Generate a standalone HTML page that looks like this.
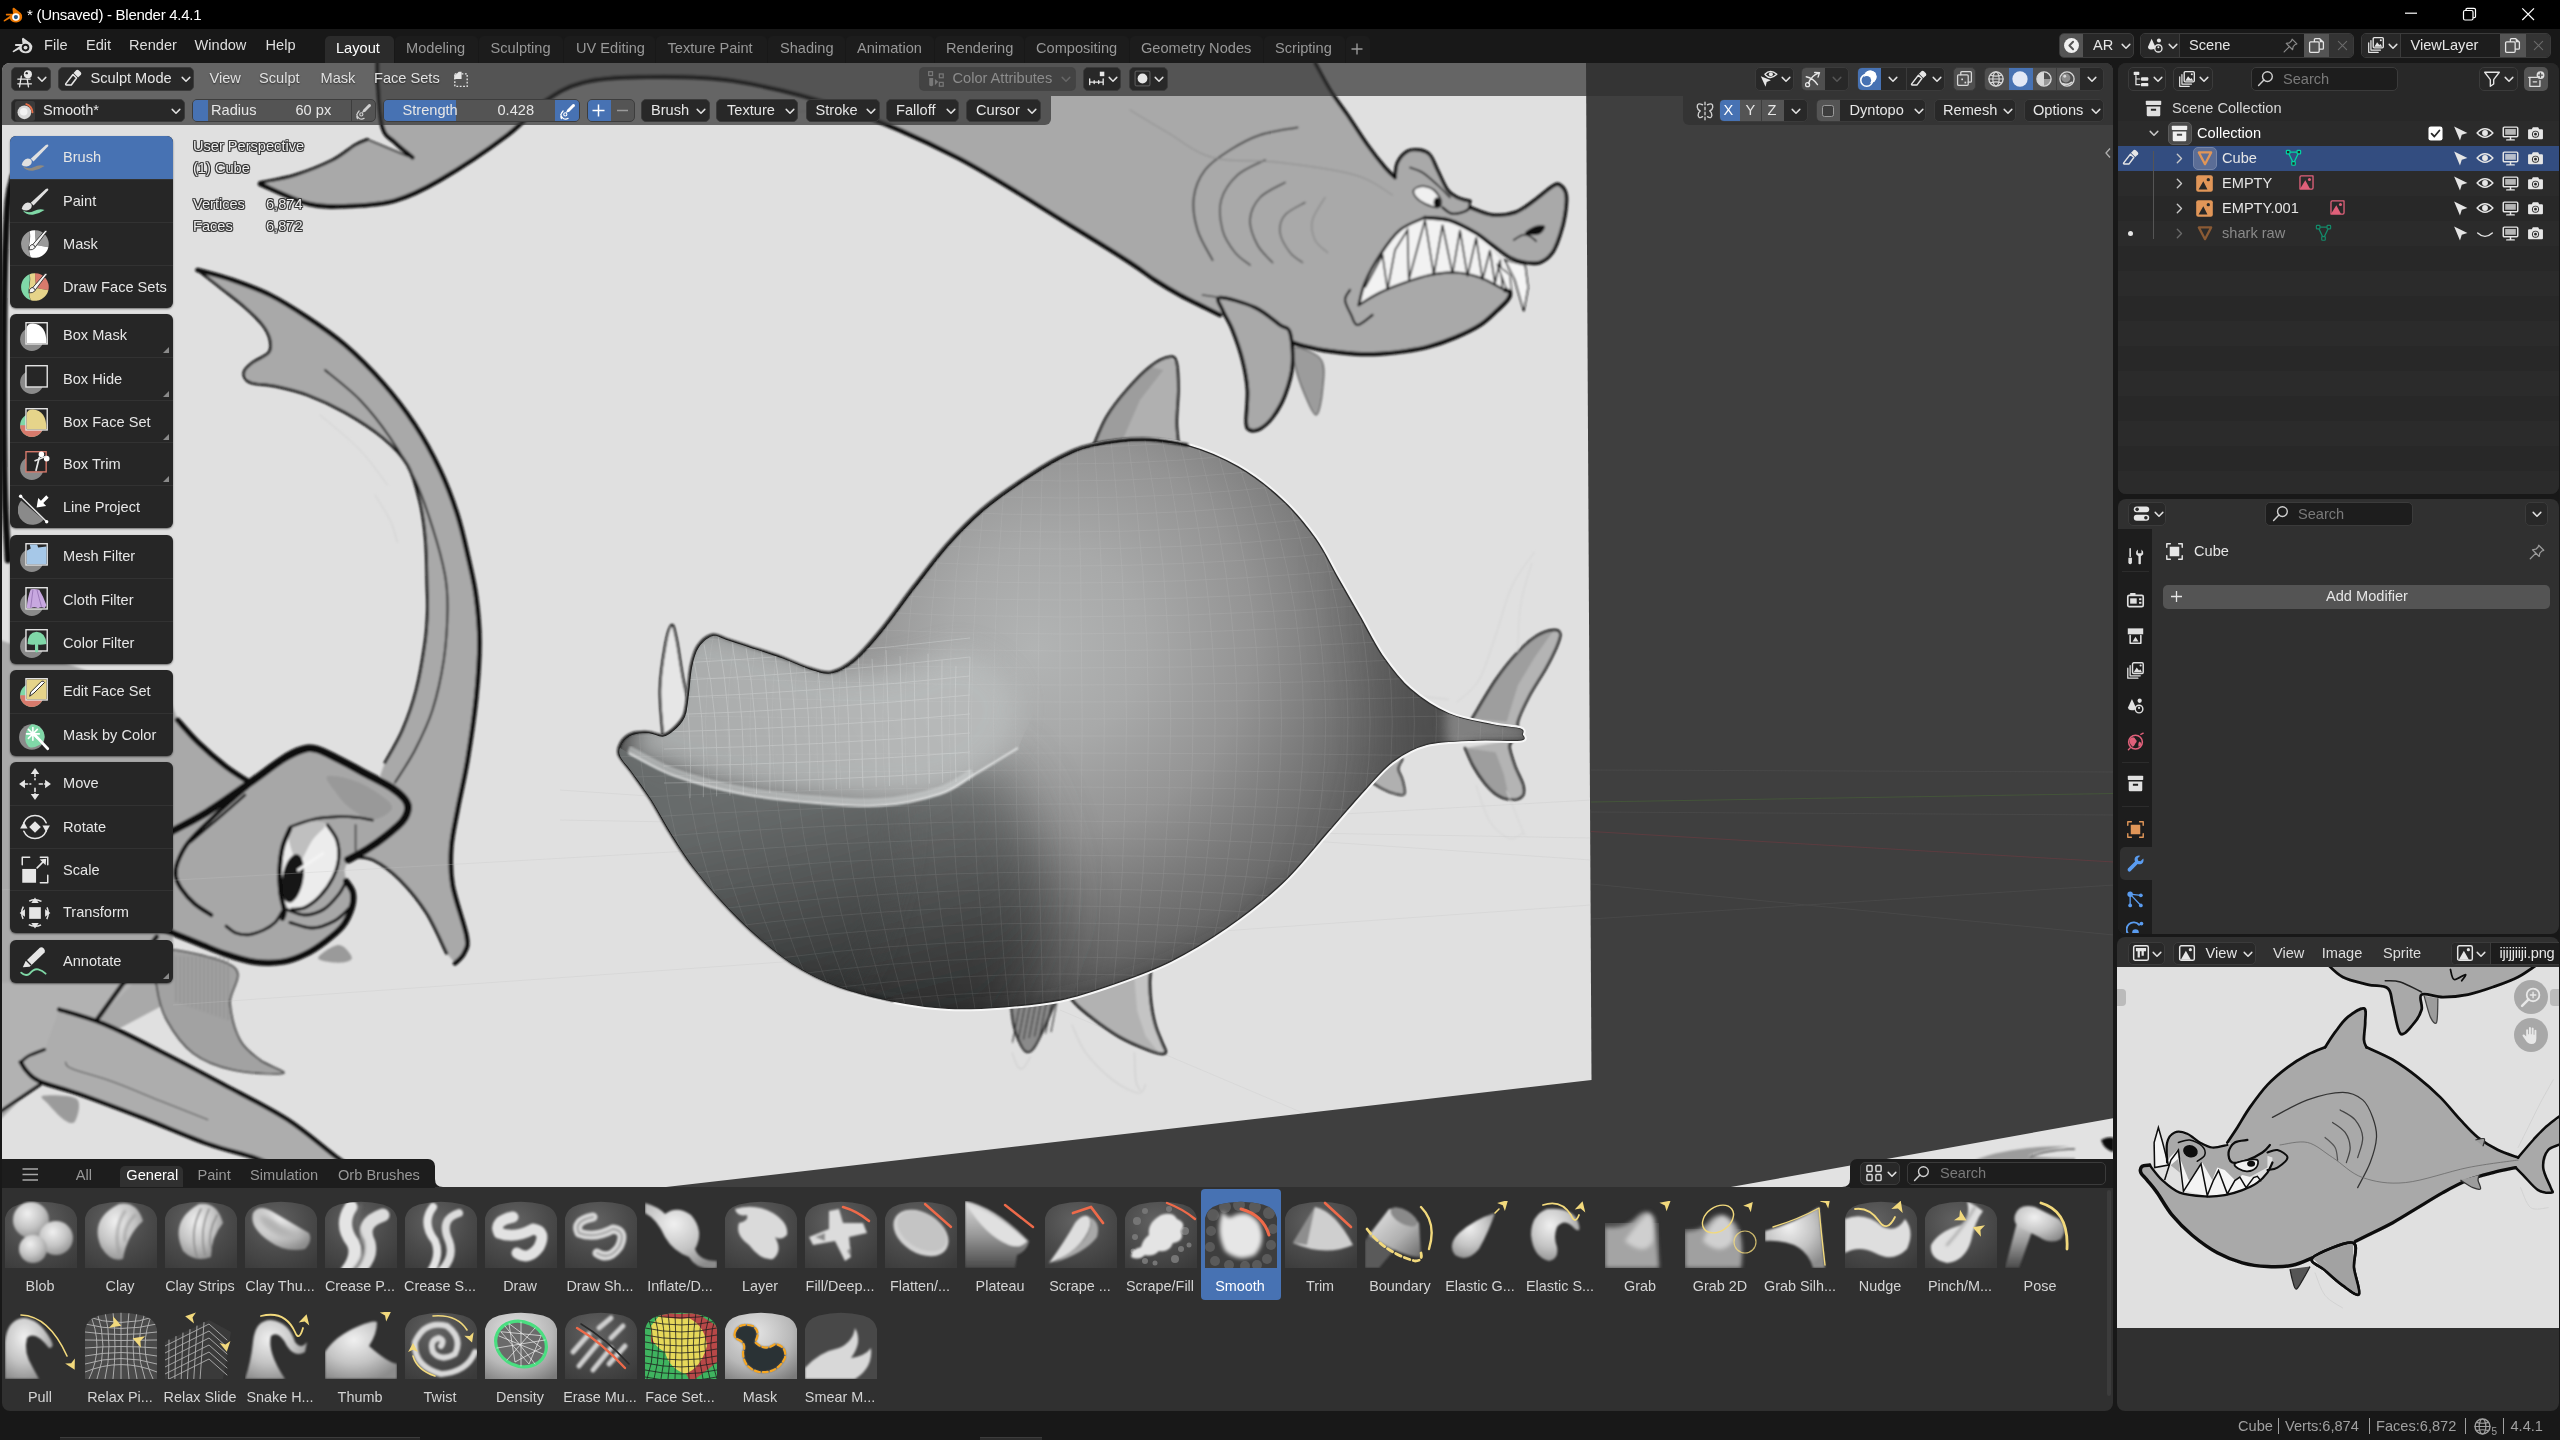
<!DOCTYPE html><html><head><meta charset="utf-8"><title>Blender</title><style>
*{box-sizing:border-box;margin:0;padding:0}
html{width:2560px;height:1440px;overflow:hidden;background:#181818}
body{width:2560px;height:1440px;overflow:hidden;background:transparent;will-change:transform}
body{position:relative;font-family:"Liberation Sans",sans-serif;font-size:14.6px;color:#e6e6e6;-webkit-font-smoothing:antialiased}
div,svg.abs{position:absolute}
.t{white-space:nowrap;line-height:20px;height:20px;color:#e6e6e6}
.tc{white-space:nowrap;line-height:20px;height:20px;color:#e6e6e6;text-align:center}
.dim{color:#989898}
.sh{text-shadow:0 1px 1.5px rgba(0,0,0,.55)}
.btn{background:#282828;border:1px solid #3b3b3b;border-radius:5px}
.fld{background:#545454;border:1px solid #3d3d3d;border-radius:5px;overflow:hidden}
.g{background:#545454}
.bl{background:#4772b3}
.tool{background:#262626;border-radius:6px;box-shadow:0 1px 2px rgba(0,0,0,.5)}
.ti{left:0;width:163px;height:43px;border-top:1px solid #323232}
.ti:first-child{border-top:none}
.ti .t{left:53px;top:11px;font-size:14.6px}
.ov{white-space:nowrap;line-height:20px;height:20px;color:#efefef;text-shadow:1px 1px 0 rgba(50,50,50,.8),-1px -1px 0 rgba(50,50,50,.8),1px -1px 0 rgba(50,50,50,.8),-1px 1px 0 rgba(50,50,50,.8),0 1px 0 rgba(50,50,50,.8),1px 0 0 rgba(50,50,50,.8),0 -1px 0 rgba(50,50,50,.8),-1px 0 0 rgba(50,50,50,.8)}
.bt{white-space:nowrap;line-height:18px;height:18px;width:80px;text-align:center;color:#d4d4d4;font-size:14.4px}
</style></head><body>
<svg width="0" height="0" style="position:absolute"><defs><radialGradient id="bd" cx="0.42" cy="0.3" r="0.85"><stop offset="0" stop-color="#626262"/><stop offset="0.55" stop-color="#4a4a4a"/><stop offset="1" stop-color="#3a3a3a"/></radialGradient><radialGradient id="bdl" cx="0.42" cy="0.3" r="0.85"><stop offset="0" stop-color="#e4e4e4"/><stop offset="0.6" stop-color="#b8b8b8"/><stop offset="1" stop-color="#7a7a7a"/></radialGradient><radialGradient id="bw" cx="0.4" cy="0.32" r="0.75"><stop offset="0" stop-color="#f0f0f0"/><stop offset="0.55" stop-color="#c4c4c4"/><stop offset="1" stop-color="#8c8c8c"/></radialGradient><linearGradient id="bl" x1="0" y1="0" x2="1" y2="1"><stop offset="0" stop-color="#e8e8e8"/><stop offset="0.6" stop-color="#b0b0b0"/><stop offset="1" stop-color="#6a6a6a"/></linearGradient><linearGradient id="bv" x1="0" y1="0" x2="0" y2="1"><stop offset="0" stop-color="#dcdcdc"/><stop offset="0.5" stop-color="#9a9a9a"/><stop offset="1" stop-color="#4a4a4a"/></linearGradient><filter id="bb1" x="-20%" y="-20%" width="140%" height="140%"><feGaussianBlur stdDeviation="0.9"/></filter><filter id="bb2" x="-20%" y="-20%" width="140%" height="140%"><feGaussianBlur stdDeviation="2.2"/></filter><clipPath id="bdc"><path d="M0 67V17Q2 7 14 3.5Q36 -2 58 3.5Q70 7 72 17V67Z"/></clipPath></defs></svg>
<div class="" style="left:0px;top:0px;width:2560px;height:29px;background:#000"></div>
<svg class="abs" style="left:3px;top:4.5px;" width="20" height="20" viewBox="0 0 16 16"><path d="M8.8 2.2L14.2 6.3Q15.8 7.8 15.3 10.2Q14.6 13.6 10.6 13.9Q6.6 13.9 5.4 10.8L1.2 13.2Q0.2 13.2 0.6 12.2L6 8.3H2.6Q1.8 7.6 2.6 6.9H8L7.6 3.2Q7.8 2 8.8 2.2Z" fill="#ea7600" /><circle cx="10.3" cy="9.6" r="3" fill="#fff"/><circle cx="10.3" cy="9.6" r="1.7" fill="#265787"/></svg>
<div class="t" style="left:27px;top:4.5px;font-size:15px;letter-spacing:-0.28px;color:#fff">* (Unsaved) - Blender 4.4.1</div>
<svg class="abs" style="left:2400px;top:0" width="160" height="29" viewBox="0 0 160 29"><g fill="none" stroke="#fff" stroke-width="1.2"><path d="M5 13.2H17"/><rect x="63.5" y="10.5" width="9.5" height="9.5" rx="1.5"/><path d="M66 10.5V9.5Q66 8.3 67.2 8.3H74Q75.5 8.3 75.5 9.8V16.5Q75.5 17.7 74.3 17.7H73.2"/><path d="M122.3 8.3L134 20M134 8.3L122.3 20"/></g></svg>
<div class="" style="left:0px;top:29px;width:2560px;height:34px;background:#181818"></div>
<svg class="abs" style="left:12px;top:35px;" width="21" height="21" viewBox="0 0 16 16"><path d="M8.8 2.2L14.2 6.3Q15.8 7.8 15.3 10.2Q14.6 13.6 10.6 13.9Q6.6 13.9 5.4 10.8L1.2 13.2Q0.2 13.2 0.6 12.2L6 8.3H2.6Q1.8 7.6 2.6 6.9H8L7.6 3.2Q7.8 2 8.8 2.2Z" fill="#dcdcdc" /><circle cx="10.3" cy="9.6" r="2.9" fill="#181818"/><circle cx="10.3" cy="9.6" r="1.5" fill="#dcdcdc"/></svg>
<div class="t" style="left:44px;top:35px;color:#dedede">File</div>
<div class="t" style="left:86px;top:35px;color:#dedede">Edit</div>
<div class="t" style="left:129px;top:35px;color:#dedede">Render</div>
<div class="t" style="left:194.5px;top:35px;color:#dedede">Window</div>
<div class="t" style="left:265.5px;top:35px;color:#dedede">Help</div>
<div class="" style="left:324.5px;top:36px;width:69px;height:27px;background:#2b2b2b;border-radius:5px 5px 0 0"></div>
<div class="t" style="left:336px;top:38px;color:#fff">Layout</div>
<div class="" style="left:395px;top:36px;width:83px;height:27px;background:#1c1c1c;border-radius:5px 5px 0 0"></div>
<div class="t" style="left:406px;top:38px;color:#989898">Modeling</div>
<div class="" style="left:479px;top:36px;width:84px;height:27px;background:#1c1c1c;border-radius:5px 5px 0 0"></div>
<div class="t" style="left:490.5px;top:38px;color:#989898">Sculpting</div>
<div class="" style="left:564px;top:36px;width:91px;height:27px;background:#1c1c1c;border-radius:5px 5px 0 0"></div>
<div class="t" style="left:576px;top:38px;color:#989898">UV Editing</div>
<div class="" style="left:656px;top:36px;width:111px;height:27px;background:#1c1c1c;border-radius:5px 5px 0 0"></div>
<div class="t" style="left:667.5px;top:38px;color:#989898">Texture Paint</div>
<div class="" style="left:768px;top:36px;width:77px;height:27px;background:#1c1c1c;border-radius:5px 5px 0 0"></div>
<div class="t" style="left:780px;top:38px;color:#989898">Shading</div>
<div class="" style="left:846px;top:36px;width:87.5px;height:27px;background:#1c1c1c;border-radius:5px 5px 0 0"></div>
<div class="t" style="left:857px;top:38px;color:#989898">Animation</div>
<div class="" style="left:934.5px;top:36px;width:89px;height:27px;background:#1c1c1c;border-radius:5px 5px 0 0"></div>
<div class="t" style="left:946px;top:38px;color:#989898">Rendering</div>
<div class="" style="left:1024.5px;top:36px;width:104px;height:27px;background:#1c1c1c;border-radius:5px 5px 0 0"></div>
<div class="t" style="left:1036px;top:38px;color:#989898">Compositing</div>
<div class="" style="left:1129.5px;top:36px;width:133px;height:27px;background:#1c1c1c;border-radius:5px 5px 0 0"></div>
<div class="t" style="left:1141px;top:38px;color:#989898">Geometry Nodes</div>
<div class="" style="left:1263.5px;top:36px;width:81.5px;height:27px;background:#1c1c1c;border-radius:5px 5px 0 0"></div>
<div class="t" style="left:1275px;top:38px;color:#989898">Scripting</div>
<div class="" style="left:1346px;top:36px;width:24px;height:27px;background:#1c1c1c;border-radius:5px 5px 0 0"></div>
<svg class="abs" style="left:1350px;top:42px" width="14" height="14" viewBox="0 0 14 14"><path d="M7 1.5V12.5M1.5 7H12.5" stroke="#989898" stroke-width="1.4"/></svg>
<div class="" style="left:2059px;top:33px;width:75px;height:24.5px;background:#282828;border:1px solid #3b3b3b;border-radius:5px;overflow:hidden"><div style="left:-1px;top:-1px;width:24px;height:24.5px;background:#545454"></div></div>
<svg class="abs" style="left:2062.5px;top:36.8px;" width="17" height="17" viewBox="0 0 16 16"><circle cx="8" cy="8" r="7" fill="#f0f0f0"/><path d="M9.5 4.5L6 8L9.5 11.5" fill="none" stroke="#545454" stroke-width="1.8" stroke-linecap="round" stroke-linejoin="round" /></svg>
<div class="t" style="left:2093px;top:35.3px;">AR</div>
<svg class="abs" style="left:2120.5px;top:42.5px" width="10" height="7" viewBox="0 0 10 7"><path d="M1.2 1.4L5 5.2L8.8 1.4" fill="none" stroke="#e0e0e0" stroke-width="1.5" stroke-linecap="round" stroke-linejoin="round"/></svg>
<div class="" style="left:2140px;top:33px;width:214px;height:24.5px;background:#1d1d1d;border:1px solid #3b3b3b;border-radius:5px;overflow:hidden"><div style="left:-1px;top:-1px;width:40px;height:24.5px;background:#282828;border-right:1px solid #3b3b3b"></div><div style="left:163px;top:-1px;width:25px;height:24.5px;background:#545454"></div><div style="left:188px;top:-1px;width:26px;height:24.5px;background:#333"></div></div>
<svg class="abs" style="left:2146px;top:36.3px;" width="18" height="18" viewBox="0 0 16 16"><path d="M5 2.5L8.5 10Q8 12 5 12Q1.5 12 1.8 9.5Z" fill="#e6e6e6" /><circle cx="11.5" cy="4" r="1.8" fill="#e6e6e6"/><circle cx="11" cy="11" r="3.2" fill="none" stroke="#e6e6e6" stroke-width="1.2"/><circle cx="11" cy="10" r="0.9" fill="#e6e6e6"/></svg>
<svg class="abs" style="left:2167.5px;top:42.5px" width="10" height="7" viewBox="0 0 10 7"><path d="M1.2 1.4L5 5.2L8.8 1.4" fill="none" stroke="#e0e0e0" stroke-width="1.5" stroke-linecap="round" stroke-linejoin="round"/></svg>
<div class="t" style="left:2189px;top:35.3px;">Scene</div>
<svg class="abs" style="left:2282px;top:37px;" width="17" height="17" viewBox="0 0 16 16"><path d="M9.5 2L14 6.5L12.5 7L10.5 9L10 12L4 6L7 5.5L9 3.5ZM7 9L2 14" fill="none" stroke="#8a8a8a" stroke-width="1.1" stroke-linecap="round" stroke-linejoin="round" /></svg>
<svg class="abs" style="left:2308px;top:36.8px;" width="17" height="17" viewBox="0 0 16 16"><path d="M6 4.5V2.5Q6 1.5 7 1.5H11L14.5 5V10.5Q14.5 11.5 13.5 11.5H10.5M10.5 5.5V13.5Q10.5 14.5 9.5 14.5H2.5Q1.5 14.5 1.5 13.5V5.5Q1.5 4.5 2.5 4.5H9.5Q10.5 4.5 10.5 5.5Z" fill="none" stroke="#e6e6e6" stroke-width="1.2" stroke-linecap="round" stroke-linejoin="round" /><path d="M11 1.5L14.5 5H11Z" fill="#e6e6e6" /></svg>
<svg class="abs" style="left:2336.5px;top:39.8px;" width="11" height="11" viewBox="0 0 16 16"><path d="M2 2L14 14M14 2L2 14" fill="none" stroke="#6a6a6a" stroke-width="1.6" stroke-linecap="round" stroke-linejoin="round" /></svg>
<div class="" style="left:2361px;top:33px;width:189.5px;height:24.5px;background:#1d1d1d;border:1px solid #3b3b3b;border-radius:5px;overflow:hidden"><div style="left:-1px;top:-1px;width:40px;height:24.5px;background:#282828;border-right:1px solid #3b3b3b"></div><div style="left:138px;top:-1px;width:25.5px;height:24.5px;background:#545454"></div><div style="left:163.5px;top:-1px;width:26px;height:24.5px;background:#333"></div></div>
<svg class="abs" style="left:2366.5px;top:36.3px;" width="18" height="18" viewBox="0 0 16 16"><path d="M3.5 4V12.5H12M1.5 6V14.5H10" fill="none" stroke="#e6e6e6" stroke-width="1.1" stroke-linecap="round" stroke-linejoin="round" /><rect x="5.5" y="1.5" width="9" height="9" rx="1" fill="none" stroke="#e6e6e6" stroke-width="1.2"/><path d="M6.5 9.5L9 5.5L11 8L12 7L13.5 9.5Z" fill="#e6e6e6" /><circle cx="12.3" cy="3.8" r="0.9" fill="#e6e6e6"/></svg>
<svg class="abs" style="left:2387.5px;top:42.5px" width="10" height="7" viewBox="0 0 10 7"><path d="M1.2 1.4L5 5.2L8.8 1.4" fill="none" stroke="#e0e0e0" stroke-width="1.5" stroke-linecap="round" stroke-linejoin="round"/></svg>
<div class="t" style="left:2410.5px;top:35.3px;">ViewLayer</div>
<svg class="abs" style="left:2504px;top:36.8px;" width="17" height="17" viewBox="0 0 16 16"><path d="M6 4.5V2.5Q6 1.5 7 1.5H11L14.5 5V10.5Q14.5 11.5 13.5 11.5H10.5M10.5 5.5V13.5Q10.5 14.5 9.5 14.5H2.5Q1.5 14.5 1.5 13.5V5.5Q1.5 4.5 2.5 4.5H9.5Q10.5 4.5 10.5 5.5Z" fill="none" stroke="#e6e6e6" stroke-width="1.2" stroke-linecap="round" stroke-linejoin="round" /><path d="M11 1.5L14.5 5H11Z" fill="#e6e6e6" /></svg>
<svg class="abs" style="left:2532.5px;top:39.8px;" width="11" height="11" viewBox="0 0 16 16"><path d="M2 2L14 14M14 2L2 14" fill="none" stroke="#6a6a6a" stroke-width="1.6" stroke-linecap="round" stroke-linejoin="round" /></svg>
<div style="left:2px;top:63px;width:2111px;height:1127px;border-radius:8px 8px 0 0;overflow:hidden;background:#3f3f3f">
<svg class="abs" style="left:0;top:0" width="2112" height="1127" viewBox="2 63 2112 1127">
<defs>
<clipPath id="cpl"><path d="M0 63L1586 63L1591.5 1080L0 1264Z"/></clipPath>
<filter id="b1" x="-5%" y="-5%" width="110%" height="110%"><feGaussianBlur stdDeviation="1.0"/></filter>
<filter id="b6" filterUnits="userSpaceOnUse" x="0" y="0" width="2200" height="1300"><feGaussianBlur stdDeviation="6"/></filter>
<filter id="b14" filterUnits="userSpaceOnUse" x="0" y="0" width="2200" height="1300"><feGaussianBlur stdDeviation="14"/></filter>
<filter id="b30" filterUnits="userSpaceOnUse" x="0" y="0" width="2200" height="1300"><feGaussianBlur stdDeviation="30"/></filter>
</defs>
<rect x="0" y="60" width="2120" height="1140" fill="#3f3f3f"/>
<g stroke="#484848" stroke-width="1" fill="none"><path d="M1591 884L2114 935"/><path d="M1591 919L2114 885"/><path d="M1591 770L2114 772"/><path d="M1591 812L2114 815"/></g>
<path d="M1591 831.5L2114 862" stroke="#5c3c40" stroke-width="1"/>
<path d="M1591 802L2114 793.5" stroke="#44553a" stroke-width="1"/>
<path d="M0 63L1586 63L1591.5 1080L0 1264Z" fill="#e0e0e0"/>
<g clip-path="url(#cpl)" filter="url(#b1)">
<path d="M378 60L1312 60L1315 63L1330 90L1347.5 115L1367.5 145L1385 167.5L1395 177.5L1397.5 162.5L1407.5 151.2L1420 150L1430 155L1437.5 170L1447.5 190L1457.5 197.5L1470 201.2L1470 207.5L1492.5 215L1515 212.5L1535 200L1552.5 186.2L1560 185L1566.2 195L1565 215L1560 235L1552.5 252.5L1540 262.5L1525 262.5L1510 257.5L1492.5 245L1475 232.5L1450 220.5L1425 217.5L1425 217.5L1400 230L1380 255L1365 282.5L1358.8 305L1358.8 305L1380 292.5L1405 282.5L1430 275L1455 272.5L1480 277.5L1500 287.5L1505 290L1505 290L1510 292.5L1507.5 300L1497.5 310L1480 325L1455 337.5L1430 346.2L1405 351.2L1380 353.8L1355 353.8L1330 351.2L1305 346.2L1292.5 342.5L1292.5 365L1285 395L1272.5 417.5L1260 428.8L1250 430L1246.2 422.5L1247.5 390L1242.5 360L1232.5 330L1222.5 310L1220 315L1205 307.5L1180 295L1155 280L1130 262.5L1069.9 225L957.4 157.5L844.9 108.7L732.4 80.6L638.7 76.9L582.4 82.5L545 101L507.5 135L440 180L395 200.6L350 206L309 204L260 184L260 182.5L295 175L332.5 160L355 145L367.5 139.5L412.5 157.5L395 142.5L382.5 127.5L378 85L377.5 60Z" fill="#a9a9a9"/>
<path d="M1295 347.5C1299.4 346.7 1316.7 352.9 1321.2 360C1325.8 367.1 1323.3 380.8 1322.5 390C1321.7 399.2 1319.2 414.2 1316.2 415C1313.3 415.8 1308.5 403.3 1305 395C1301.5 386.7 1296.7 372.9 1295 365C1293.3 357.1 1290.6 348.3 1295 347.5Z" fill="#9c9c9c" stroke="#555" stroke-width="1.2"/>
<path d="M1358.8 305L1365 282.5L1380 255L1400 230L1425 217.5L1450 222.5L1475 235L1492.5 250L1505 265L1505 290L1500 287.5L1480 277.5L1455 272.5L1430 275L1405 282.5L1380 292.5L1358.8 305Z" fill="#f2f2f2"/>
<path d="M1365 287.5L1382.5 255L1387.5 290L1395 250L1407.5 230L1408.8 280L1425 220L1433.8 275L1442.5 225L1452.5 273.8L1460 230L1467.5 276.2L1476.2 237.5L1482.5 280L1490 250L1495 283.8L1500 260L1502.5 287.5" fill="none" stroke="#0c0c0c" stroke-width="1.6" stroke-linejoin="miter"/>
<path d="M1505 260L1515 280L1523.8 311.2L1528 287.5L1525 265Z" fill="#f4f4f4" stroke="#0c0c0c" stroke-width="1.5"/>
<path d="M1497.5 265L1505 285L1511.2 297.5L1510 275Z" fill="#f4f4f4" stroke="#0c0c0c" stroke-width="1.2"/>
<path d="M260 184C268.2 187.3 294 200.3 309 204C324 207.7 335.7 206.6 350 206C364.3 205.4 380 204.9 395 200.6C410 196.3 421.2 190.9 440 180C458.8 169.1 490 148.2 507.5 135C525 121.8 532.5 109.8 545 101C557.5 92.2 566.8 86.5 582.4 82.5C598 78.5 613.7 77.2 638.7 76.9C663.7 76.6 698 75.3 732.4 80.6C766.8 85.9 807.4 95.9 844.9 108.7C882.4 121.5 919.9 138.1 957.4 157.5C994.9 176.9 1041.1 207.5 1069.9 225C1098.7 242.5 1115.8 253.3 1130 262.5C1144.2 271.7 1146.7 274.6 1155 280C1163.3 285.4 1171.7 290.4 1180 295C1188.3 299.6 1198.3 304.2 1205 307.5C1211.7 310.8 1217.5 313.8 1220 315" fill="none" stroke="#0c0c0c" stroke-width="4.6" stroke-linecap="round" stroke-linejoin="round" />
<path d="M260 182.5C265.8 181.2 282.9 178.8 295 175C307.1 171.2 322.5 165 332.5 160C342.5 155 349.2 148.4 355 145C360.8 141.6 365.4 140.4 367.5 139.5" fill="none" stroke="#0c0c0c" stroke-width="3.0" stroke-linecap="round" stroke-linejoin="round" />
<path d="M367.5 139.5C375 142.5 407.9 157 412.5 157.5C417.1 158 397.9 145 395 142.5" fill="none" stroke="#0c0c0c" stroke-width="1.6" stroke-linecap="round" stroke-linejoin="round" />
<path d="M412.5 157.5C409.6 155 400 147.5 395 142.5C390 137.5 385.3 137.1 382.5 127.5C379.7 117.9 378.8 96.2 378 85C377.2 73.8 377.6 64.2 377.5 60" fill="none" stroke="#0c0c0c" stroke-width="4.2" stroke-linecap="round" stroke-linejoin="round" />
<path d="M1220 297.5C1225.4 297.1 1245 302.9 1255 307.5C1265 312.1 1274.2 320.8 1280 325C1285.8 329.2 1287.9 325.8 1290 332.5C1292.1 339.2 1293.3 354.6 1292.5 365C1291.7 375.4 1288.3 386.2 1285 395C1281.7 403.8 1276.7 411.9 1272.5 417.5C1268.3 423.1 1263.8 426.7 1260 428.8C1256.2 430.8 1252.3 431 1250 430C1247.7 429 1246.7 429.2 1246.2 422.5C1245.8 415.8 1248.1 400.4 1247.5 390C1246.9 379.6 1245 370 1242.5 360C1240 350 1235.8 338.3 1232.5 330C1229.2 321.7 1224.6 315.4 1222.5 310C1220.4 304.6 1214.6 297.9 1220 297.5Z" fill="none" stroke="#0c0c0c" stroke-width="3.6" stroke-linecap="round" stroke-linejoin="round" />
<path d="M1292.5 342.5C1294.6 343.1 1298.8 344.8 1305 346.2C1311.2 347.7 1321.7 350 1330 351.2C1338.3 352.5 1346.7 353.3 1355 353.8C1363.3 354.2 1371.7 354.2 1380 353.8C1388.3 353.3 1396.7 352.5 1405 351.2C1413.3 350 1421.7 348.5 1430 346.2C1438.3 344 1446.7 341 1455 337.5C1463.3 334 1472.9 329.6 1480 325C1487.1 320.4 1492.9 314.2 1497.5 310C1502.1 305.8 1505.4 302.9 1507.5 300C1509.6 297.1 1510.4 294.2 1510 292.5C1509.6 290.8 1505.8 290.4 1505 290" fill="none" stroke="#0c0c0c" stroke-width="4.2" stroke-linecap="round" stroke-linejoin="round" />
<path d="M1505 290C1504.2 289.6 1504.2 289.6 1500 287.5C1495.8 285.4 1487.5 280 1480 277.5C1472.5 275 1463.3 272.9 1455 272.5C1446.7 272.1 1438.3 273.3 1430 275C1421.7 276.7 1413.3 279.6 1405 282.5C1396.7 285.4 1387.7 288.8 1380 292.5C1372.3 296.2 1362.3 302.9 1358.8 305" fill="none" stroke="#0c0c0c" stroke-width="2.2" stroke-linecap="round" stroke-linejoin="round" />
<path d="M1358.8 305C1359.8 301.2 1361.5 290.8 1365 282.5C1368.5 274.2 1374.2 263.8 1380 255C1385.8 246.2 1392.5 236.2 1400 230C1407.5 223.8 1420.8 219.6 1425 217.5" fill="none" stroke="#0c0c0c" stroke-width="2.6" stroke-linecap="round" stroke-linejoin="round" />
<path d="M1425 217.5C1429.2 218 1441.7 218 1450 220.5C1458.3 223 1467.9 228.4 1475 232.5C1482.1 236.6 1486.7 240.8 1492.5 245C1498.3 249.2 1504.6 254.6 1510 257.5C1515.4 260.4 1520 261.7 1525 262.5C1530 263.3 1535.4 264.2 1540 262.5C1544.6 260.8 1549.2 257.1 1552.5 252.5C1555.8 247.9 1557.9 241.2 1560 235C1562.1 228.8 1564 221.7 1565 215C1566 208.3 1567.1 200 1566.2 195C1565.4 190 1562.3 186.5 1560 185C1557.7 183.5 1556.7 183.8 1552.5 186.2C1548.3 188.8 1541.2 195.6 1535 200C1528.8 204.4 1522.1 210 1515 212.5C1507.9 215 1500 215.8 1492.5 215C1485 214.2 1473.8 208.8 1470 207.5" fill="none" stroke="#0c0c0c" stroke-width="3.6" stroke-linecap="round" stroke-linejoin="round" />
<path d="M1470 201.2C1467.9 200.6 1461.2 199.4 1457.5 197.5C1453.8 195.6 1450.8 194.6 1447.5 190C1444.2 185.4 1440.4 175.8 1437.5 170C1434.6 164.2 1432.9 158.3 1430 155C1427.1 151.7 1423.8 150.6 1420 150C1416.2 149.4 1411.2 149.2 1407.5 151.2C1403.8 153.3 1399.6 158.1 1397.5 162.5C1395.4 166.9 1395.4 175 1395 177.5" fill="none" stroke="#0c0c0c" stroke-width="3.4" stroke-linecap="round" stroke-linejoin="round" />
<path d="M1395 177.5C1393.3 175.8 1389.6 172.9 1385 167.5C1380.4 162.1 1373.8 153.8 1367.5 145C1361.2 136.2 1353.8 124.2 1347.5 115C1341.2 105.8 1335.4 98.7 1330 90C1324.6 81.3 1317.5 67.5 1315 63" fill="none" stroke="#0c0c0c" stroke-width="3.8" stroke-linecap="round" stroke-linejoin="round" />
<path d="M1470 201.2C1469.6 202.7 1470.4 207.9 1467.5 210C1464.6 212.1 1456.7 214.2 1452.5 213.8C1448.3 213.3 1444.2 208.5 1442.5 207.5" fill="none" stroke="#0c0c0c" stroke-width="2.4" stroke-linecap="round" stroke-linejoin="round" />
<path d="M1413.8 190C1414.8 188.1 1419.2 186.2 1422.5 186.2C1425.8 186.2 1430.6 187.5 1433.8 190C1436.9 192.5 1440.6 198.3 1441.2 201.2C1441.9 204.2 1440.2 207.1 1437.5 207.5C1434.8 207.9 1428.5 205.4 1425 203.8C1421.5 202.1 1418.1 199.8 1416.2 197.5C1414.4 195.2 1412.7 191.9 1413.8 190Z" fill="#f0f0f0" stroke="#0c0c0c" stroke-width="1.6"/>
<ellipse cx="1437" cy="202.5" rx="3.4" ry="5" fill="#0c0c0c"/>
<path d="M1410 167.5C1412.1 168.3 1417.9 169.6 1422.5 172.5C1427.1 175.4 1432.9 180.8 1437.5 185C1442.1 189.2 1447.9 195.4 1450 197.5" fill="none" stroke="#0c0c0c" stroke-width="1.6" stroke-linecap="round" stroke-linejoin="round" />
<path d="M1525 232.5C1525.8 231 1531.7 227.3 1535 226.2C1538.3 225.2 1544.2 225 1545 226.2C1545.8 227.5 1542.5 232.3 1540 233.8C1537.5 235.2 1532.5 235.2 1530 235C1527.5 234.8 1524.2 234 1525 232.5Z" fill="#0c0c0c"/>
<path d="M1513.8 240C1515.2 239.2 1519.8 235.6 1522.5 235C1525.2 234.4 1527.7 235.2 1530 236.2C1532.3 237.3 1535.2 240.4 1536.2 241.2" fill="none" stroke="#0c0c0c" stroke-width="1.6" stroke-linecap="round" stroke-linejoin="round" />
<path d="M1350 290C1349.2 291.7 1344.8 295.8 1345 300C1345.2 304.2 1349.2 310.8 1351.2 315C1353.3 319.2 1354 325 1357.5 325C1361 325 1370 316.7 1372.5 315" fill="none" stroke="#0c0c0c" stroke-width="2.2" stroke-linecap="round" stroke-linejoin="round" />
<path d="M1297.5 127.5C1291.2 128.8 1271.2 131.2 1260 135C1248.8 138.8 1239.2 144.2 1230 150C1220.8 155.8 1211 162.1 1205 170C1199 177.9 1195 187.5 1193.8 197.5C1192.5 207.5 1194.4 219.6 1197.5 230C1200.6 240.4 1210 255 1212.5 260" fill="none" stroke="#4a4a4a" stroke-width="2.0" stroke-linecap="round" stroke-linejoin="round" />
<path d="M1265 160C1260.4 162.5 1244.8 168.3 1237.5 175C1230.2 181.7 1223.8 190.8 1221.2 200C1218.8 209.2 1220.2 221.2 1222.5 230C1224.8 238.8 1230.4 246.7 1235 252.5C1239.6 258.3 1247.5 262.9 1250 265" fill="none" stroke="#555" stroke-width="1.8" stroke-linecap="round" stroke-linejoin="round" />
<path d="M1285 182.5C1280.8 185 1265.8 191.2 1260 197.5C1254.2 203.8 1250.4 212.1 1250 220C1249.6 227.9 1253.8 237.9 1257.5 245C1261.2 252.1 1270 259.6 1272.5 262.5" fill="none" stroke="#555" stroke-width="1.8" stroke-linecap="round" stroke-linejoin="round" />
<path d="M1305 202.5C1301.7 204.6 1289.2 210 1285 215C1280.8 220 1279.2 226.2 1280 232.5C1280.8 238.8 1286.2 247.5 1290 252.5C1293.8 257.5 1300.4 260.8 1302.5 262.5" fill="none" stroke="#666" stroke-width="1.6" stroke-linecap="round" stroke-linejoin="round" />
<path d="M1325 197.5C1322.9 201.2 1314.2 212.9 1312.5 220C1310.8 227.1 1312.5 234.6 1315 240C1317.5 245.4 1325.4 250.4 1327.5 252.5" fill="none" stroke="#888" stroke-width="1.2" stroke-linecap="round" stroke-linejoin="round" />
<path d="M1130 110C1136.2 113.8 1153.8 124.6 1167.5 132.5C1181.2 140.4 1193.8 152.5 1212.5 157.5C1231.2 162.5 1256.2 159.6 1280 162.5C1303.8 165.4 1336.2 169.6 1355 175C1373.8 180.4 1386.2 191.7 1392.5 195" fill="none" stroke="#8d8d8d" stroke-width="1.0" stroke-linecap="round" stroke-linejoin="round" />
<path d="M1202.5 295C1205.4 295.4 1217.1 297.1 1220 297.5" fill="none" stroke="#444" stroke-width="1.6" stroke-linecap="round" stroke-linejoin="round" />
<path d="M1427.5 0.5C1429.6 5.1 1435.8 21.8 1440 28C1444.2 34.2 1448.8 36.1 1452.5 38C1456.2 39.9 1459.6 40.1 1462.5 39.2C1465.4 38.4 1467.9 39.5 1470 33C1472.1 26.5 1474.2 5.9 1475 0.5" fill="#a9a9a9" stroke="#0c0c0c" stroke-width="2.4"/>
<path d="M750 105C756.7 106.2 776.7 111.5 790 112C803.3 112.5 823.3 108.7 830 108" fill="none" stroke="#c4c4c4" stroke-width="1.2" stroke-linecap="round" stroke-linejoin="round" />
<path d="M197.5 270L232.5 280L270 295L307.5 317.5L345 345L382.5 382.5L415 425L440 470L457.5 515L468.8 560L476.2 597.5L479.5 642.5L476.2 697.5L467.5 760L457.5 810L451.2 847.5L452.5 885L466.7 936.7L464 953.3L455 963.3L446.7 953.3L426.7 913.3L400 880L373.3 860L353.3 856.7L386.7 840L405 823L410 806.7L400 791.7L380 776L385 762.5L402.5 730L416.2 690L425 642.5L427.5 610L427 585L425.5 540L420 502.5L407.5 465L382.5 437.5L345 412.5L307.5 395L275 386.2L250 382.5L243.8 372.5L252.5 362.5L268.8 352.5L270 340L262.5 325L245 307.5L220 287.5L197.5 270Z" fill="#a9a9a9"/>
<path d="M197.5 270C203.3 271.7 220.4 275.8 232.5 280C244.6 284.2 257.5 288.8 270 295C282.5 301.2 295 309.2 307.5 317.5C320 325.8 332.5 334.2 345 345C357.5 355.8 370.8 369.2 382.5 382.5C394.2 395.8 405.4 410.4 415 425C424.6 439.6 432.9 455 440 470C447.1 485 452.7 500 457.5 515C462.3 530 465.6 546.2 468.8 560C471.9 573.8 474.5 583.8 476.2 597.5C478 611.2 479.5 625.8 479.5 642.5C479.5 659.2 478.2 677.9 476.2 697.5C474.2 717.1 470.6 741.2 467.5 760C464.4 778.8 460.2 795.4 457.5 810C454.8 824.6 452.1 835 451.2 847.5C450.4 860 449.9 870.1 452.5 885C455.1 899.9 464.8 925.3 466.7 936.7C468.6 948.1 465.9 948.9 464 953.3C462.1 957.8 456.5 961.7 455 963.3" fill="none" stroke="#0c0c0c" stroke-width="4.6" stroke-linecap="round" stroke-linejoin="round" />
<path d="M446.7 953.3C443.3 946.7 434.4 925.6 426.7 913.3C418.9 901.1 408.9 888.9 400 880C391.1 871.1 381.1 863.9 373.3 860C365.6 856.1 356.7 857.2 353.3 856.7" fill="none" stroke="#0c0c0c" stroke-width="3.0" stroke-linecap="round" stroke-linejoin="round" />
<path d="M197.5 270C201.2 272.9 212.1 281.2 220 287.5C227.9 293.8 237.9 301.2 245 307.5C252.1 313.8 258.3 319.6 262.5 325C266.7 330.4 269 335.4 270 340C271 344.6 271.7 348.8 268.8 352.5C265.8 356.2 256.7 359.2 252.5 362.5C248.3 365.8 244.2 369.2 243.8 372.5C243.3 375.8 244.8 380.2 250 382.5C255.2 384.8 265.4 384.2 275 386.2C284.6 388.3 295.8 390.6 307.5 395C319.2 399.4 332.5 405.4 345 412.5C357.5 419.6 372.1 428.8 382.5 437.5C392.9 446.2 401.2 454.2 407.5 465C413.8 475.8 417 490 420 502.5C423 515 424.3 526.2 425.5 540C426.7 553.8 426.7 573.3 427 585C427.3 596.7 427.8 600.4 427.5 610C427.2 619.6 426.9 629.2 425 642.5C423.1 655.8 420 675.4 416.2 690C412.5 704.6 407.7 717.9 402.5 730C397.3 742.1 387.9 757.1 385 762.5" fill="none" stroke="#0c0c0c" stroke-width="2.8" stroke-linecap="round" stroke-linejoin="round" />
<path d="M325 370C330.8 375 349.2 388.8 360 400C370.8 411.2 380.8 424.2 390 437.5C399.2 450.8 407.9 465 415 480C422.1 495 427.5 511.7 432.5 527.5C437.5 543.3 442.5 561.2 445 575C447.5 588.8 447.7 595.8 447.5 610C447.3 624.2 446.2 643.3 443.8 660C441.2 676.7 437.3 695 432.5 710C427.7 725 421.2 737.9 415 750C408.8 762.1 398.3 777.1 395 782.5" fill="none" stroke="#222" stroke-width="2.0" stroke-linecap="round" stroke-linejoin="round" />
<path d="M320 415C326.7 420.8 348.8 438.3 360 450C371.2 461.7 382.9 479.2 387.5 485" fill="none" stroke="#cfcfcf" stroke-width="1.0" stroke-linecap="round" stroke-linejoin="round" />
<path d="M375 495C377.5 499.2 386.2 512.1 390 520C393.8 527.9 396.2 538.8 397.5 542.5" fill="none" stroke="#d0d0d0" stroke-width="1.0" stroke-linecap="round" stroke-linejoin="round" />
<path d="M13 176C12.2 180 9.3 186 8 200C6.7 214 5.7 236.7 5 260C4.3 283.3 4.2 311.7 4 340C3.8 368.3 3.8 403.3 4 430C4.2 456.7 4.3 478.3 5 500C5.7 521.7 7.5 550 8 560" fill="none" stroke="#0c0c0c" stroke-width="6.5" stroke-linecap="round" stroke-linejoin="round" />
<path d="M0 640L170 700L178 720L198 742L226 767L250 783L300 750L340 760L300 880L250 930L173 935L173 1000L60 1060L0 1120Z" fill="#a9a9a9"/>
<path d="M158.8 840L170 832.5L207.5 811.9L248.7 783.7L282.5 759.4L301.2 750L316.2 749.1L338.7 759.4L366.9 774.4L391.2 787.5L404.3 798.7L408.1 808.1L402.5 821.2L385.6 836.2L366.9 849.4L348.1 859.7L344.4 870L346.2 881.2L352.8 892.5L351.9 907.5L342.5 926.2L325.6 941.2L305 954.3L282.5 961.8L254.4 961.8L226.2 954.3L198.1 943.1L170 931.8L158.8 927.2Z" fill="#a7a7a7"/>
<path d="M156.7 950C169.4 946.7 221.1 957.8 233.3 966.7C245.6 975.6 228.9 991.1 230 1003.3C231.1 1015.6 235 1030.6 240 1040C245 1049.4 252.8 1054.4 260 1060C267.2 1065.6 287.8 1071.7 283.3 1073.3C278.9 1075 248.3 1073.3 233.3 1070C218.3 1066.7 204.4 1061.7 193.3 1053.3C182.2 1045 172.8 1031.1 166.7 1020C160.6 1008.9 158.3 998.3 156.7 986.7C155 975 143.9 953.3 156.7 950Z" fill="#a2a2a2" stroke="#3a3a3a" stroke-width="1.6"/>
<g stroke="#8c8c8c" stroke-width="1"><path d="M176 956L176 1002.1"/><path d="M180 956L180 1003.5"/><path d="M184 956L184 1004.9"/><path d="M188 956L188 1006.3"/><path d="M192 956L192 1007.7"/><path d="M196 956L196 1009.1"/><path d="M200 956L200 1010.5"/><path d="M204 956L204 1011.9"/><path d="M208 956L208 1013.3"/><path d="M212 956L212 1014.7"/><path d="M216 956L216 1016.1"/><path d="M220 956L220 1017.5"/><path d="M224 956L224 1018.9"/><path d="M228 956L228 1020.3"/></g>
<path d="M327.5 776.2C331.2 774.7 347.8 778.1 357.5 781.9C367.2 785.6 380 794.1 385.6 798.7C391.2 803.4 393.4 806.6 391.2 810C389 813.4 379.3 819.7 372.5 819.4C365.6 819.1 356.2 812.8 350 808.1C343.7 803.4 338.7 796.6 335 791.2C331.2 785.9 323.7 777.8 327.5 776.2Z" fill="#969696" opacity="0.8"/>
<path d="M290 830.6C294.7 827 306.2 823.1 312.5 822.2C318.7 821.2 323.4 822 327.5 825C331.5 828 335 834.4 336.9 840C338.7 845.6 339.4 852.5 338.7 858.7C338.1 865 336.2 871.2 333.1 877.5C330 883.7 324.7 891.2 320 896.2C315.3 901.2 310 905.3 305 907.5C300 909.7 293.7 911.9 290 909.4C286.2 906.9 284 899.7 282.5 892.5C280.9 885.3 280.3 874.4 280.6 866.2C280.9 858.1 282.8 849.7 284.4 843.7C285.9 837.8 285.3 834.2 290 830.6Z" fill="#ececec"/>
<path d="M290 830.6C293.4 825.8 306.5 823.1 312.5 822.2C318.4 821.2 325.6 822 325.6 825C325.6 828 316.9 833.7 312.5 840C308.1 846.2 302.8 860.6 299.4 862.5C295.9 864.4 293.4 856.5 291.9 851.2C290.3 845.9 286.5 835.5 290 830.6Z" fill="#b4b4b4" opacity="0.8"/>
<ellipse cx="292.8" cy="878.4" rx="10.5" ry="24.5" fill="#141414" transform="rotate(10 292.8 878.4)"/>
<path d="M298.4 870L322.8 853.5" stroke="#f4f4f4" stroke-width="3" stroke-linecap="round"/>
<path d="M158.8 840C160.6 838.7 161.9 837.2 170 832.5C178.1 827.8 194.4 820 207.5 811.9C220.6 803.7 236.2 792.5 248.7 783.7C261.2 775 273.7 765 282.5 759.4C291.2 753.7 295.6 751.7 301.2 750C306.9 748.3 310 747.5 316.2 749.1C322.5 750.6 330.3 755.2 338.7 759.4C347.2 763.6 358.1 769.7 366.9 774.4C375.6 779.1 385 783.4 391.2 787.5C397.5 791.6 401.5 795.3 404.3 798.7C407.2 802.2 408.4 804.4 408.1 808.1C407.8 811.9 406.2 816.6 402.5 821.2C398.7 825.9 391.5 831.5 385.6 836.2C379.7 840.9 373.1 845.5 366.9 849.4C360.6 853.3 351.2 858 348.1 859.7" fill="none" stroke="#0c0c0c" stroke-width="7.6" stroke-linecap="round" stroke-linejoin="round" />
<path d="M158.8 927.2C160.6 927.9 163.4 929.2 170 931.8C176.6 934.5 188.7 939.3 198.1 943.1C207.5 946.8 216.9 951.2 226.2 954.3C235.6 957.5 245 960.6 254.4 961.8C263.7 963.1 274 963.1 282.5 961.8C290.9 960.6 297.8 957.8 305 954.3C312.2 950.9 319.4 945.9 325.6 941.2C331.9 936.5 338.1 931.8 342.5 926.2C346.9 920.6 350.1 913.1 351.9 907.5C353.6 901.9 353.7 896.9 352.8 892.5C351.9 888.1 347.3 883.1 346.2 881.2" fill="none" stroke="#0c0c0c" stroke-width="6.2" stroke-linecap="round" stroke-linejoin="round" />
<path d="M248.7 785.6C243.4 790.3 226.9 804.4 216.9 813.7C206.9 823.1 195.3 833.7 188.7 841.9C182.2 850 179.7 856.9 177.5 862.5C175.3 868.1 175 871.2 175.6 875.6C176.2 880 178.1 884 181.2 888.7C184.4 893.4 189.4 899.4 194.4 903.7C199.4 908.1 208.4 913.1 211.2 915" fill="none" stroke="#0c0c0c" stroke-width="4.2" stroke-linecap="round" stroke-linejoin="round" />
<path d="M245 795C240 799.4 224.1 813.4 215 821.2C205.9 829 194.7 838.4 190.6 841.9" fill="none" stroke="#0c0c0c" stroke-width="2.6" stroke-linecap="round" stroke-linejoin="round" />
<path d="M226.2 926.2C227.8 927.3 231.9 931.4 235.6 932.8C239.4 934.2 244.1 935.1 248.7 934.7C253.4 934.2 259.4 932 263.7 930C268.1 927.9 271.9 925.6 275 922.5C278.1 919.4 281.2 913.1 282.5 911.2" fill="none" stroke="#0c0c0c" stroke-width="3.0" stroke-linecap="round" stroke-linejoin="round" />
<path d="M290 828.7C288.7 831.9 284.2 840.6 282.5 847.5C280.8 854.4 280 862.5 279.7 870C279.4 877.5 279.8 885.6 280.6 892.5C281.4 899.4 284 906.9 284.4 911.2C284.7 915.6 282.8 917.5 282.5 918.7" fill="none" stroke="#0c0c0c" stroke-width="4.6" stroke-linecap="round" stroke-linejoin="round" />
<path d="M290 826.9C293.7 825.6 304.4 821.1 312.5 819.4C320.6 817.6 331.2 816.9 338.7 816.6C346.2 816.2 351.9 816.9 357.5 817.5C363.1 818.1 370 819.8 372.5 820.3" fill="none" stroke="#0c0c0c" stroke-width="2.6" stroke-linecap="round" stroke-linejoin="round" />
<path d="M327.5 825C329 827.5 335 834.4 336.9 840C338.7 845.6 339.4 852.5 338.7 858.7C338.1 865 336.2 871.2 333.1 877.5C330 883.7 324.7 891.2 320 896.2C315.3 901.2 309.7 905.3 305 907.5C300.3 909.7 294 909 291.9 909.4" fill="none" stroke="#0c0c0c" stroke-width="3.2" stroke-linecap="round" stroke-linejoin="round" />
<path d="M286.2 909.4C289.4 910.3 298.7 915 305 915C311.2 915 318.1 912.8 323.7 909.4C329.4 905.9 335 899 338.7 894.4C342.5 889.7 345 883.4 346.2 881.2" fill="none" stroke="#0c0c0c" stroke-width="3.0" stroke-linecap="round" stroke-linejoin="round" />
<path d="M290 922.5C293.7 923.4 305 928.4 312.5 928.1C320 927.8 328.7 924 335 920.6C341.2 917.2 347.5 909.7 350 907.5" fill="none" stroke="#0c0c0c" stroke-width="3.0" stroke-linecap="round" stroke-linejoin="round" />
<path d="M355.6 825C355.6 829.4 355.6 846.9 355.6 851.2" fill="none" stroke="#555" stroke-width="2.0" stroke-linecap="round" stroke-linejoin="round" />
<path d="M318.1 958.1C318.1 955.1 333.1 945 338.7 945C344.4 945 351.9 955.1 351.9 958.1C351.9 961.1 344.4 962.8 338.7 962.8C333.1 962.8 318.1 961.1 318.1 958.1Z" fill="#9a9a9a"/>
<path d="M177.5 720C180.9 723.7 190 734.7 198.1 742.5C206.2 750.3 217.8 760.3 226.2 766.9C234.7 773.4 245 779.4 248.7 781.9" fill="none" stroke="#0c0c0c" stroke-width="5.4" stroke-linecap="round" stroke-linejoin="round" />
<path d="M59.1 1009.5L103.8 1023.9L159.7 1051.1L223.6 1084.6L287.5 1119.7L335.5 1156.5L359.4 1172.5L287.5 1172.5L255.6 1158.1L207.7 1143.7L143.8 1118.1L79.9 1094.2L39.9 1081.4L27.2 1071.8L20.8 1062.2L24 1055.8L44.7 1049.5Z" fill="#adadad"/>
<path d="M0 982.4L132.6 984L95.8 1022.3L59.1 1009.5L44.7 1049.5L20.8 1062.2L39.9 1084.6L0 1111.8Z" fill="#b2b2b2"/>
<path d="M43.1 1095.8C47.9 1095 71.4 1094.7 76.7 1099C82 1103.2 77.2 1117.9 75.1 1121.3C72.9 1124.8 68.4 1122.7 63.9 1119.7C59.4 1116.8 51.4 1107.8 47.9 1103.8C44.5 1099.8 38.3 1096.6 43.1 1095.8Z" fill="#9b9b9b"/>
<path d="M156.7 936.7L96.7 1020" stroke="#1a1a1a" stroke-width="4.6" stroke-linecap="round"/>
<path d="M59.1 1009.5C66.6 1011.9 87.1 1017 103.8 1023.9C120.6 1030.8 139.8 1040.9 159.7 1051.1C179.7 1061.2 202.3 1073.2 223.6 1084.6C244.9 1096 268.9 1107.8 287.5 1119.7C306.2 1131.7 323.5 1147.7 335.5 1156.5C347.4 1165.3 355.4 1169.8 359.4 1172.5" fill="none" stroke="#0c0c0c" stroke-width="4.4" stroke-linecap="round" stroke-linejoin="round" />
<path d="M20.8 1062.2C21.8 1063.8 24 1068.6 27.2 1071.8C30.4 1075 31.2 1077.7 39.9 1081.4C48.7 1085.1 62.6 1088.1 79.9 1094.2C97.2 1100.3 122.5 1109.9 143.8 1118.1C165.1 1126.4 189 1137.1 207.7 1143.7C226.3 1150.4 242.3 1153.3 255.6 1158.1C268.9 1162.9 282.2 1170.1 287.5 1172.5" fill="none" stroke="#0c0c0c" stroke-width="4.4" stroke-linecap="round" stroke-linejoin="round" />
<path d="M44.7 1049.5C42.1 1050.5 32.7 1053.7 28.8 1055.8C24.8 1058 22.1 1061.2 20.8 1062.2" fill="none" stroke="#0c0c0c" stroke-width="3.0" stroke-linecap="round" stroke-linejoin="round" />
<path d="M0 1111.8C6.7 1107.2 33.3 1089.1 39.9 1084.6" fill="none" stroke="#0c0c0c" stroke-width="3.4" stroke-linecap="round" stroke-linejoin="round" />
<path d="M65.5 1062.2C66.6 1063.3 64.2 1065.4 71.9 1068.6C79.6 1071.8 97.2 1076.1 111.8 1081.4C126.5 1086.7 143.8 1094.2 159.7 1100.6C175.7 1107 199.7 1116.5 207.7 1119.7" fill="none" stroke="#666" stroke-width="1.4" stroke-linecap="round" stroke-linejoin="round" />
</g>
<g clip-path="url(#cpl)">
<g stroke="#c4c4c4" stroke-width="1" fill="none" opacity="0.28"><path d="M173 1005L1591 905"/><path d="M0 890L1591 800"/><path d="M560 820L1591 838"/><path d="M1060 1010L1591 1235"/><path d="M560 790L1591 860"/></g>
<g filter="url(#b1)">
<path d="M1093.3 446L1106.7 416.7L1126.7 390L1150 366.7L1170 356.7L1176.7 363.3L1178.3 390L1176.7 423.3L1179.3 450Z" fill="#b0b0b0"/>
<path d="M1120 446L1140 400L1163.3 370L1150 366.7L1126.7 390L1106.7 416.7L1093.3 446Z" fill="#9d9d9d"/>
<path d="M1093.3 446C1095.6 441.1 1101.1 426 1106.7 416.7C1112.2 407.3 1119.4 398.3 1126.7 390C1133.9 381.7 1142.8 372.2 1150 366.7C1157.2 361.1 1165.6 357.2 1170 356.7C1174.4 356.1 1175.3 357.8 1176.7 363.3C1178.1 368.9 1178.3 380 1178.3 390C1178.3 400 1176.5 413.3 1176.7 423.3C1176.8 433.3 1178.9 445.6 1179.3 450" fill="none" stroke="#0c0c0c" stroke-width="2.6" stroke-linecap="round" stroke-linejoin="round" />
<path d="M663.3 740L660 690L665 646.7L671.7 625L676.7 640L683.3 680L693.3 723.3Z" fill="#e6e6e6"/>
<path d="M663.3 740C662.8 731.7 659.7 705.6 660 690C660.3 674.4 663.1 657.5 665 646.7C666.9 635.8 669.7 626.1 671.7 625C673.6 623.9 674.7 630.8 676.7 640C678.6 649.2 680.6 666.1 683.3 680C686.1 693.9 691.7 716.1 693.3 723.3" fill="none" stroke="#0c0c0c" stroke-width="2.4" stroke-linecap="round" stroke-linejoin="round" />
<path d="M1471.9 718.9L1495.6 680L1517.8 652.2L1537.2 635.6L1553.9 630L1560.3 634.2L1556.7 646.7L1545.6 668.9L1528.9 696.7L1517.8 721.7L1519.2 732.8Z" fill="#b4b4b4"/>
<path d="M1471.9 718.9L1495.6 680L1517.8 652.2L1537.2 635.6L1553.9 630L1534.4 657.8L1517.8 685.6L1506.7 721.7Z" fill="#9e9e9e"/>
<path d="M1471.9 718.9C1475.9 712.4 1487.9 691.1 1495.6 680C1503.2 668.9 1510.8 659.6 1517.8 652.2C1524.7 644.8 1531.2 639.3 1537.2 635.6C1543.2 631.9 1550 630.2 1553.9 630C1557.7 629.8 1559.8 631.4 1560.3 634.2C1560.7 636.9 1559.1 640.9 1556.7 646.7C1554.2 652.5 1550.2 660.6 1545.6 668.9C1540.9 677.2 1533.5 687.9 1528.9 696.7C1524.3 705.5 1519.4 715.6 1517.8 721.7C1516.2 727.7 1518.9 730.9 1519.2 732.8" fill="none" stroke="#0c0c0c" stroke-width="2.4" stroke-linecap="round" stroke-linejoin="round" />
<path d="M1465 748.1L1473.3 766.1L1484.4 782.8L1495.6 793.9L1509.4 799.4L1521.9 796.7L1523.3 785.6L1515 766.1L1509.4 746.7L1513.6 739.7Z" fill="#b4b4b4"/>
<path d="M1465 748.1L1473.3 766.1L1484.4 782.8L1495.6 793.9L1509.4 799.4L1503.9 774.4L1495.6 752.2Z" fill="#9e9e9e"/>
<path d="M1465 748.1C1466.4 751.1 1470.1 760.3 1473.3 766.1C1476.6 771.9 1480.7 778.1 1484.4 782.8C1488.1 787.4 1491.4 791.1 1495.6 793.9C1499.7 796.7 1505 799 1509.4 799.4C1513.8 799.9 1519.6 799 1521.9 796.7C1524.3 794.4 1524.5 790.6 1523.3 785.6C1522.2 780.5 1517.3 772.6 1515 766.1C1512.7 759.6 1509.7 751.1 1509.4 746.7C1509.2 742.3 1512.9 740.9 1513.6 739.7" fill="none" stroke="#0c0c0c" stroke-width="2.4" stroke-linecap="round" stroke-linejoin="round" />
<path d="M1366.4 778.6L1381.7 788.3L1395.6 793.9L1404.4 793.9L1402.5 780L1398.3 768.9L1402.5 759.2Z" fill="#b0b0b0"/>
<path d="M1366.4 778.6C1368.9 780.2 1376.8 785.8 1381.7 788.3C1386.5 790.9 1391.8 793 1395.6 793.9C1399.4 794.8 1403.3 796.2 1404.4 793.9C1405.6 791.6 1403.5 784.2 1402.5 780C1401.5 775.8 1398.3 772.4 1398.3 768.9C1398.3 765.4 1401.8 760.8 1402.5 759.2" fill="none" stroke="#0c0c0c" stroke-width="2.0" stroke-linecap="round" stroke-linejoin="round" />
<path d="M1534.4 552.2C1530.7 557.8 1518.7 571.7 1512.2 585.6C1505.7 599.4 1501.1 619.8 1495.6 635.6C1490 651.3 1485.4 668.9 1478.9 680C1472.4 691.1 1460.4 698.5 1456.7 702.2" fill="none" stroke="#d2d2d2" stroke-width="1.0" stroke-linecap="round" stroke-linejoin="round" />
<path d="M1531.7 563.3C1529.8 570.3 1522.9 590.2 1520.6 605C1518.2 619.8 1518.2 644.4 1517.8 652.2" fill="none" stroke="#d4d4d4" stroke-width="1.0" stroke-linecap="round" stroke-linejoin="round" />
<path d="M1476.1 785.6C1478.4 791.6 1484.4 812.9 1490 821.7C1495.6 830.5 1503.9 836.5 1509.4 838.3C1515 840.2 1521 833.7 1523.3 832.8" fill="none" stroke="#d2d2d2" stroke-width="1.0" stroke-linecap="round" stroke-linejoin="round" />
<path d="M1506.7 791.1C1508.5 795.7 1514.8 811.5 1517.8 818.9C1520.8 826.3 1523.6 832.8 1524.7 835.6" fill="none" stroke="#d4d4d4" stroke-width="1.0" stroke-linecap="round" stroke-linejoin="round" />
<path d="M1423.3 696.7C1427.5 697.1 1444.2 699 1448.3 699.4" fill="none" stroke="#d0d0d0" stroke-width="1.0" stroke-linecap="round" stroke-linejoin="round" />
<path d="M1010.8 1002.8L1013.6 1025L1020.6 1044.4L1027.5 1052.1L1034.4 1047.2L1044.2 1027.8L1052.5 1008.3L1058.1 995.8Z" fill="#8a8a8a"/>
<g stroke="#2a2a2a" stroke-width="1.1"><path d="M1020.2 1003L1012.5 1042.5"/><path d="M1025.4 1003L1018 1041"/><path d="M1030.6 1003L1023.5 1039.5"/><path d="M1035.8 1003L1029 1038"/><path d="M1041 1003L1034.5 1036.5"/><path d="M1046.2 1003L1040 1035"/><path d="M1051.4 1003L1045.5 1033.5"/><path d="M1056.6 1003L1051 1032"/></g>
<path d="M1010.8 1002.8C1011.3 1006.5 1012 1018.1 1013.6 1025C1015.2 1031.9 1018.2 1039.9 1020.6 1044.4C1022.9 1049 1025.2 1051.6 1027.5 1052.1C1029.8 1052.5 1031.7 1051.3 1034.4 1047.2C1037.2 1043.2 1041.2 1034.3 1044.2 1027.8C1047.2 1021.3 1050.2 1013.7 1052.5 1008.3C1054.8 1003 1057.1 997.9 1058.1 995.8" fill="none" stroke="#222" stroke-width="2.2" stroke-linecap="round" stroke-linejoin="round" />
<path d="M1067.8 994.4L1078.9 1006.9L1099.7 1023.6L1120.6 1037.5L1141.4 1047.2L1159.4 1053.5L1165.7 1052.1L1162.2 1043.1L1155.3 1025L1151.1 1004.2L1149.7 983.3L1151.1 965.3Z" fill="#b2b2b2"/>
<path d="M1134.4 977.8L1137.2 1011.1L1145.6 1036.1L1159.4 1053.5L1165.7 1052.1L1162.2 1043.1L1155.3 1025L1151.1 1004.2L1149.7 983.3L1151.1 965.3Z" fill="#c4c4c4"/>
<path d="M1067.8 994.4C1069.6 996.5 1073.6 1002.1 1078.9 1006.9C1084.2 1011.8 1092.8 1018.5 1099.7 1023.6C1106.7 1028.7 1113.6 1033.6 1120.6 1037.5C1127.5 1041.4 1134.9 1044.6 1141.4 1047.2C1147.9 1049.9 1155.4 1052.7 1159.4 1053.5C1163.5 1054.3 1165.2 1053.8 1165.7 1052.1C1166.2 1050.3 1164 1047.6 1162.2 1043.1C1160.5 1038.5 1157.1 1031.5 1155.3 1025C1153.4 1018.5 1152 1011.1 1151.1 1004.2C1150.2 997.2 1149.7 989.8 1149.7 983.3C1149.7 976.9 1150.9 968.3 1151.1 965.3" fill="none" stroke="#0c0c0c" stroke-width="2.8" stroke-linecap="round" stroke-linejoin="round" />
<path d="M1012.2 1052.8C1013.1 1055.1 1015.9 1064.1 1017.8 1066.7C1019.6 1069.2 1021.2 1069.7 1023.3 1068.1C1025.4 1066.4 1029.1 1058.8 1030.3 1056.9" fill="none" stroke="#d0d0d0" stroke-width="1.2" stroke-linecap="round" stroke-linejoin="round" />
<path d="M1071.9 1025C1074.3 1029.6 1078.9 1043.5 1085.8 1052.8C1092.8 1062 1104.8 1073.8 1113.6 1080.6C1122.4 1087.3 1133.3 1092.4 1138.6 1093.1C1143.9 1093.8 1144.4 1086.1 1145.6 1084.7" fill="none" stroke="#d2d2d2" stroke-width="1.4" stroke-linecap="round" stroke-linejoin="round" />
<path d="M1134.4 1052.8C1134.7 1057.4 1134.9 1074.3 1135.8 1080.6C1136.8 1086.8 1139.3 1088.7 1140 1090.3" fill="none" stroke="#d0d0d0" stroke-width="1.4" stroke-linecap="round" stroke-linejoin="round" />
</g></g>
<defs><clipPath id="cpm"><path d="M1093.3 445.6C1107.2 442.5 1127.6 440 1143.3 440C1159.1 440 1172 441.1 1187.8 445.6C1203.5 450 1222 457.6 1237.8 466.7C1253.5 475.7 1269.3 488 1282.2 500C1295.2 512 1306.3 525.9 1315.6 538.9C1324.8 551.9 1330.4 564.8 1337.8 577.8C1345.2 590.7 1352.6 603.7 1360 616.7C1367.4 629.6 1373.9 643.5 1382.2 655.6C1390.6 667.6 1398.9 679.2 1410 688.9C1421.1 698.6 1435 707.9 1448.9 713.9C1462.8 719.9 1481.5 722.5 1493.3 725C1505.2 727.5 1515.2 727.3 1520 728.9C1524.8 730.5 1522.2 732.6 1522.2 734.4C1522.2 736.3 1527.6 739.1 1520 740C1512.4 740.9 1492.2 739.3 1476.7 740C1461.1 740.7 1440.6 740.9 1426.7 744.4C1412.8 748 1403.5 753.7 1393.3 761.1C1383.1 768.5 1376.7 776.9 1365.6 788.9C1354.4 800.9 1340.6 817.6 1326.7 833.3C1312.8 849.1 1298.9 867.6 1282.2 883.3C1265.6 899.1 1245.2 914.8 1226.7 927.8C1208.1 940.7 1189.6 951.9 1171.1 961.1C1152.6 970.4 1134.1 976.9 1115.6 983.3C1097 989.8 1078.5 996.1 1060 1000C1041.5 1003.9 1023 1005.3 1004.4 1006.7C985.9 1008.1 967.4 1009.3 948.9 1008.3C930.4 1007.4 911.9 1004.8 893.3 1001.1C874.8 997.4 854.4 992.3 837.8 986.1C821.1 979.9 807.2 972.7 793.3 963.9C779.4 955.1 766.5 944 754.4 933.3C742.4 922.7 731.3 911.1 721.1 900C710.9 888.9 701.7 877.8 693.3 866.7C685 855.6 678.1 844.4 671.1 833.3C664.2 822.2 658.1 810.2 651.7 800C645.2 789.8 637.5 779.6 632.2 772.2C626.9 764.8 621.7 760.4 620 755.6C618.3 750.7 620.2 746.8 622.2 743.3C624.3 739.9 627.8 736.7 632.2 735C636.7 733.3 643.8 733.1 648.9 733.3C654 733.6 658.6 737.1 662.8 736.7C666.9 736.2 670.2 733.9 673.9 730.6C677.6 727.2 682.5 722.7 685 716.7C687.5 710.6 687.7 702.8 688.9 694.4C690.1 686.1 690.6 674.5 692.2 666.7C693.9 658.8 695.5 652.3 698.9 647.2C702.3 642.1 708.1 637.3 712.8 636.1C717.4 634.9 720.6 638.1 726.7 640C732.7 641.9 739.6 644.2 748.9 647.2C758.1 650.3 772 654.6 782.2 658.3C792.4 662 801.7 666.9 810 669.4C818.3 671.9 824.8 674.7 832.2 673.3C839.6 671.9 846.1 668.2 854.4 661.1C862.8 654 872 643.1 882.2 630.6C892.4 618.1 904.4 600.5 915.6 586.1C926.7 571.8 937.8 556.9 948.9 544.4C960 531.9 970.2 521.5 982.2 511.1C994.3 500.7 1008.1 491 1021.1 482.2C1034.1 473.4 1048 464.4 1060 458.3C1072 452.2 1079.4 448.6 1093.3 445.6Z"/></clipPath>
<radialGradient id="mg1" gradientUnits="userSpaceOnUse" cx="1085" cy="612" r="490" fx="1035" fy="652"><stop offset="0" stop-color="#b2b4b4"/><stop offset="0.2" stop-color="#a8a9a9"/><stop offset="0.4" stop-color="#949494"/><stop offset="0.55" stop-color="#7a7a7a"/><stop offset="0.7" stop-color="#626262"/><stop offset="0.85" stop-color="#4c4c4c"/><stop offset="1" stop-color="#3a3a3a"/></radialGradient>
<linearGradient id="mg2" gradientUnits="userSpaceOnUse" x1="800" y1="790" x2="860" y2="1010"><stop offset="0" stop-color="#6a6e6e"/><stop offset="0.35" stop-color="#565959"/><stop offset="1" stop-color="#2a2c2c"/></linearGradient>
<linearGradient id="mg3" gradientUnits="userSpaceOnUse" x1="880" y1="0" x2="1230" y2="0"><stop offset="0" stop-color="#fff"/><stop offset="0.35" stop-color="#fff" stop-opacity="0.75"/><stop offset="1" stop-color="#fff" stop-opacity="0"/></linearGradient>
<mask id="mk3" maskUnits="userSpaceOnUse" x="560" y="600" width="800" height="500"><rect x="560" y="600" width="800" height="500" fill="url(#mg3)"/></mask>
</defs>
<path d="M1093.3 445.6C1107.2 442.5 1127.6 440 1143.3 440C1159.1 440 1172 441.1 1187.8 445.6C1203.5 450 1222 457.6 1237.8 466.7C1253.5 475.7 1269.3 488 1282.2 500C1295.2 512 1306.3 525.9 1315.6 538.9C1324.8 551.9 1330.4 564.8 1337.8 577.8C1345.2 590.7 1352.6 603.7 1360 616.7C1367.4 629.6 1373.9 643.5 1382.2 655.6C1390.6 667.6 1398.9 679.2 1410 688.9C1421.1 698.6 1435 707.9 1448.9 713.9C1462.8 719.9 1481.5 722.5 1493.3 725C1505.2 727.5 1515.2 727.3 1520 728.9C1524.8 730.5 1522.2 732.6 1522.2 734.4C1522.2 736.3 1527.6 739.1 1520 740C1512.4 740.9 1492.2 739.3 1476.7 740C1461.1 740.7 1440.6 740.9 1426.7 744.4C1412.8 748 1403.5 753.7 1393.3 761.1C1383.1 768.5 1376.7 776.9 1365.6 788.9C1354.4 800.9 1340.6 817.6 1326.7 833.3C1312.8 849.1 1298.9 867.6 1282.2 883.3C1265.6 899.1 1245.2 914.8 1226.7 927.8C1208.1 940.7 1189.6 951.9 1171.1 961.1C1152.6 970.4 1134.1 976.9 1115.6 983.3C1097 989.8 1078.5 996.1 1060 1000C1041.5 1003.9 1023 1005.3 1004.4 1006.7C985.9 1008.1 967.4 1009.3 948.9 1008.3C930.4 1007.4 911.9 1004.8 893.3 1001.1C874.8 997.4 854.4 992.3 837.8 986.1C821.1 979.9 807.2 972.7 793.3 963.9C779.4 955.1 766.5 944 754.4 933.3C742.4 922.7 731.3 911.1 721.1 900C710.9 888.9 701.7 877.8 693.3 866.7C685 855.6 678.1 844.4 671.1 833.3C664.2 822.2 658.1 810.2 651.7 800C645.2 789.8 637.5 779.6 632.2 772.2C626.9 764.8 621.7 760.4 620 755.6C618.3 750.7 620.2 746.8 622.2 743.3C624.3 739.9 627.8 736.7 632.2 735C636.7 733.3 643.8 733.1 648.9 733.3C654 733.6 658.6 737.1 662.8 736.7C666.9 736.2 670.2 733.9 673.9 730.6C677.6 727.2 682.5 722.7 685 716.7C687.5 710.6 687.7 702.8 688.9 694.4C690.1 686.1 690.6 674.5 692.2 666.7C693.9 658.8 695.5 652.3 698.9 647.2C702.3 642.1 708.1 637.3 712.8 636.1C717.4 634.9 720.6 638.1 726.7 640C732.7 641.9 739.6 644.2 748.9 647.2C758.1 650.3 772 654.6 782.2 658.3C792.4 662 801.7 666.9 810 669.4C818.3 671.9 824.8 674.7 832.2 673.3C839.6 671.9 846.1 668.2 854.4 661.1C862.8 654 872 643.1 882.2 630.6C892.4 618.1 904.4 600.5 915.6 586.1C926.7 571.8 937.8 556.9 948.9 544.4C960 531.9 970.2 521.5 982.2 511.1C994.3 500.7 1008.1 491 1021.1 482.2C1034.1 473.4 1048 464.4 1060 458.3C1072 452.2 1079.4 448.6 1093.3 445.6Z" fill="none" stroke="#f6f6f6" stroke-width="5.5" clip-path="url(#cpl)"/>
<path d="M1093.3 445.6C1107.2 442.5 1127.6 440 1143.3 440C1159.1 440 1172 441.1 1187.8 445.6C1203.5 450 1222 457.6 1237.8 466.7C1253.5 475.7 1269.3 488 1282.2 500C1295.2 512 1306.3 525.9 1315.6 538.9C1324.8 551.9 1330.4 564.8 1337.8 577.8C1345.2 590.7 1352.6 603.7 1360 616.7C1367.4 629.6 1373.9 643.5 1382.2 655.6C1390.6 667.6 1398.9 679.2 1410 688.9C1421.1 698.6 1435 707.9 1448.9 713.9C1462.8 719.9 1481.5 722.5 1493.3 725C1505.2 727.5 1515.2 727.3 1520 728.9C1524.8 730.5 1522.2 732.6 1522.2 734.4C1522.2 736.3 1527.6 739.1 1520 740C1512.4 740.9 1492.2 739.3 1476.7 740C1461.1 740.7 1440.6 740.9 1426.7 744.4C1412.8 748 1403.5 753.7 1393.3 761.1C1383.1 768.5 1376.7 776.9 1365.6 788.9C1354.4 800.9 1340.6 817.6 1326.7 833.3C1312.8 849.1 1298.9 867.6 1282.2 883.3C1265.6 899.1 1245.2 914.8 1226.7 927.8C1208.1 940.7 1189.6 951.9 1171.1 961.1C1152.6 970.4 1134.1 976.9 1115.6 983.3C1097 989.8 1078.5 996.1 1060 1000C1041.5 1003.9 1023 1005.3 1004.4 1006.7C985.9 1008.1 967.4 1009.3 948.9 1008.3C930.4 1007.4 911.9 1004.8 893.3 1001.1C874.8 997.4 854.4 992.3 837.8 986.1C821.1 979.9 807.2 972.7 793.3 963.9C779.4 955.1 766.5 944 754.4 933.3C742.4 922.7 731.3 911.1 721.1 900C710.9 888.9 701.7 877.8 693.3 866.7C685 855.6 678.1 844.4 671.1 833.3C664.2 822.2 658.1 810.2 651.7 800C645.2 789.8 637.5 779.6 632.2 772.2C626.9 764.8 621.7 760.4 620 755.6C618.3 750.7 620.2 746.8 622.2 743.3C624.3 739.9 627.8 736.7 632.2 735C636.7 733.3 643.8 733.1 648.9 733.3C654 733.6 658.6 737.1 662.8 736.7C666.9 736.2 670.2 733.9 673.9 730.6C677.6 727.2 682.5 722.7 685 716.7C687.5 710.6 687.7 702.8 688.9 694.4C690.1 686.1 690.6 674.5 692.2 666.7C693.9 658.8 695.5 652.3 698.9 647.2C702.3 642.1 708.1 637.3 712.8 636.1C717.4 634.9 720.6 638.1 726.7 640C732.7 641.9 739.6 644.2 748.9 647.2C758.1 650.3 772 654.6 782.2 658.3C792.4 662 801.7 666.9 810 669.4C818.3 671.9 824.8 674.7 832.2 673.3C839.6 671.9 846.1 668.2 854.4 661.1C862.8 654 872 643.1 882.2 630.6C892.4 618.1 904.4 600.5 915.6 586.1C926.7 571.8 937.8 556.9 948.9 544.4C960 531.9 970.2 521.5 982.2 511.1C994.3 500.7 1008.1 491 1021.1 482.2C1034.1 473.4 1048 464.4 1060 458.3C1072 452.2 1079.4 448.6 1093.3 445.6Z" fill="url(#mg1)" stroke="#2a2a2a" stroke-width="1.4"/>
<path d="M893.3 1001.1C884.1 998.6 854.4 992.3 837.8 986.1C821.1 979.9 807.2 972.7 793.3 963.9C779.4 955.1 766.5 944 754.4 933.3C742.4 922.7 731.3 911.1 721.1 900C710.9 888.9 701.7 877.8 693.3 866.7C685 855.6 678.1 844.4 671.1 833.3C664.2 822.2 658.1 810.2 651.7 800C645.2 789.8 637.5 779.6 632.2 772.2C626.9 764.8 621.7 760.4 620 755.6C618.3 750.7 620.2 746.8 622.2 743.3C624.3 739.9 627.8 736.7 632.2 735C636.7 733.3 643.8 733.1 648.9 733.3C654 733.6 658.6 737.1 662.8 736.7C666.9 736.2 670.2 733.9 673.9 730.6C677.6 727.2 682.5 722.7 685 716.7C687.5 710.6 687.7 702.8 688.9 694.4C690.1 686.1 690.6 674.5 692.2 666.7C693.9 658.8 695.5 652.3 698.9 647.2C702.3 642.1 708.1 637.3 712.8 636.1C717.4 634.9 720.6 638.1 726.7 640C732.7 641.9 739.6 644.2 748.9 647.2C758.1 650.3 772 654.6 782.2 658.3C792.4 662 801.7 666.9 810 669.4C818.3 671.9 824.8 674.7 832.2 673.3C839.6 671.9 846.1 668.2 854.4 661.1C862.8 654 872 643.1 882.2 630.6C892.4 618.1 904.4 600.5 915.6 586.1C926.7 571.8 937.8 556.9 948.9 544.4C960 531.9 970.2 521.5 982.2 511.1C994.3 500.7 1008.1 491 1021.1 482.2C1034.1 473.4 1048 464.4 1060 458.3C1072 452.2 1079.4 448.6 1093.3 445.6C1107.2 442.5 1127.6 440 1143.3 440C1159.1 440 1180.4 444.6 1187.8 445.6" fill="none" stroke="#0e0e0e" stroke-width="3.2" stroke-linecap="round" filter="url(#b1)" clip-path="url(#cpl)" transform="translate(-0.8 -0.8)"/>
<g clip-path="url(#cpm)">
<path d="M1360 540C1363.3 513.3 1381.7 576.7 1400 600C1418.3 623.3 1451.7 657.5 1470 680C1488.3 702.5 1515 716.7 1510 735C1505 753.3 1463.3 765.8 1440 790C1416.7 814.2 1390 856.7 1370 880C1350 903.3 1318.3 950 1320 930C1321.7 910 1373.3 825 1380 760C1386.7 695 1356.7 566.7 1360 540Z" fill="#444" opacity="0.55" filter="url(#b30)"/>
<path d="M625 750C622.5 738.3 647.2 718.3 655 700C662.8 681.7 664.5 653 672 640C679.5 627 685.3 622 700 622C714.7 622 738.3 632.3 760 640C781.7 647.7 806.7 663.3 830 668C853.3 672.7 877.5 670.7 900 668C922.5 665.3 945.8 648.3 965 652C984.2 655.7 1008.3 673.7 1015 690C1021.7 706.3 1016.7 733.3 1005 750C993.3 766.7 969.2 781.7 945 790C920.8 798.3 894.2 800 860 800C825.8 800 771.7 795 740 790C708.3 785 689.2 776.7 670 770C650.8 763.3 627.5 761.7 625 750Z" fill="#babdbd" opacity="0.85" filter="url(#b14)"/>
<defs><clipPath id="cpr"><path d="M610 742C613.1 743.8 617.9 747.4 628.7 753C639.5 758.6 655.6 769 674.6 775.8C693.6 782.6 719.3 789.5 743 794C766.7 798.5 793.6 801.1 816.6 803C839.6 804.9 860.2 807.1 880.8 805.6C901.4 804.1 924.7 799 940 794C955.3 789 959.5 783.5 972.5 775.8C985.5 768.1 1010.4 752.6 1018 748L1100 560L1700 560L1700 1200L500 1200L500 700Z"/></clipPath></defs>
<g clip-path="url(#cpr)"><path d="M560 700C586.7 671.7 643.3 723.3 700 730C756.7 736.7 853.3 735 900 740C946.7 745 960 750 980 760C1000 770 1008.3 776.7 1020 800C1031.7 823.3 1048.3 866.7 1050 900C1051.7 933.3 1045 966.7 1030 1000C1015 1033.3 1015 1083.3 960 1100C905 1116.7 770 1133.3 700 1100C630 1066.7 563.3 966.7 540 900C516.7 833.3 533.3 728.3 560 700Z" fill="url(#mg2)" filter="url(#b30)" opacity="0.8"/><path d="M560 700C586.7 671.7 650 720 700 730C750 740 826.7 748.3 860 760C893.3 771.7 895 776.7 900 800C905 823.3 900 866.7 890 900C880 933.3 871.7 966.7 840 1000C808.3 1033.3 750 1116.7 700 1100C650 1083.3 563.3 966.7 540 900C516.7 833.3 533.3 728.3 560 700Z" fill="url(#mg2)" filter="url(#b14)" opacity="0.75"/></g>
<path d="M700 950C716.7 938.3 758.3 979.2 800 990C841.7 1000.8 900 1014.2 950 1015C1000 1015.8 1053.3 1007.5 1100 995C1146.7 982.5 1196.7 956.7 1230 940C1263.3 923.3 1288.3 878.3 1300 895C1311.7 911.7 1350 1005.8 1300 1040C1250 1074.2 1100 1096.7 1000 1100C900 1103.3 750 1085 700 1060C650 1035 683.3 961.7 700 950Z" fill="#262828" opacity="0.6" filter="url(#b14)"/>
<path d="M1450 706C1458.3 701.7 1487.5 718.3 1500 722C1512.5 725.7 1520.8 725.3 1525 728C1529.2 730.7 1532.5 735.7 1525 738C1517.5 740.3 1492.5 740.3 1480 742C1467.5 743.7 1455 754 1450 748C1445 742 1441.7 710.3 1450 706Z" fill="#8a8a8a" opacity="0.85" filter="url(#b6)"/>
<path d="M628.7 753C636.4 756.8 655.6 769 674.6 775.8C693.6 782.6 719.3 789.5 743 794C766.7 798.5 793.6 801.1 816.6 803C839.6 804.9 860.2 807.1 880.8 805.6C901.4 804.1 924.7 799 940 794C955.3 789 967.1 778.8 972.5 775.8" fill="none" stroke="#d0d4d4" stroke-width="7" opacity="0.55" filter="url(#b1)" transform="translate(0 -4)"/>
<path d="M628.7 753C636.4 756.8 655.6 769 674.6 775.8C693.6 782.6 719.3 789.5 743 794C766.7 798.5 793.6 801.1 816.6 803C839.6 804.9 860.2 807.1 880.8 805.6C901.4 804.1 924.7 799 940 794C955.3 789 959.5 783.5 972.5 775.8C985.5 768.1 1010.4 752.6 1018 748" fill="none" stroke="#eef0f0" stroke-width="2" opacity="0.9" filter="url(#b1)"/>
<g stroke="#eef0f0" stroke-width="0.9" opacity="0.28" fill="none">
<path d="M676 632.0Q694 720 690.0 798.0"/>
<path d="M690 638.2Q707 720 703.3 797.2"/>
<path d="M704 644.4Q720 720 716.6 796.4"/>
<path d="M718 635.6Q733 720 729.9 795.6"/>
<path d="M732 641.8Q746 720 743.2 794.8"/>
<path d="M746 648.0Q759 720 756.5 794.0"/>
<path d="M760 639.2Q772 720 769.8 793.2"/>
<path d="M774 645.4Q785 720 783.1 792.4"/>
<path d="M788 651.6Q798 720 796.4 791.6"/>
<path d="M802 642.8Q811 720 809.7 790.8"/>
<path d="M816 649.0Q824 720 823.0 790.0"/>
<path d="M830 655.2Q837 720 836.3 789.2"/>
<path d="M844 646.4Q850 720 849.6 788.4"/>
<path d="M858 652.6Q863 720 862.9 787.6"/>
<path d="M872 658.8Q876 720 876.2 786.8"/>
<path d="M886 650.0Q889 720 889.5 786.0"/>
<path d="M900 656.2Q902 720 902.8 785.2"/>
<path d="M914 662.4Q915 720 916.1 784.4"/>
<path d="M928 653.6Q928 720 929.4 783.6"/>
<path d="M942 659.8Q941 720 942.7 782.8"/>
<path d="M956 666.0Q954 720 956.0 782.0"/>
<path d="M970 657.2Q967 720 969.3 781.2"/>
<path d="M664 664Q820 656 970 638"/>
<path d="M664 681Q820 674 970 657"/>
<path d="M664 698Q820 692 970 676"/>
<path d="M664 715Q820 710 970 695"/>
<path d="M664 732Q820 728 970 714"/>
<path d="M664 749Q820 746 970 733"/>
<path d="M664 766Q820 764 970 752"/>
<path d="M664 783Q820 782 970 771"/>
</g>
<g stroke="#e6e6e6" stroke-width="0.7" opacity="0.13" fill="none">
<path d="M685.1 420Q416 720 685.1 1030"/>
<path d="M701.4 420Q444 720 701.4 1030"/>
<path d="M717.7 420Q472 720 717.7 1030"/>
<path d="M734 420Q500 720 734 1030"/>
<path d="M750.3 420Q528 720 750.3 1030"/>
<path d="M766.6 420Q556 720 766.6 1030"/>
<path d="M782.9 420Q584 720 782.9 1030"/>
<path d="M799.2 420Q612 720 799.2 1030"/>
<path d="M815.5 420Q640 720 815.5 1030"/>
<path d="M831.8 420Q668 720 831.8 1030"/>
<path d="M848.1 420Q696 720 848.1 1030"/>
<path d="M864.4 420Q724 720 864.4 1030"/>
<path d="M880.7 420Q752 720 880.7 1030"/>
<path d="M897 420Q780 720 897 1030"/>
<path d="M913.3 420Q808 720 913.3 1030"/>
<path d="M929.6 420Q836 720 929.6 1030"/>
<path d="M945.9 420Q864 720 945.9 1030"/>
<path d="M962.2 420Q892 720 962.2 1030"/>
<path d="M978.5 420Q920 720 978.5 1030"/>
<path d="M994.8 420Q948 720 994.8 1030"/>
<path d="M1011.1 420Q976 720 1011.1 1030"/>
<path d="M1027.4 420Q1004 720 1027.4 1030"/>
<path d="M1043.7 420Q1032 720 1043.7 1030"/>
<path d="M1060 420Q1060 720 1060 1030"/>
<path d="M1076.3 420Q1088 720 1076.3 1030"/>
<path d="M1092.6 420Q1116 720 1092.6 1030"/>
<path d="M1108.9 420Q1144 720 1108.9 1030"/>
<path d="M1125.2 420Q1172 720 1125.2 1030"/>
<path d="M1141.5 420Q1200 720 1141.5 1030"/>
<path d="M1157.8 420Q1228 720 1157.8 1030"/>
<path d="M1174.1 420Q1256 720 1174.1 1030"/>
<path d="M1190.4 420Q1284 720 1190.4 1030"/>
<path d="M1206.7 420Q1312 720 1206.7 1030"/>
<path d="M1223 420Q1340 720 1223 1030"/>
<path d="M1239.3 420Q1368 720 1239.3 1030"/>
<path d="M1255.6 420Q1396 720 1255.6 1030"/>
<path d="M1271.9 420Q1424 720 1271.9 1030"/>
<path d="M1288.2 420Q1452 720 1288.2 1030"/>
<path d="M1304.5 420Q1480 720 1304.5 1030"/>
<path d="M1320.8 420Q1508 720 1320.8 1030"/>
<path d="M1337.1 420Q1536 720 1337.1 1030"/>
<path d="M1353.4 420Q1564 720 1353.4 1030"/>
<path d="M1369.7 420Q1592 720 1369.7 1030"/>
<path d="M1386 420Q1620 720 1386 1030"/>
<path d="M1402.3 420Q1648 720 1402.3 1030"/>
<path d="M1418.6 420Q1676 720 1418.6 1030"/>
<path d="M600 379Q1060 515 1540 379"/>
<path d="M600 400Q1060 528 1540 400"/>
<path d="M600 421Q1060 541 1540 421"/>
<path d="M600 442Q1060 554 1540 442"/>
<path d="M600 463Q1060 567 1540 463"/>
<path d="M600 484Q1060 580 1540 484"/>
<path d="M600 505Q1060 593 1540 505"/>
<path d="M600 526Q1060 606 1540 526"/>
<path d="M600 547Q1060 619 1540 547"/>
<path d="M600 568Q1060 632 1540 568"/>
<path d="M600 589Q1060 645 1540 589"/>
<path d="M600 610Q1060 658 1540 610"/>
<path d="M600 631Q1060 671 1540 631"/>
<path d="M600 652Q1060 684 1540 652"/>
<path d="M600 673Q1060 697 1540 673"/>
<path d="M600 694Q1060 710 1540 694"/>
<path d="M600 715Q1060 723 1540 715"/>
<path d="M600 736Q1060 736 1540 736"/>
<path d="M600 757Q1060 749 1540 757"/>
<path d="M600 778Q1060 762 1540 778"/>
<path d="M600 799Q1060 775 1540 799"/>
<path d="M600 820Q1060 788 1540 820"/>
<path d="M600 841Q1060 801 1540 841"/>
<path d="M600 862Q1060 814 1540 862"/>
<path d="M600 883Q1060 827 1540 883"/>
<path d="M600 904Q1060 840 1540 904"/>
<path d="M600 925Q1060 853 1540 925"/>
<path d="M600 946Q1060 866 1540 946"/>
<path d="M600 967Q1060 879 1540 967"/>
<path d="M600 988Q1060 892 1540 988"/>
<path d="M600 1009Q1060 905 1540 1009"/>
<path d="M600 1030Q1060 918 1540 1030"/>
<path d="M600 1051Q1060 931 1540 1051"/>
<path d="M600 1072Q1060 944 1540 1072"/>
</g>
</g>
<path d="M1728 1187.5L2114 1118L2114 1190L1728 1190Z" fill="#e2e2e2"/>
<g filter="url(#b1)"><path d="M1975 1160Q2010 1146 2070 1146Q2040 1150 2028 1156Q2050 1158 2075 1158L2075 1162Z" fill="#9c9c9c"/>
<path d="M2030 1157Q2045 1150 2075 1149" fill="none" stroke="#555" stroke-width="1.5"/>
<path d="M2101 1140Q2108 1136 2114 1138L2114 1152Q2104 1150 2101 1140Z" fill="#111"/></g>
</svg>
</div>
<div class="" style="left:2px;top:63px;width:2111px;height:32.5px;background:rgba(48,48,48,0.70);border-radius:8px 8px 0 0"></div>
<div class="" style="left:2px;top:95.5px;width:1049px;height:29.5px;background:rgba(48,48,48,0.70);border-radius:0 0 6px 0"></div>
<div class="" style="left:1682.5px;top:95.5px;width:430.5px;height:29.5px;background:rgba(48,48,48,0.70);border-radius:0 0 0 6px"></div>
<div class="btn" style="left:11px;top:67px;width:40px;height:23.5px;"></div>
<svg class="abs" style="left:15.5px;top:69px;" width="19" height="19" viewBox="0 0 16 16"><path d="M1.5 8.5H12M1.5 12.5H13M4.5 6L3 15M9.5 9L10.5 15" fill="none" stroke="#e6e6e6" stroke-width="1.1" stroke-linecap="round" stroke-linejoin="round" /><circle cx="10" cy="4.5" r="3.4" fill="#e6e6e6"/><circle cx="9" cy="3.5" r="1" fill="#282828"/></svg>
<svg class="abs" style="left:37px;top:76px" width="10" height="7" viewBox="0 0 10 7"><path d="M1.2 1.4L5 5.2L8.8 1.4" fill="none" stroke="#e0e0e0" stroke-width="1.5" stroke-linecap="round" stroke-linejoin="round"/></svg>
<div class="btn" style="left:57.5px;top:67px;width:136.5px;height:23.5px;"></div>
<svg class="abs" style="left:63px;top:69px;" width="19" height="19" viewBox="0 0 16 16"><path d="M8.4 4.6L11.4 7.6L7 13.4H3Q1.9 13.3 2.4 12.3Z" fill="none" stroke="#e6e6e6" stroke-width="1.3" stroke-linecap="round" stroke-linejoin="round" /><path d="M8.9 3.3L11.3 0.9Q12.2 0.2 13.2 1L15 2.8Q15.8 3.8 15.1 4.8L12.7 7.2Z" fill="#e6e6e6" /></svg>
<div class="t" style="left:90.5px;top:68px;">Sculpt Mode</div>
<svg class="abs" style="left:180.5px;top:76px" width="10" height="7" viewBox="0 0 10 7"><path d="M1.2 1.4L5 5.2L8.8 1.4" fill="none" stroke="#e0e0e0" stroke-width="1.5" stroke-linecap="round" stroke-linejoin="round"/></svg>
<div class="t sh" style="left:209.5px;top:68px;color:#e2e2e2">View</div>
<div class="t sh" style="left:259px;top:68px;color:#e2e2e2">Sculpt</div>
<div class="t sh" style="left:320.5px;top:68px;color:#e2e2e2">Mask</div>
<div class="t sh" style="left:374px;top:68px;color:#e2e2e2">Face Sets</div>
<svg class="abs" style="left:452px;top:69.5px;" width="18" height="18" viewBox="0 0 16 16"><rect x="2.5" y="3.5" width="11" height="11" fill="none" stroke="#e6e6e6" stroke-width="1.2" stroke-dasharray="1.6 1.4"/><path d="M2 8V5.5L6 1.5H8.5V8Z" fill="#e6e6e6" /></svg>
<div class="" style="left:919px;top:67px;width:156.5px;height:23.5px;background:rgba(52,52,52,.55);border:1px solid rgba(70,70,70,.5);border-radius:5px"></div>
<svg class="abs" style="left:926.5px;top:69.5px;" width="18" height="18" viewBox="0 0 16 16"><rect x="1.5" y="1.5" width="3.4" height="3.4" fill="none" stroke="#787878" stroke-width="1.1"/><rect x="11" y="3.5" width="3.4" height="3.4" fill="none" stroke="#787878" stroke-width="1.1"/><rect x="11" y="11" width="3.4" height="3.4" fill="none" stroke="#787878" stroke-width="1.1"/><path d="M2 7H5.5V13.5Q3.8 15.5 2 13.5Z" fill="#787878" /><path d="M7 13.5V8L10 10.5Z" fill="#787878" /></svg>
<div class="t" style="left:952.5px;top:68px;color:#8c8c8c">Color Attributes</div>
<svg class="abs" style="left:1061px;top:76px" width="10" height="7" viewBox="0 0 10 7"><path d="M1.2 1.4L5 5.2L8.8 1.4" fill="none" stroke="#666" stroke-width="1.5" stroke-linecap="round" stroke-linejoin="round"/></svg>
<div class="btn" style="left:1082.5px;top:67px;width:38.5px;height:23.5px;"></div>
<svg class="abs" style="left:1087.5px;top:69.5px;" width="18" height="18" viewBox="0 0 16 16"><path d="M1.5 8V13M5.5 9.5V12M9.5 9.5V12M13.5 8V13M1.5 10.8H13.5" fill="none" stroke="#e6e6e6" stroke-width="1.2" stroke-linecap="round" stroke-linejoin="round" /><rect x="10.5" y="1.5" width="4" height="4" fill="#e6e6e6"/></svg>
<svg class="abs" style="left:1107.5px;top:76px" width="10" height="7" viewBox="0 0 10 7"><path d="M1.2 1.4L5 5.2L8.8 1.4" fill="none" stroke="#e0e0e0" stroke-width="1.5" stroke-linecap="round" stroke-linejoin="round"/></svg>
<div class="btn" style="left:1129px;top:67px;width:38.5px;height:23.5px;"></div>
<svg class="abs" style="left:1134px;top:70px;" width="17" height="17" viewBox="0 0 16 16"><rect x="1" y="1" width="14" height="14" rx="1.5" fill="none" stroke="#545454" stroke-width="1.2"/><circle cx="8" cy="8" r="4.6" fill="#e6e6e6"/></svg>
<svg class="abs" style="left:1153.5px;top:76px" width="10" height="7" viewBox="0 0 10 7"><path d="M1.2 1.4L5 5.2L8.8 1.4" fill="none" stroke="#e0e0e0" stroke-width="1.5" stroke-linecap="round" stroke-linejoin="round"/></svg>
<div class="btn" style="left:1754.5px;top:67px;width:39.5px;height:23.5px;"></div>
<svg class="abs" style="left:1758.5px;top:68.5px;" width="19" height="19" viewBox="0 0 16 16"><path d="M1.5 6L10 9.5L6.5 11L5.5 15Z" fill="#e6e6e6" /><path d="M5 4.5Q9.5 -0.5 15 4.5Q9.5 9.5 5.5 5" fill="none" stroke="#e6e6e6" stroke-width="1.2" stroke-linecap="round" stroke-linejoin="round" /><circle cx="10" cy="4.5" r="1.7" fill="#e6e6e6"/></svg>
<svg class="abs" style="left:1780.5px;top:76px" width="10" height="7" viewBox="0 0 10 7"><path d="M1.2 1.4L5 5.2L8.8 1.4" fill="none" stroke="#e0e0e0" stroke-width="1.5" stroke-linecap="round" stroke-linejoin="round"/></svg>
<div class="btn" style="left:1801px;top:67px;width:48px;height:23.5px;overflow:hidden"><div style="left:-1px;top:-1px;width:24px;height:23.5px;background:#4f4f4f"></div></div>
<svg class="abs" style="left:1803.5px;top:69.5px;" width="18" height="18" viewBox="0 0 16 16"><path d="M4 12Q6 5 13.5 2.5M9.5 2.2L13.8 2.3L12.5 6.3M2 6Q8 7 12 13" fill="none" stroke="#e6e6e6" stroke-width="1.2" stroke-linecap="round" stroke-linejoin="round" /><circle cx="3.2" cy="13" r="1.8" fill="none" stroke="#e6e6e6" stroke-width="1.1"/></svg>
<svg class="abs" style="left:1831.5px;top:76px" width="10" height="7" viewBox="0 0 10 7"><path d="M1.2 1.4L5 5.2L8.8 1.4" fill="none" stroke="#555" stroke-width="1.5" stroke-linecap="round" stroke-linejoin="round"/></svg>
<div class="btn" style="left:1857px;top:67px;width:88px;height:23.5px;overflow:hidden"><div style="left:-1px;top:-1px;width:24px;height:23.5px;background:#4772b3"></div><div style="left:47.5px;top:-1px;width:1px;height:24px;background:#3b3b3b"></div></div>
<svg class="abs" style="left:1859px;top:69px;" width="19" height="19" viewBox="0 0 16 16"><circle cx="9.5" cy="6.5" r="5.3" fill="#fff"/><circle cx="6.5" cy="9.5" r="5" fill="none" stroke="#fff" stroke-width="1.3"/><circle cx="6.5" cy="9.5" r="3.7" fill="#4772b3"/><path d="M9.5 1.2A5.3 5.3 0 0 1 14.8 6.5Q14.8 9 13 10.5Q11.5 9 11.4 8Q9 7 8.5 4.5Q7 4 6.2 2.4Q7.8 1.2 9.5 1.2Z" fill="#fff" /></svg>
<svg class="abs" style="left:1887.5px;top:76px" width="10" height="7" viewBox="0 0 10 7"><path d="M1.2 1.4L5 5.2L8.8 1.4" fill="none" stroke="#e0e0e0" stroke-width="1.5" stroke-linecap="round" stroke-linejoin="round"/></svg>
<svg class="abs" style="left:1908.5px;top:69.5px;" width="18" height="18" viewBox="0 0 16 16"><path d="M8.4 4.6L11.4 7.6L7 13.4H3Q1.9 13.3 2.4 12.3Z" fill="none" stroke="#e6e6e6" stroke-width="1.3" stroke-linecap="round" stroke-linejoin="round" /><path d="M8.9 3.3L11.3 0.9Q12.2 0.2 13.2 1L15 2.8Q15.8 3.8 15.1 4.8L12.7 7.2Z" fill="#e6e6e6" /></svg>
<svg class="abs" style="left:1932px;top:76px" width="10" height="7" viewBox="0 0 10 7"><path d="M1.2 1.4L5 5.2L8.8 1.4" fill="none" stroke="#e0e0e0" stroke-width="1.5" stroke-linecap="round" stroke-linejoin="round"/></svg>
<div class="" style="left:1952.5px;top:67px;width:23.5px;height:23.5px;background:#4f4f4f;border:1px solid #3b3b3b;border-radius:5px"></div>
<svg class="abs" style="left:1955.7px;top:70.2px;" width="17" height="17" viewBox="0 0 16 16"><rect x="1.5" y="4.5" width="10" height="10" rx="1" fill="none" stroke="#d8d8d8" stroke-width="1.2"/><path d="M4.5 4.5V2.5Q4.5 1.5 5.5 1.5H13.5Q14.5 1.5 14.5 2.5V10.5Q14.5 11.5 13.5 11.5H11.5" fill="none" stroke="#d8d8d8" stroke-width="1.2" stroke-linecap="round" stroke-linejoin="round" /><rect x="5" y="8" width="1.6" height="1.6" fill="#d8d8d8"/><rect x="8" y="11" width="1.6" height="1.6" fill="#d8d8d8"/></svg>
<div class="btn" style="left:1984px;top:67px;width:120px;height:23.5px;overflow:hidden;background:#282828"><div style="left:-1px;top:-1px;width:24.5px;height:23.5px;background:#4f4f4f"></div><div style="left:23.5px;top:-1px;width:24px;height:23.5px;background:#4772b3"></div><div style="left:47.5px;top:-1px;width:47.5px;height:23.5px;background:#4f4f4f"></div><div style="left:71px;top:-1px;width:1px;height:24px;background:#3d3d3d"></div></div>
<svg class="abs" style="left:1987px;top:69.7px;" width="18" height="18" viewBox="0 0 16 16"><circle cx="8" cy="8" r="6.3" fill="none" stroke="#d8d8d8" stroke-width="1.2"/><ellipse cx="8" cy="8" rx="2.8" ry="6.3" fill="none" stroke="#d8d8d8" stroke-width="1"/><path d="M1.7 8H14.3M3 4.5Q8 6.5 13 4.5M3 11.5Q8 9.5 13 11.5" fill="none" stroke="#d8d8d8" stroke-width="1" stroke-linecap="round" stroke-linejoin="round" /></svg>
<svg class="abs" style="left:2011px;top:69.7px;" width="18" height="18" viewBox="0 0 16 16"><circle cx="8" cy="8" r="6.8" fill="#e2e8f6"/></svg>
<svg class="abs" style="left:2034.5px;top:69.7px;" width="18" height="18" viewBox="0 0 16 16"><circle cx="8" cy="8" r="6.3" fill="none" stroke="#d8d8d8" stroke-width="1.2"/><path d="M8 1.7A6.3 6.3 0 0 0 8 14.3Z" fill="#d8d8d8" /><path d="M8 8L14.3 8A6.3 6.3 0 0 1 8 14.3Z" fill="#d8d8d8" opacity="0.55"/></svg>
<svg class="abs" style="left:2058px;top:69.7px;" width="18" height="18" viewBox="0 0 16 16"><circle cx="8" cy="8" r="6.3" fill="none" stroke="#d8d8d8" stroke-width="1.2"/><circle cx="7" cy="7" r="4" fill="#d8d8d8" opacity="0.45"/><path d="M4 12Q8 14 12 11" fill="none" stroke="#d8d8d8" stroke-width="1.4" stroke-linecap="round" stroke-linejoin="round" /><circle cx="6" cy="5.5" r="1.3" fill="#d8d8d8"/></svg>
<svg class="abs" style="left:2087px;top:76px" width="10" height="7" viewBox="0 0 10 7"><path d="M1.2 1.4L5 5.2L8.8 1.4" fill="none" stroke="#e0e0e0" stroke-width="1.5" stroke-linecap="round" stroke-linejoin="round"/></svg>
<div class="btn" style="left:10.5px;top:99px;width:174px;height:23px;"></div>
<svg class="abs" style="left:15px;top:100.5px;" width="20" height="20" viewBox="0 0 16 16"><rect x="0" y="0" width="16" height="16" rx="2" fill="#3a3a3a"/><circle cx="7.5" cy="9" r="5.5" fill="#d8d8d8"/><circle cx="7" cy="8.5" r="3" fill="#f2f2f2"/><path d="M9 2.5Q13.5 4 14 9" fill="none" stroke="#e8704a" stroke-width="1.5" stroke-linecap="round" stroke-linejoin="round" /></svg>
<div class="t" style="left:43px;top:100.3px;">Smooth*</div>
<svg class="abs" style="left:171px;top:108px" width="10" height="7" viewBox="0 0 10 7"><path d="M1.2 1.4L5 5.2L8.8 1.4" fill="none" stroke="#e0e0e0" stroke-width="1.5" stroke-linecap="round" stroke-linejoin="round"/></svg>
<div class="fld" style="left:192px;top:99px;width:183.5px;height:23px;"><div class="bl" style="left:-1px;top:-1px;width:16px;height:23px"></div><div style="left:157.5px;top:-1px;width:1px;height:23px;background:#3d3d3d"></div></div>
<div class="t" style="left:211px;top:100.3px;">Radius</div>
<div class="t" style="left:295.5px;top:100.3px;">60 px</div>
<svg class="abs" style="left:354px;top:101.5px;" width="18" height="18" viewBox="0 0 16 16"><path d="M2.5 11A4.2 4.2 0 0 0 9 14.5M4.5 8A6.5 6.5 0 0 0 3 14.8" fill="none" stroke="#d0d0d0" stroke-width="1.1" stroke-linecap="round" stroke-linejoin="round" /><circle cx="6.5" cy="11" r="1.4" fill="none" stroke="#d0d0d0" stroke-width="1"/><path d="M7 9.5L8.2 6.8L13 2Q14 1.4 14.8 2.2Q15.4 3 14.8 3.8L10 8.6Z" fill="#d0d0d0" /></svg>
<div class="fld" style="left:383px;top:99px;width:196.5px;height:23px;"><div class="bl" style="left:-1px;top:-1px;width:73px;height:23px"></div><div class="bl" style="left:171px;top:-1px;width:26px;height:23px"></div></div>
<div class="t" style="left:402.5px;top:100.3px;">Strength</div>
<div class="t" style="left:497.5px;top:100.3px;">0.428</div>
<svg class="abs" style="left:558px;top:101.5px;" width="18" height="18" viewBox="0 0 16 16"><path d="M2.5 11A4.2 4.2 0 0 0 9 14.5M4.5 8A6.5 6.5 0 0 0 3 14.8" fill="none" stroke="#fff" stroke-width="1.1" stroke-linecap="round" stroke-linejoin="round" /><circle cx="6.5" cy="11" r="1.4" fill="none" stroke="#fff" stroke-width="1"/><path d="M7 9.5L8.2 6.8L13 2Q14 1.4 14.8 2.2Q15.4 3 14.8 3.8L10 8.6Z" fill="#fff" /></svg>
<div class="fld" style="left:587px;top:99px;width:47.5px;height:23px;"><div class="bl" style="left:-1px;top:-1px;width:24px;height:23px"></div></div>
<svg class="abs" style="left:587px;top:99px" width="48" height="23" viewBox="0 0 48 23"><path d="M5.5 11.5H17.5M11.5 5.5V17.5" stroke="#fff" stroke-width="1.5"/><path d="M30 11.5H41" stroke="#9a9a9a" stroke-width="1.5"/></svg>
<div class="btn" style="left:641px;top:99px;width:68.5px;height:23px;"></div>
<div class="t" style="left:651px;top:100.3px;">Brush</div>
<svg class="abs" style="left:696px;top:108px" width="10" height="7" viewBox="0 0 10 7"><path d="M1.2 1.4L5 5.2L8.8 1.4" fill="none" stroke="#e0e0e0" stroke-width="1.5" stroke-linecap="round" stroke-linejoin="round"/></svg>
<div class="btn" style="left:716px;top:99px;width:82px;height:23px;"></div>
<div class="t" style="left:727px;top:100.3px;">Texture</div>
<svg class="abs" style="left:784.5px;top:108px" width="10" height="7" viewBox="0 0 10 7"><path d="M1.2 1.4L5 5.2L8.8 1.4" fill="none" stroke="#e0e0e0" stroke-width="1.5" stroke-linecap="round" stroke-linejoin="round"/></svg>
<div class="btn" style="left:805.5px;top:99px;width:74px;height:23px;"></div>
<div class="t" style="left:815.5px;top:100.3px;">Stroke</div>
<svg class="abs" style="left:866px;top:108px" width="10" height="7" viewBox="0 0 10 7"><path d="M1.2 1.4L5 5.2L8.8 1.4" fill="none" stroke="#e0e0e0" stroke-width="1.5" stroke-linecap="round" stroke-linejoin="round"/></svg>
<div class="btn" style="left:886px;top:99px;width:73px;height:23px;"></div>
<div class="t" style="left:896px;top:100.3px;">Falloff</div>
<svg class="abs" style="left:945.5px;top:108px" width="10" height="7" viewBox="0 0 10 7"><path d="M1.2 1.4L5 5.2L8.8 1.4" fill="none" stroke="#e0e0e0" stroke-width="1.5" stroke-linecap="round" stroke-linejoin="round"/></svg>
<div class="btn" style="left:966px;top:99px;width:74.5px;height:23px;"></div>
<div class="t" style="left:976px;top:100.3px;">Cursor</div>
<svg class="abs" style="left:1027px;top:108px" width="10" height="7" viewBox="0 0 10 7"><path d="M1.2 1.4L5 5.2L8.8 1.4" fill="none" stroke="#e0e0e0" stroke-width="1.5" stroke-linecap="round" stroke-linejoin="round"/></svg>
<svg class="abs" style="left:1694.5px;top:100.5px;" width="20" height="20" viewBox="0 0 16 16"><path d="M8 1V3M8 5V7M8 9V11M8 13V15" fill="none" stroke="#d0d0d0" stroke-width="1.1" stroke-linecap="round" stroke-linejoin="round" /><path d="M6 3Q1.5 1 1.8 5Q2 7 4.2 8Q2.5 9 2.5 11.5Q3 14.5 6 12.5M10 3Q14.5 1 14.2 5Q14 7 11.8 8Q13.5 9 13.5 11.5Q13 14.5 10 12.5" fill="none" stroke="#d0d0d0" stroke-width="1.1" stroke-linecap="round" stroke-linejoin="round" /></svg>
<div class="btn" style="left:1719px;top:99px;width:89px;height:23px;overflow:hidden"><div class="bl" style="left:-1px;top:-1px;width:20.5px;height:23px"></div><div style="left:19.5px;top:-1px;width:44px;height:23px;background:#545454"></div><div style="left:41px;top:-1px;width:1px;height:23px;background:#3d3d3d"></div></div>
<div class="t" style="left:1723.5px;top:100.3px;color:#fff">X</div>
<div class="t" style="left:1745.5px;top:100.3px;">Y</div>
<div class="t" style="left:1767.5px;top:100.3px;">Z</div>
<svg class="abs" style="left:1790.5px;top:108px" width="10" height="7" viewBox="0 0 10 7"><path d="M1.2 1.4L5 5.2L8.8 1.4" fill="none" stroke="#e0e0e0" stroke-width="1.5" stroke-linecap="round" stroke-linejoin="round"/></svg>
<div class="btn" style="left:1816px;top:99px;width:110px;height:23px;overflow:hidden"><div style="left:-1px;top:-1px;width:24px;height:23px;background:#545454"></div></div>
<div class="" style="left:1821.5px;top:104.5px;width:12px;height:12px;border:1.4px solid #9a9a9a;border-radius:2.5px;background:#3d3d3d"></div>
<div class="t" style="left:1849.5px;top:100.3px;">Dyntopo</div>
<svg class="abs" style="left:1913.5px;top:108px" width="10" height="7" viewBox="0 0 10 7"><path d="M1.2 1.4L5 5.2L8.8 1.4" fill="none" stroke="#e0e0e0" stroke-width="1.5" stroke-linecap="round" stroke-linejoin="round"/></svg>
<div class="btn" style="left:1934px;top:99px;width:82px;height:23px;"></div>
<div class="t" style="left:1943px;top:100.3px;">Remesh</div>
<svg class="abs" style="left:2002.5px;top:108px" width="10" height="7" viewBox="0 0 10 7"><path d="M1.2 1.4L5 5.2L8.8 1.4" fill="none" stroke="#e0e0e0" stroke-width="1.5" stroke-linecap="round" stroke-linejoin="round"/></svg>
<div class="btn" style="left:2024px;top:99px;width:80px;height:23px;"></div>
<div class="t" style="left:2033px;top:100.3px;">Options</div>
<svg class="abs" style="left:2090.5px;top:108px" width="10" height="7" viewBox="0 0 10 7"><path d="M1.2 1.4L5 5.2L8.8 1.4" fill="none" stroke="#e0e0e0" stroke-width="1.5" stroke-linecap="round" stroke-linejoin="round"/></svg>
<svg class="abs" style="left:2103px;top:146px" width="10" height="14" viewBox="0 0 10 14"><path d="M7 2.5L3 7L7 11.5" fill="none" stroke="#b0b0b0" stroke-width="1.3"/></svg>
<div class="ov" style="left:193px;top:136px;">User Perspective</div>
<div class="ov" style="left:193px;top:158px;">(1) Cube</div>
<div class="ov" style="left:193px;top:194px;">Vertices</div>
<div class="ov" style="left:266px;top:194px;">6,874</div>
<div class="ov" style="left:193px;top:216px;">Faces</div>
<div class="ov" style="left:266px;top:216px;">6,872</div>
<div class="tool" style="left:10px;top:136.4px;width:163px;height:171.2px;"><div class="ti" style="top:0px;background:#4772b3;border-radius:6px 6px 0 0;border-top:none;"><div class="t">Brush</div><svg class="abs" style="left:7.5px;top:4.5px;" width="34" height="34" viewBox="0 0 32 32"><path d="M4.5 24Q10 27 15 24.5Q20 22 25 23.5Q20 27 14 28Q8 28.5 4.5 24Z" fill="#8f8a80" /><path d="M3.5 22.5Q4.5 17.5 9 16.5Q12.5 16.5 13 19.5Q12.5 23.5 8 24Q5.5 24 3.5 22.5Z" fill="#e0e0e0" /><path d="M12 16.8L26.2 3.8Q28.4 2.6 28.6 4.6L14.6 19.4Z" fill="#e0e0e0" /></svg></div><div class="ti" style="top:42.8px;"><div class="t">Paint</div><svg class="abs" style="left:7.5px;top:4.5px;" width="34" height="34" viewBox="0 0 32 32"><path d="M4.5 24Q10 27 15 24.5Q20 22 25 23.5Q20 27 14 28Q8 28.5 4.5 24Z" fill="#7fd8a6" /><path d="M3.5 22.5Q4.5 17.5 9 16.5Q12.5 16.5 13 19.5Q12.5 23.5 8 24Q5.5 24 3.5 22.5Z" fill="#e0e0e0" /><path d="M12 16.8L26.2 3.8Q28.4 2.6 28.6 4.6L14.6 19.4Z" fill="#e0e0e0" /></svg></div><div class="ti" style="top:85.6px;"><div class="t">Mask</div><svg class="abs" style="left:7.5px;top:4.5px;" width="34" height="34" viewBox="0 0 32 32"><path d="M16 3A13 13 0 0 0 12 28.4Q9 22 10.5 15Q11.5 9 11 4Z" fill="#9a9a9a" /><path d="M16 3A13 13 0 0 1 28.6 19L17 17Q16 9 16 3Z" fill="#9a9a9a" /><path d="M11 4Q12 9 10.8 15Q9.5 22 12 28.4A13 13 0 0 0 28.6 19L17 17Q16 9 16 3Q13 3 11 4Z" fill="#ffffff" /><path d="M13 17.5L25.5 3.2Q27.2 2.4 27.2 4.2L16 19.2Z" fill="#f4f4f4" stroke="#262626" stroke-width="0.8"/><path d="M10.5 21.5Q10 17.5 13.2 16.4Q16 16.8 16.2 19.4Q14 22 10.5 21.5Z" fill="#f4f4f4" stroke="#262626" stroke-width="0.8"/></svg></div><div class="ti" style="top:128.4px;"><div class="t">Draw Face Sets</div><svg class="abs" style="left:7.5px;top:4.5px;" width="34" height="34" viewBox="0 0 32 32"><path d="M16 3A13 13 0 0 0 12 28.4Q9 22 10.5 15Q11.5 9 11 4Z" fill="#80d8a8" /><path d="M16 3A13 13 0 0 1 28.6 19L17 17Q16 9 16 3Z" fill="#d87a6c" /><path d="M11 4Q12 9 10.8 15Q9.5 22 12 28.4A13 13 0 0 0 28.6 19L17 17Q16 9 16 3Q13 3 11 4Z" fill="#e6d48a" /><path d="M13 17.5L25.5 3.2Q27.2 2.4 27.2 4.2L16 19.2Z" fill="#f4f4f4" stroke="#262626" stroke-width="0.8"/><path d="M10.5 21.5Q10 17.5 13.2 16.4Q16 16.8 16.2 19.4Q14 22 10.5 21.5Z" fill="#f4f4f4" stroke="#262626" stroke-width="0.8"/></svg></div></div>
<div class="tool" style="left:10px;top:314px;width:163px;height:214px;"><div class="ti" style="top:0px;"><div class="t">Box Mask</div><svg class="abs" style="left:152px;top:32px" width="8" height="8" viewBox="0 0 8 8"><path d="M7 1V7H1Z" fill="#8a8a8a"/></svg><svg class="abs" style="left:7.5px;top:4.5px;" width="34" height="34" viewBox="0 0 32 32"><circle cx="13" cy="19" r="11" fill="#8a8a8a"/><rect x="7.5" y="3.5" width="20" height="20" fill="#262626" stroke="#e6e6e6" stroke-width="1.3"/><path d="M8.2 22.8V9Q8.2 4.2 14 4.2Q26.8 5 26.8 22.8Z" fill="#ffffff" /></svg></div><div class="ti" style="top:42.8px;"><div class="t">Box Hide</div><svg class="abs" style="left:152px;top:32px" width="8" height="8" viewBox="0 0 8 8"><path d="M7 1V7H1Z" fill="#8a8a8a"/></svg><svg class="abs" style="left:7.5px;top:4.5px;" width="34" height="34" viewBox="0 0 32 32"><circle cx="13" cy="19" r="11" fill="#8a8a8a"/><rect x="7.5" y="3.5" width="20" height="20" fill="#262626" stroke="#e6e6e6" stroke-width="1.3"/></svg></div><div class="ti" style="top:85.6px;"><div class="t">Box Face Set</div><svg class="abs" style="left:152px;top:32px" width="8" height="8" viewBox="0 0 8 8"><path d="M7 1V7H1Z" fill="#8a8a8a"/></svg><svg class="abs" style="left:7.5px;top:4.5px;" width="34" height="34" viewBox="0 0 32 32"><circle cx="13" cy="19" r="11" fill="#80d8a8"/><path d="M2 19A11 11 0 0 0 24 19Z" fill="#d87a6c" /><rect x="7.5" y="3.5" width="20" height="20" fill="#262626" stroke="#e6e6e6" stroke-width="1.3"/><path d="M8.2 22.8V9Q8.2 4.2 14 4.2Q26.8 5 26.8 22.8Z" fill="#e6d48a" /></svg></div><div class="ti" style="top:128.4px;"><div class="t">Box Trim</div><svg class="abs" style="left:152px;top:32px" width="8" height="8" viewBox="0 0 8 8"><path d="M7 1V7H1Z" fill="#8a8a8a"/></svg><svg class="abs" style="left:7.5px;top:4.5px;" width="34" height="34" viewBox="0 0 32 32"><circle cx="13" cy="19" r="11" fill="#8a8a8a"/><rect x="7.5" y="3.5" width="19" height="19" fill="#262626" stroke="#d87a6c" stroke-width="1.3"/><path d="M20 9L17 21" fill="none" stroke="#e6e6e6" stroke-width="1.6" stroke-linecap="round" stroke-linejoin="round" /><circle cx="22" cy="6" r="2.6" fill="#fff"/><circle cx="27" cy="10" r="2.6" fill="#fff"/><path d="M16 12L26 8" fill="none" stroke="#e6e6e6" stroke-width="1.4" stroke-linecap="round" stroke-linejoin="round" /></svg></div><div class="ti" style="top:171.2px;"><div class="t">Line Project</div><svg class="abs" style="left:7.5px;top:4.5px;" width="34" height="34" viewBox="0 0 32 32"><path d="M3 9A12 12 0 0 0 24 27Z" fill="#8a8a8a"/><path d="M2.5 5L27 29" fill="none" stroke="#e6e6e6" stroke-width="1.4" stroke-linecap="round" stroke-linejoin="round" /><circle cx="2.5" cy="5" r="1.6" fill="#fff"/><circle cx="27" cy="29" r="1.6" fill="#fff"/><path d="M17.5 15.5L26.5 14L23.8 11.3L28.8 6.3L26.6 4.1L21.6 9.1L19 6.5Z" fill="#fff" /></svg></div></div>
<div class="tool" style="left:10px;top:535.3px;width:163px;height:128.4px;"><div class="ti" style="top:0px;"><div class="t">Mesh Filter</div><svg class="abs" style="left:7.5px;top:4.5px;" width="34" height="34" viewBox="0 0 32 32"><circle cx="13" cy="19" r="11" fill="#8a8a8a"/><rect x="7.5" y="3.5" width="20" height="20" fill="#262626" stroke="#e6e6e6" stroke-width="1.3"/><path d="M8.2 22.8V10L12 8L11 4.2H18L19 7L26.8 6V22.8Z" fill="#a6c8e8" /></svg></div><div class="ti" style="top:42.8px;"><div class="t">Cloth Filter</div><svg class="abs" style="left:7.5px;top:4.5px;" width="34" height="34" viewBox="0 0 32 32"><circle cx="13" cy="19" r="11" fill="#8a8a8a"/><rect x="7.5" y="3.5" width="20" height="20" fill="#262626" stroke="#e6e6e6" stroke-width="1.3"/><path d="M8.2 22.8Q9 12 12 5Q16 4 20 5.5Q24 12 26.8 20L25 22.8Q22 21 19 22.8Q15 21 12 22.8Z" fill="#c8a8e0" /><path d="M14 6Q13 14 12 22M18 6Q20 14 22 21" fill="none" stroke="#9a78b8" stroke-width="0.9" stroke-linecap="round" stroke-linejoin="round" /></svg></div><div class="ti" style="top:85.6px;"><div class="t">Color Filter</div><svg class="abs" style="left:7.5px;top:4.5px;" width="34" height="34" viewBox="0 0 32 32"><circle cx="13" cy="19" r="11" fill="#8a8a8a"/><rect x="7.5" y="3.5" width="20" height="20" fill="#262626" stroke="#e6e6e6" stroke-width="1.3"/><path d="M9 17Q9 6 17.5 5.5Q26 6 26.8 17Q22 18 19 17.5V24Q17.5 26 16 24V17.5Q12 18 9 17Z" fill="#80d8a8" /></svg></div></div>
<div class="tool" style="left:10px;top:670.3px;width:163px;height:85.6px;"><div class="ti" style="top:0px;"><div class="t">Edit Face Set</div><svg class="abs" style="left:7.5px;top:4.5px;" width="34" height="34" viewBox="0 0 32 32"><circle cx="13" cy="19" r="11" fill="#80d8a8"/><path d="M2 19A11 11 0 0 0 24 19Z" fill="#d87a6c" /><rect x="7.5" y="3.5" width="20" height="20" fill="#262626" stroke="#e6e6e6" stroke-width="1.3"/><path d="M8.2 4.2H26.8V22.8H8.2Z" fill="#e6d48a" /><path d="M11 20L12 16L22 6Q24 5 25 7L15 17Z" fill="#fff" stroke="#262626" stroke-width="0.9"/></svg></div><div class="ti" style="top:42.8px;"><div class="t">Mask by Color</div><svg class="abs" style="left:7.5px;top:4.5px;" width="34" height="34" viewBox="0 0 32 32"><circle cx="13" cy="17" r="12" fill="#8a8a8a"/><path d="M13 5A12 12 0 0 1 25 17Q24 24 19 25Q14 28 10 26Q6 22 7 16Q8 8 13 5Z" fill="#80d8a8"/><path d="M15 14L28 28" fill="none" stroke="#fff" stroke-width="2.6" stroke-linecap="round" stroke-linejoin="round" /><path d="M8 14H20M14 8V20M9.8 9.8L18.2 18.2M18.2 9.8L9.8 18.2" fill="none" stroke="#fff" stroke-width="1.5" stroke-linecap="round" stroke-linejoin="round" /></svg></div></div>
<div class="tool" style="left:10px;top:762px;width:163px;height:171.2px;"><div class="ti" style="top:0px;"><div class="t">Move</div><svg class="abs" style="left:7.5px;top:4.5px;" width="34" height="34" viewBox="0 0 32 32"><path d="M16 6V12M16 20V26M6 16H12M20 16H26" fill="none" stroke="#e6e6e6" stroke-width="1.5" stroke-linecap="round" stroke-linejoin="round" stroke-dasharray="3 2.2"/><path d="M16 1L20 6.5H12Z" fill="#e6e6e6" /><path d="M16 31L20 25.5H12Z" fill="#e6e6e6" /><path d="M1 16L6.5 12V20Z" fill="#e6e6e6" /><path d="M31 16L25.5 12V20Z" fill="#e6e6e6" /></svg></div><div class="ti" style="top:42.8px;"><div class="t">Rotate</div><svg class="abs" style="left:7.5px;top:4.5px;" width="34" height="34" viewBox="0 0 32 32"><path d="M5.5 12A11.5 11.5 0 0 1 26.5 12" fill="none" stroke="#e6e6e6" stroke-width="1.5" stroke-linecap="round" stroke-linejoin="round" /><path d="M26.5 20A11.5 11.5 0 0 1 5.5 20" fill="none" stroke="#e6e6e6" stroke-width="1.5" stroke-linecap="round" stroke-linejoin="round" /><path d="M16 10.5L21.5 16L16 21.5L10.5 16Z" fill="#e6e6e6" /><path d="M2 17.5L5.5 11L9 17.5Z" fill="#e6e6e6" /><path d="M30 14.5L26.5 21L23 14.5Z" fill="#e6e6e6" /></svg></div><div class="ti" style="top:85.6px;"><div class="t">Scale</div><svg class="abs" style="left:7.5px;top:4.5px;" width="34" height="34" viewBox="0 0 32 32"><path d="M4 15H17V28H4Z" fill="#e6e6e6" /><path d="M4 11V4H11M21 4H28V11M28 21V28H21" fill="none" stroke="#e6e6e6" stroke-width="1.4" stroke-linecap="round" stroke-linejoin="round" /><path d="M18 14L25 7" fill="none" stroke="#e6e6e6" stroke-width="1.5" stroke-linecap="round" stroke-linejoin="round" /><path d="M26.5 5.5L26 11.5L20.5 6Z" fill="#e6e6e6" /></svg></div><div class="ti" style="top:128.4px;"><div class="t">Transform</div><svg class="abs" style="left:7.5px;top:4.5px;" width="34" height="34" viewBox="0 0 32 32"><circle cx="16" cy="16" r="12.5" fill="none" stroke="#e6e6e6" stroke-width="1.4" stroke-dasharray="12 7.63" stroke-dashoffset="6"/><path d="M10.5 10.5H21.5V21.5H10.5Z" fill="#e6e6e6" /><path d="M16 1.5L19.5 6.5H12.5Z" fill="#e6e6e6" /><path d="M16 30.5L19.5 25.5H12.5Z" fill="#e6e6e6" /><path d="M1.5 16L6.5 12.5V19.5Z" fill="#e6e6e6" /><path d="M30.5 16L25.5 12.5V19.5Z" fill="#e6e6e6" /></svg></div></div>
<div class="tool" style="left:10px;top:940.3px;width:163px;height:42.8px;"><div class="ti" style="top:0px;"><div class="t">Annotate</div><svg class="abs" style="left:152px;top:32px" width="8" height="8" viewBox="0 0 8 8"><path d="M7 1V7H1Z" fill="#8a8a8a"/></svg><svg class="abs" style="left:7.5px;top:4.5px;" width="34" height="34" viewBox="0 0 32 32"><path d="M3 26Q7 30 11 27Q15 22 19 23Q23 24 26 27" fill="none" stroke="#7fd8a6" stroke-width="1.7" stroke-linecap="round" stroke-linejoin="round" /><path d="M4.5 21L7 15.5L20.5 2.5Q22.5 1.5 24.5 3.5Q26 5.5 25 7L11 20.5Z" fill="#e6e6e6" /><path d="M8 14.5L12 18.5" fill="none" stroke="#262626" stroke-width="1.3" stroke-linecap="round" stroke-linejoin="round" /></svg></div></div>
<div class="" style="left:2px;top:1187px;width:2111px;height:223.5px;background:#303030;border-radius:0 0 8px 8px"></div>
<div class="" style="left:2px;top:1159px;width:433px;height:28.5px;background:#1d1d1d;border-radius:0 7px 0 0"></div>
<svg class="abs" style="left:435px;top:1179px" width="8" height="8" viewBox="0 0 8 8"><path d="M0 0Q0 8 8 8H0Z" fill="#1d1d1d"/></svg>
<svg class="abs" style="left:22px;top:1167px" width="17" height="15" viewBox="0 0 17 15"><path d="M0.5 2H16M0.5 7.5H16M0.5 13H16" stroke="#a8a8a8" stroke-width="1.5"/></svg>
<div class="t dim" style="left:75.8px;top:1165px;">All</div>
<div class="" style="left:120px;top:1165.7px;width:62.6px;height:21.5px;background:#303030;border-radius:5px 5px 0 0"></div>
<div class="t" style="left:126.3px;top:1165px;color:#fff">General</div>
<div class="t dim" style="left:197.5px;top:1165px;">Paint</div>
<div class="t dim" style="left:250px;top:1165px;">Simulation</div>
<div class="t dim" style="left:338px;top:1165px;">Orb Brushes</div>
<div class="" style="left:1850px;top:1159px;width:263px;height:28.5px;background:#1d1d1d;border-radius:7px 0 0 0"></div>
<svg class="abs" style="left:1842px;top:1179px" width="8" height="8" viewBox="0 0 8 8"><path d="M8 0Q8 8 0 8H8Z" fill="#1d1d1d"/></svg>
<div class="btn" style="left:1860px;top:1161.6px;width:40px;height:23.4px;"></div>
<svg class="abs" style="left:1864.5px;top:1164.3px;" width="18" height="18" viewBox="0 0 16 16"><rect x="1.7" y="1.4" width="4.6" height="5.2" rx="0.8" fill="none" stroke="#d8d8d8" stroke-width="1.3"/><rect x="1.7" y="9.4" width="4.6" height="5.2" rx="0.8" fill="none" stroke="#d8d8d8" stroke-width="1.3"/><rect x="9.7" y="1.4" width="4.6" height="5.2" rx="0.8" fill="none" stroke="#d8d8d8" stroke-width="1.3"/><rect x="9.7" y="9.4" width="4.6" height="5.2" rx="0.8" fill="none" stroke="#d8d8d8" stroke-width="1.3"/></svg>
<svg class="abs" style="left:1886.5px;top:1171px" width="10" height="7" viewBox="0 0 10 7"><path d="M1.2 1.4L5 5.2L8.8 1.4" fill="none" stroke="#e0e0e0" stroke-width="1.5" stroke-linecap="round" stroke-linejoin="round"/></svg>
<div class="" style="left:1906.8px;top:1161.6px;width:199.6px;height:23.4px;background:#1d1d1d;border:1px solid #3b3b3b;border-radius:5px"></div>
<svg class="abs" style="left:1912.5px;top:1164.8px;" width="17" height="17" viewBox="0 0 16 16"><circle cx="9.8" cy="6.2" r="4.6" fill="none" stroke="#d0d0d0" stroke-width="1.3"/><path d="M6.5 9.5L1.5 14.5" fill="none" stroke="#d0d0d0" stroke-width="1.4" stroke-linecap="round" stroke-linejoin="round" /></svg>
<div class="t" style="left:1940px;top:1163px;color:#7a7a7a">Search</div>
<div class="" style="left:2106.5px;top:1190px;width:4px;height:206px;background:#3c3c3c;border-radius:2px"></div>
<div class="" style="left:1200.8px;top:1189px;width:80px;height:111px;background:#4772b3;border-radius:4px"></div>
<svg class="abs" style="left:4.5px;top:1201px" width="72" height="67" viewBox="0 0 72 67"><path d="M0 67V17Q2 7 14 3.5Q36 -2 58 3.5Q70 7 72 17V67Z" fill="url(#bd)"/><g filter="url(#bb1)"><circle cx="26" cy="19" r="18" fill="url(#bw)"/><circle cx="51" cy="37" r="17" fill="url(#bw)"/><circle cx="28" cy="48" r="14" fill="url(#bw)"/></g></svg>
<div class="bt" style="left:0px;top:1276.5px;">Blob</div>
<svg class="abs" style="left:84.5px;top:1201px" width="72" height="67" viewBox="0 0 72 67"><path d="M0 67V17Q2 7 14 3.5Q36 -2 58 3.5Q70 7 72 17V67Z" fill="url(#bd)"/><g filter="url(#bb1)"><path d="M34 3Q52 0 58 20Q42 34 38 58Q26 62 16 46Q4 18 34 3Z" fill="url(#bw)" /><path d="M40 10Q28 28 34 52M50 14Q38 26 40 40" fill="none" stroke="#9a9a9a" stroke-width="2" stroke-linecap="round" stroke-linejoin="round" filter="url(#bb1)"/></g></svg>
<div class="bt" style="left:80px;top:1276.5px;">Clay</div>
<svg class="abs" style="left:164.5px;top:1201px" width="72" height="67" viewBox="0 0 72 67"><path d="M0 67V17Q2 7 14 3.5Q36 -2 58 3.5Q70 7 72 17V67Z" fill="url(#bd)"/><g filter="url(#bb1)"><path d="M34 3Q52 0 58 22Q46 36 46 56Q30 62 18 50Q4 20 34 3Z" fill="url(#bw)" /><path d="M36 8Q24 30 32 56M44 8Q34 30 40 54M52 14Q42 32 46 48" fill="none" stroke="#8a8a8a" stroke-width="1.6" stroke-linecap="round" stroke-linejoin="round" /></g></svg>
<div class="bt" style="left:160px;top:1276.5px;">Clay Strips</div>
<svg class="abs" style="left:244.5px;top:1201px" width="72" height="67" viewBox="0 0 72 67"><path d="M0 67V17Q2 7 14 3.5Q36 -2 58 3.5Q70 7 72 17V67Z" fill="url(#bd)"/><g filter="url(#bb1)"><path d="M8 12Q14 2 30 12Q50 24 64 32Q68 40 60 48Q40 52 24 40Q4 26 8 12Z" fill="url(#bw)" /><path d="M14 14Q22 12 36 24Q50 32 58 36Q40 40 28 32Q14 24 14 14Z" fill="#b4b4b4" filter="url(#bb2)"/></g></svg>
<div class="bt" style="left:240px;top:1276.5px;">Clay Thu...</div>
<svg class="abs" style="left:324.5px;top:1201px" width="72" height="67" viewBox="0 0 72 67"><path d="M0 67V17Q2 7 14 3.5Q36 -2 58 3.5Q70 7 72 17V67Z" fill="url(#bd)"/><g clip-path="url(#bdc)"><g filter="url(#bb1)"><path d="M26 6Q14 24 28 42Q34 54 22 70" fill="none" stroke="#e4e4e4" stroke-width="13" stroke-linecap="round" stroke-linejoin="round" /><path d="M58 14Q34 22 44 42Q48 58 30 72" fill="none" stroke="#dcdcdc" stroke-width="13" stroke-linecap="round" stroke-linejoin="round" /><path d="M36 4Q28 24 38 40Q42 56 28 70" fill="none" stroke="#6a6a6a" stroke-width="2.5" stroke-linecap="round" stroke-linejoin="round" filter="url(#bb1)"/></g></g></svg>
<div class="bt" style="left:320px;top:1276.5px;">Crease P...</div>
<svg class="abs" style="left:404.5px;top:1201px" width="72" height="67" viewBox="0 0 72 67"><path d="M0 67V17Q2 7 14 3.5Q36 -2 58 3.5Q70 7 72 17V67Z" fill="url(#bd)"/><g clip-path="url(#bdc)"><g filter="url(#bb1)"><path d="M28 6Q16 22 30 40Q36 54 26 70" fill="none" stroke="#e4e4e4" stroke-width="8" stroke-linecap="round" stroke-linejoin="round" /><path d="M54 12Q34 18 44 40Q50 56 36 70" fill="none" stroke="#dcdcdc" stroke-width="8" stroke-linecap="round" stroke-linejoin="round" /></g></g></svg>
<div class="bt" style="left:400px;top:1276.5px;">Crease S...</div>
<svg class="abs" style="left:484.5px;top:1201px" width="72" height="67" viewBox="0 0 72 67"><path d="M0 67V17Q2 7 14 3.5Q36 -2 58 3.5Q70 7 72 17V67Z" fill="url(#bd)"/><g filter="url(#bb1)"><path d="M28 16Q8 20 14 32Q30 38 48 28Q62 30 54 46Q44 60 32 52" fill="none" stroke="#e2e2e2" stroke-width="11" stroke-linecap="round" stroke-linejoin="round" /></g></svg>
<div class="bt" style="left:480px;top:1276.5px;">Draw</div>
<svg class="abs" style="left:564.5px;top:1201px" width="72" height="67" viewBox="0 0 72 67"><path d="M0 67V17Q2 7 14 3.5Q36 -2 58 3.5Q70 7 72 17V67Z" fill="url(#bd)"/><g filter="url(#bb1)"><path d="M28 16Q8 20 14 32Q30 38 48 28Q62 30 54 46Q44 60 32 52" fill="none" stroke="#d8d8d8" stroke-width="9" stroke-linecap="round" stroke-linejoin="round" /><path d="M28 16Q8 20 14 32Q30 38 48 28Q62 30 54 46Q44 60 32 52" fill="none" stroke="#a0a0a0" stroke-width="2" stroke-linecap="round" stroke-linejoin="round" /></g></svg>
<div class="bt" style="left:560px;top:1276.5px;">Draw Sh...</div>
<svg class="abs" style="left:644.5px;top:1201px" width="72" height="67" viewBox="0 0 72 67"><g filter="url(#bb1)"><path d="M0 2Q14 6 20 13Q32 4 46 14Q60 30 50 48Q54 60 72 60V67Q52 70 44 56Q28 50 20 36Q12 18 0 12Z" fill="url(#bw)" /></g></svg>
<div class="bt" style="left:640px;top:1276.5px;">Inflate/D...</div>
<svg class="abs" style="left:724.5px;top:1201px" width="72" height="67" viewBox="0 0 72 67"><path d="M0 67V17Q2 7 14 3.5Q36 -2 58 3.5Q70 7 72 17V67Z" fill="url(#bd)"/><g filter="url(#bb1)"><path d="M10 8Q30 2 48 12Q64 22 62 34Q56 40 50 36Q58 50 48 58Q36 60 24 44Q10 34 14 22Q24 20 22 14Q12 16 10 8Z" fill="#dadada" /></g></svg>
<div class="bt" style="left:720px;top:1276.5px;">Layer</div>
<svg class="abs" style="left:804.5px;top:1201px" width="72" height="67" viewBox="0 0 72 67"><path d="M0 67V17Q2 7 14 3.5Q36 -2 58 3.5Q70 7 72 17V67Z" fill="url(#bd)"/><g filter="url(#bb1)"><path d="M24 10L34 8L38 22L58 22L62 32L44 36L46 56L40 60L30 40L8 44L4 36L24 28Z" fill="#dcdcdc" /><path d="M10 36L20 32L20 40Z" fill="#8a8a8a" /><path d="M42 50L46 46L46 56Z" fill="#8a8a8a" /></g><path d="M38 6Q52 10 64 20" fill="none" stroke="#ee6a4a" stroke-width="2.6" stroke-linecap="round" stroke-linejoin="round" /></svg>
<div class="bt" style="left:800px;top:1276.5px;">Fill/Deep...</div>
<svg class="abs" style="left:884.5px;top:1201px" width="72" height="67" viewBox="0 0 72 67"><path d="M0 67V17Q2 7 14 3.5Q36 -2 58 3.5Q70 7 72 17V67Z" fill="url(#bd)"/><g filter="url(#bb1)"><ellipse cx="36" cy="32" rx="30" ry="20" transform="rotate(32 36 32)" fill="#d2d2d2"/><ellipse cx="37" cy="30" rx="27" ry="17" transform="rotate(32 37 30)" fill="#c4c4c4"/></g><path d="M40 3L66 26" fill="none" stroke="#ee6a4a" stroke-width="2.4" stroke-linecap="round" stroke-linejoin="round" /></svg>
<div class="bt" style="left:880px;top:1276.5px;">Flatten/...</div>
<svg class="abs" style="left:964.5px;top:1201px" width="72" height="67" viewBox="0 0 72 67"><g filter="url(#bb1)"><path d="M0 0Q30 6 64 40Q62 50 52 54L50 67H0Z" fill="url(#bv)" /><path d="M2 4Q30 10 62 40Q56 48 44 44Q20 34 2 4Z" fill="#e0e0e0" /></g><path d="M40 4L68 26" fill="none" stroke="#ee6a4a" stroke-width="2.4" stroke-linecap="round" stroke-linejoin="round" /></svg>
<div class="bt" style="left:960px;top:1276.5px;">Plateau</div>
<svg class="abs" style="left:1044.5px;top:1201px" width="72" height="67" viewBox="0 0 72 67"><path d="M0 67V17Q2 7 14 3.5Q36 -2 58 3.5Q70 7 72 17V67Z" fill="url(#bd)"/><g filter="url(#bb1)"><path d="M4 62Q20 40 30 22Q38 12 44 16Q48 24 40 36Q28 54 4 62Z" fill="#dedede" /><path d="M44 16Q56 20 52 36Q40 52 8 62Q34 48 42 34Q48 24 44 16Z" fill="#a8a8a8" /></g><path d="M28 12L46 6L58 22" fill="none" stroke="#ee6a4a" stroke-width="2.8" stroke-linecap="round" stroke-linejoin="round" /></svg>
<div class="bt" style="left:1040px;top:1276.5px;">Scrape ...</div>
<svg class="abs" style="left:1124.5px;top:1201px" width="72" height="67" viewBox="0 0 72 67"><path d="M0 67V17Q2 7 14 3.5Q36 -2 58 3.5Q70 7 72 17V67Z" fill="url(#bd)"/><g clip-path="url(#bdc)"><circle cx="12" cy="20" r="4" fill="#757575"/><circle cx="10" cy="36" r="3" fill="#757575"/><circle cx="20" cy="10" r="3" fill="#757575"/><circle cx="60" cy="30" r="4" fill="#757575"/><circle cx="56" cy="48" r="3" fill="#757575"/><circle cx="50" cy="58" r="4" fill="#757575"/><circle cx="20" cy="60" r="3" fill="#757575"/><circle cx="64" cy="44" r="2.5" fill="#757575"/><circle cx="8" cy="50" r="2.5" fill="#757575"/><circle cx="44" cy="8" r="3" fill="#757575"/><circle cx="30" cy="62" r="2.5" fill="#757575"/><g filter="url(#bb1)"><path d="M36 14Q48 10 52 18Q62 22 56 30Q60 40 48 42Q44 52 34 50Q28 56 20 54Q14 60 6 56Q6 48 16 46Q18 38 24 34Q22 22 36 14Z" fill="#e4e4e4" /></g></g><path d="M42 2Q58 8 70 18" fill="none" stroke="#ee6a4a" stroke-width="2.4" stroke-linecap="round" stroke-linejoin="round" /></svg>
<div class="bt" style="left:1120px;top:1276.5px;">Scrape/Fill</div>
<svg class="abs" style="left:1204.5px;top:1201px" width="72" height="67" viewBox="0 0 72 67"><path d="M0 67V17Q2 7 14 3.5Q36 -2 58 3.5Q70 7 72 17V67Z" fill="#3e3e3e"/><g clip-path="url(#bdc)"><circle cx="8" cy="14" r="6" fill="#5a5a5a"/><circle cx="20" cy="6" r="6" fill="#5a5a5a"/><circle cx="34" cy="4" r="6" fill="#5a5a5a"/><circle cx="50" cy="6" r="6" fill="#5a5a5a"/><circle cx="64" cy="12" r="6" fill="#5a5a5a"/><circle cx="68" cy="28" r="5" fill="#5a5a5a"/><circle cx="66" cy="44" r="5" fill="#5a5a5a"/><circle cx="62" cy="58" r="5" fill="#5a5a5a"/><circle cx="6" cy="30" r="5" fill="#5a5a5a"/><circle cx="5" cy="46" r="5" fill="#5a5a5a"/><circle cx="10" cy="60" r="5" fill="#5a5a5a"/><circle cx="24" cy="64" r="5" fill="#5a5a5a"/><circle cx="40" cy="65" r="5" fill="#5a5a5a"/><circle cx="52" cy="64" r="5" fill="#5a5a5a"/><g filter="url(#bb2)"><path d="M18 10Q10 30 20 50Q34 62 50 54Q62 40 54 22Q44 8 30 14Q22 20 18 10Z" fill="#e6e6e6" /></g></g><path d="M36 8Q58 14 64 34" fill="none" stroke="#ee6a4a" stroke-width="3" stroke-linecap="round" stroke-linejoin="round" /></svg>
<div class="bt" style="left:1200px;top:1276.5px;color:#fff;">Smooth</div>
<svg class="abs" style="left:1284.5px;top:1201px" width="72" height="67" viewBox="0 0 72 67"><path d="M0 67V17Q2 7 14 3.5Q36 -2 58 3.5Q70 7 72 17V67Z" fill="url(#bd)"/><g filter="url(#bb1)"><path d="M8 42L30 6Q50 10 68 44Q40 56 8 42Z" fill="#cfcfcf" /><path d="M8 42L30 6L22 44Z" fill="#8e8e8e" /></g><path d="M40 2L66 26" fill="none" stroke="#ee6a4a" stroke-width="2.6" stroke-linecap="round" stroke-linejoin="round" /></svg>
<div class="bt" style="left:1280px;top:1276.5px;">Trim</div>
<svg class="abs" style="left:1364.5px;top:1201px" width="72" height="67" viewBox="0 0 72 67"><g filter="url(#bb1)"><path d="M4 34L30 48L14 67H0V40Z" fill="#5a5a5a" /><path d="M4 34L24 8Q40 6 54 22L56 56Q36 56 4 34Z" fill="url(#bl)" /><ellipse cx="39" cy="16" rx="15" ry="7" transform="rotate(30 39 16)" fill="#8a8a8a"/></g><path d="M2 28Q20 52 50 60Q58 60 56 52" fill="none" stroke="#f2d97c" stroke-width="2.8" stroke-linecap="round" stroke-linejoin="round" stroke-dasharray="6 3.5"/><path d="M56 6Q72 22 64 48" fill="none" stroke="#f2d97c" stroke-width="2.4" stroke-linecap="round" stroke-linejoin="round" /></svg>
<div class="bt" style="left:1360px;top:1276.5px;">Boundary</div>
<svg class="abs" style="left:1444.5px;top:1201px" width="72" height="67" viewBox="0 0 72 67"><g filter="url(#bb1)"><path d="M50 12Q44 30 34 48Q22 62 10 54Q2 44 14 32Q30 18 50 12Z" fill="url(#bw)" /></g><path d="M50 12L54 8" fill="none" stroke="#f2d97c" stroke-width="1.6" stroke-linecap="round" stroke-linejoin="round" /><path d="M0 -5.5 L10 0 L0 5.5 L2.5 0Z" fill="#f2d97c" transform="translate(56 6) rotate(-45)"/></svg>
<div class="bt" style="left:1440px;top:1276.5px;">Elastic G...</div>
<svg class="abs" style="left:1524.5px;top:1201px" width="72" height="67" viewBox="0 0 72 67"><g filter="url(#bb1)"><path d="M22 8Q6 14 6 34Q8 56 24 60Q34 58 32 46Q28 36 32 26Q40 16 50 28Q56 32 54 24Q50 6 22 8Z" fill="url(#bw)" /></g><path d="M18 4Q36 -2 46 14Q50 24 54 14" fill="none" stroke="#f2d97c" stroke-width="1.8" stroke-linecap="round" stroke-linejoin="round" /><path d="M0 -5.5 L10 0 L0 5.5 L2.5 0Z" fill="#f2d97c" transform="translate(55 10) rotate(-75)"/></svg>
<div class="bt" style="left:1520px;top:1276.5px;">Elastic S...</div>
<svg class="abs" style="left:1604.5px;top:1201px" width="72" height="67" viewBox="0 0 72 67"><rect x="0" y="22" width="54" height="45" fill="url(#bd)"/><g filter="url(#bb2)"><path d="M0 26Q20 30 34 14Q44 6 50 18Q52 40 54 67H0Z" fill="#a4a4a4" /><path d="M20 40Q34 20 44 12Q50 18 48 40Q40 56 20 40Z" fill="#cfcfcf" /></g><path d="M0 -5.5 L10 0 L0 5.5 L2.5 0Z" fill="#f2d97c" transform="translate(58 6) rotate(-40)"/></svg>
<div class="bt" style="left:1600px;top:1276.5px;">Grab</div>
<svg class="abs" style="left:1684.5px;top:1201px" width="72" height="67" viewBox="0 0 72 67"><rect x="0" y="28" width="56" height="39" fill="url(#bd)"/><g filter="url(#bb2)"><path d="M0 30Q16 32 26 18Q38 8 50 22Q60 36 56 67H0Z" fill="#a0a0a0" /><path d="M18 40Q26 20 38 14Q50 22 48 40Q36 56 18 40Z" fill="#d0d0d0" /></g><ellipse cx="33" cy="18" rx="17" ry="12" transform="rotate(-35 33 18)" fill="none" stroke="#f2d97c" stroke-width="1.4"/><circle cx="60" cy="41" r="11" fill="none" stroke="#f2d97c" stroke-width="1.2" opacity="0.8"/><path d="M0 -4.95 L9 0 L0 4.95 L2.25 0Z" fill="#f2d97c" transform="translate(62 8) rotate(-50)"/></svg>
<div class="bt" style="left:1680px;top:1276.5px;">Grab 2D</div>
<svg class="abs" style="left:1764.5px;top:1201px" width="72" height="67" viewBox="0 0 72 67"><g filter="url(#bb1)"><path d="M0 30Q30 22 54 6Q56 30 60 67H48Q40 38 0 40Z" fill="url(#bw)" /></g><path d="M8 26Q34 18 54 7Q56 30 60 64" fill="none" stroke="#f2d97c" stroke-width="1.4" stroke-linecap="round" stroke-linejoin="round" /><path d="M0 -5.5 L10 0 L0 5.5 L2.5 0Z" fill="#f2d97c" transform="translate(59 4) rotate(-50)"/></svg>
<div class="bt" style="left:1760px;top:1276.5px;">Grab Silh...</div>
<svg class="abs" style="left:1844.5px;top:1201px" width="72" height="67" viewBox="0 0 72 67"><path d="M0 67V17Q2 7 14 3.5Q36 -2 58 3.5Q70 7 72 17V67Z" fill="url(#bd)"/><g clip-path="url(#bdc)"><g filter="url(#bb1)"><path d="M0 18Q20 10 38 26Q52 32 60 18Q70 30 62 48Q48 62 30 52Q14 44 0 52Z" fill="#dedede" /></g></g><path d="M10 8Q24 6 34 20Q42 32 50 16" fill="none" stroke="#f2d97c" stroke-width="1.8" stroke-linecap="round" stroke-linejoin="round" /><path d="M0 -6.050000000000001 L11 0 L0 6.050000000000001 L2.75 0Z" fill="#f2d97c" transform="translate(52 10) rotate(-70)"/></svg>
<div class="bt" style="left:1840px;top:1276.5px;">Nudge</div>
<svg class="abs" style="left:1924.5px;top:1201px" width="72" height="67" viewBox="0 0 72 67"><path d="M0 67V17Q2 7 14 3.5Q36 -2 58 3.5Q70 7 72 17V67Z" fill="url(#bd)"/><g clip-path="url(#bdc)"><g filter="url(#bb1)"><path d="M42 0Q46 16 36 24Q14 30 6 44Q4 58 22 62Q40 60 46 40Q50 20 58 10Q50 4 42 0Z" fill="#e0e0e0" /><path d="M50 6Q40 24 22 44" fill="none" stroke="#a8a8a8" stroke-width="2.5" stroke-linecap="round" stroke-linejoin="round" filter="url(#bb1)"/></g></g><path d="M0 -6.050000000000001 L11 0 L0 6.050000000000001 L2.75 0Z" fill="#f2d97c" transform="translate(32 14) rotate(30)"/><path d="M0 -6.050000000000001 L11 0 L0 6.050000000000001 L2.75 0Z" fill="#f2d97c" transform="translate(58 30) rotate(200)"/></svg>
<div class="bt" style="left:1920px;top:1276.5px;">Pinch/M...</div>
<svg class="abs" style="left:2004.5px;top:1201px" width="72" height="67" viewBox="0 0 72 67"><g filter="url(#bb1)"><path d="M14 14L30 22L14 67H0Z" fill="url(#bv)" /><path d="M10 14Q14 2 30 6L54 18Q64 28 56 38Q46 44 34 36L14 26Q8 22 10 14Z" fill="url(#bw)" /></g><path d="M36 2Q64 10 62 48" fill="none" stroke="#f2d97c" stroke-width="2.8" stroke-linecap="round" stroke-linejoin="round" /></svg>
<div class="bt" style="left:2000px;top:1276.5px;">Pose</div>
<svg class="abs" style="left:4.5px;top:1312px" width="72" height="67" viewBox="0 0 72 67"><g filter="url(#bb1)"><path d="M0 67V30Q2 8 18 6Q34 6 46 28Q50 36 44 36Q30 18 22 26Q18 40 28 56L34 67Z" fill="url(#bw)" /></g><path d="M16 3Q44 4 62 44" fill="none" stroke="#f2d97c" stroke-width="1.6" stroke-linecap="round" stroke-linejoin="round" /><path d="M0 -5.5 L10 0 L0 5.5 L2.5 0Z" fill="#f2d97c" transform="translate(65 49) rotate(62)"/></svg>
<div class="bt" style="left:0px;top:1387.5px">Pull</div>
<svg class="abs" style="left:84.5px;top:1312px" width="72" height="67" viewBox="0 0 72 67"><path d="M0 67V17Q2 7 14 3.5Q36 -2 58 3.5Q70 7 72 17V67Z" fill="#4a4a4a"/><g clip-path="url(#bdc)"><path d="M4 0Q20.0 34 4 67" fill="none" stroke="#b8b8b8" stroke-width="0.9" stroke-linecap="round" stroke-linejoin="round" /><path d="M12 0Q24.0 34 12 67" fill="none" stroke="#b8b8b8" stroke-width="0.9" stroke-linecap="round" stroke-linejoin="round" /><path d="M20 0Q28.0 34 20 67" fill="none" stroke="#b8b8b8" stroke-width="0.9" stroke-linecap="round" stroke-linejoin="round" /><path d="M28 0Q32.0 34 28 67" fill="none" stroke="#b8b8b8" stroke-width="0.9" stroke-linecap="round" stroke-linejoin="round" /><path d="M36 0Q36.0 34 36 67" fill="none" stroke="#b8b8b8" stroke-width="0.9" stroke-linecap="round" stroke-linejoin="round" /><path d="M44 0Q40.0 34 44 67" fill="none" stroke="#b8b8b8" stroke-width="0.9" stroke-linecap="round" stroke-linejoin="round" /><path d="M52 0Q44.0 34 52 67" fill="none" stroke="#b8b8b8" stroke-width="0.9" stroke-linecap="round" stroke-linejoin="round" /><path d="M60 0Q48.0 34 60 67" fill="none" stroke="#b8b8b8" stroke-width="0.9" stroke-linecap="round" stroke-linejoin="round" /><path d="M68 0Q52.0 34 68 67" fill="none" stroke="#b8b8b8" stroke-width="0.9" stroke-linecap="round" stroke-linejoin="round" /><path d="M0 4Q36 17.0 72 4" fill="none" stroke="#b8b8b8" stroke-width="0.9" stroke-linecap="round" stroke-linejoin="round" /><path d="M0 12Q36 21.0 72 12" fill="none" stroke="#b8b8b8" stroke-width="0.9" stroke-linecap="round" stroke-linejoin="round" /><path d="M0 20Q36 25.0 72 20" fill="none" stroke="#b8b8b8" stroke-width="0.9" stroke-linecap="round" stroke-linejoin="round" /><path d="M0 28Q36 29.0 72 28" fill="none" stroke="#b8b8b8" stroke-width="0.9" stroke-linecap="round" stroke-linejoin="round" /><path d="M0 36Q36 33.0 72 36" fill="none" stroke="#b8b8b8" stroke-width="0.9" stroke-linecap="round" stroke-linejoin="round" /><path d="M0 44Q36 37.0 72 44" fill="none" stroke="#b8b8b8" stroke-width="0.9" stroke-linecap="round" stroke-linejoin="round" /><path d="M0 52Q36 41.0 72 52" fill="none" stroke="#b8b8b8" stroke-width="0.9" stroke-linecap="round" stroke-linejoin="round" /><path d="M0 60Q36 45.0 72 60" fill="none" stroke="#b8b8b8" stroke-width="0.9" stroke-linecap="round" stroke-linejoin="round" /></g><path d="M0 -6.050000000000001 L11 0 L0 6.050000000000001 L2.75 0Z" fill="#f2d97c" transform="translate(26 10) rotate(20)"/><path d="M0 -6.050000000000001 L11 0 L0 6.050000000000001 L2.75 0Z" fill="#f2d97c" transform="translate(58 30) rotate(200)"/></svg>
<div class="bt" style="left:80px;top:1387.5px">Relax Pi...</div>
<svg class="abs" style="left:164.5px;top:1312px" width="72" height="67" viewBox="0 0 72 67"><path d="M0 30L44 8L66 20L58 67H0Z" fill="#3a3a3a" /><path d="M4 28.0L3.6 67" fill="none" stroke="#b0b0b0" stroke-width="0.9" stroke-linecap="round" stroke-linejoin="round" /><path d="M11 24.5L9.9 67" fill="none" stroke="#b0b0b0" stroke-width="0.9" stroke-linecap="round" stroke-linejoin="round" /><path d="M18 21.0L16.2 67" fill="none" stroke="#b0b0b0" stroke-width="0.9" stroke-linecap="round" stroke-linejoin="round" /><path d="M25 17.5L22.5 67" fill="none" stroke="#b0b0b0" stroke-width="0.9" stroke-linecap="round" stroke-linejoin="round" /><path d="M32 14.0L28.8 67" fill="none" stroke="#b0b0b0" stroke-width="0.9" stroke-linecap="round" stroke-linejoin="round" /><path d="M39 10.5L35.1 67" fill="none" stroke="#b0b0b0" stroke-width="0.9" stroke-linecap="round" stroke-linejoin="round" /><path d="M0 34L44 12L62 28" fill="none" stroke="#b0b0b0" stroke-width="0.9" stroke-linecap="round" stroke-linejoin="round" /><path d="M0 41L44 19L62 35" fill="none" stroke="#b0b0b0" stroke-width="0.9" stroke-linecap="round" stroke-linejoin="round" /><path d="M0 48L44 26L62 42" fill="none" stroke="#b0b0b0" stroke-width="0.9" stroke-linecap="round" stroke-linejoin="round" /><path d="M0 55L44 33L62 49" fill="none" stroke="#b0b0b0" stroke-width="0.9" stroke-linecap="round" stroke-linejoin="round" /><path d="M0 62L44 40L62 56" fill="none" stroke="#b0b0b0" stroke-width="0.9" stroke-linecap="round" stroke-linejoin="round" /><path d="M0 69L44 47L62 63" fill="none" stroke="#b0b0b0" stroke-width="0.9" stroke-linecap="round" stroke-linejoin="round" /><path d="M0 -5.5 L10 0 L0 5.5 L2.5 0Z" fill="#f2d97c" transform="translate(30 6) rotate(190)"/><path d="M0 -5.5 L10 0 L0 5.5 L2.5 0Z" fill="#f2d97c" transform="translate(60 30) rotate(80)"/></svg>
<div class="bt" style="left:160px;top:1387.5px">Relax Slide</div>
<svg class="abs" style="left:244.5px;top:1312px" width="72" height="67" viewBox="0 0 72 67"><g filter="url(#bb1)"><path d="M0 67Q6 50 8 30Q10 8 26 8Q44 10 50 30Q56 38 62 30L60 40Q50 46 42 34Q34 18 26 24Q22 40 40 67Z" fill="url(#bw)" /></g><path d="M16 4Q40 -2 50 20Q54 30 58 16" fill="none" stroke="#f2d97c" stroke-width="1.8" stroke-linecap="round" stroke-linejoin="round" /><path d="M0 -5.5 L10 0 L0 5.5 L2.5 0Z" fill="#f2d97c" transform="translate(59 12) rotate(-75)"/></svg>
<div class="bt" style="left:240px;top:1387.5px">Snake H...</div>
<svg class="abs" style="left:324.5px;top:1312px" width="72" height="67" viewBox="0 0 72 67"><g filter="url(#bb1)"><path d="M0 67V40Q10 24 34 14Q48 8 52 10Q52 22 44 34Q62 50 72 52V67Z" fill="url(#bw)" /></g><path d="M0 -5.5 L10 0 L0 5.5 L2.5 0Z" fill="#f2d97c" transform="translate(58 5) rotate(-35)"/></svg>
<div class="bt" style="left:320px;top:1387.5px">Thumb</div>
<svg class="abs" style="left:404.5px;top:1312px" width="72" height="67" viewBox="0 0 72 67"><path d="M0 67V17Q2 7 14 3.5Q36 -2 58 3.5Q70 7 72 17V67Z" fill="url(#bd)"/><g clip-path="url(#bdc)"><g filter="url(#bb1)"><path d="M36 34Q40 28 34 26Q24 28 28 40Q36 50 50 42Q58 26 42 14Q20 8 10 30Q8 54 36 62Q62 60 70 40" fill="none" stroke="#d8d8d8" stroke-width="6" stroke-linecap="round" stroke-linejoin="round" /></g></g><path d="M28 4Q52 2 62 18" fill="none" stroke="#f2d97c" stroke-width="1.6" stroke-linecap="round" stroke-linejoin="round" /><path d="M0 -4.95 L9 0 L0 4.95 L2.25 0Z" fill="#f2d97c" transform="translate(64 22) rotate(70)"/><path d="M30 64Q12 58 8 44" fill="none" stroke="#f2d97c" stroke-width="1.6" stroke-linecap="round" stroke-linejoin="round" /><path d="M0 -4.95 L9 0 L0 4.95 L2.25 0Z" fill="#f2d97c" transform="translate(8 40) rotate(-90)"/></svg>
<div class="bt" style="left:400px;top:1387.5px">Twist</div>
<svg class="abs" style="left:484.5px;top:1312px" width="72" height="67" viewBox="0 0 72 67"><path d="M0 67V17Q2 7 14 3.5Q36 -2 58 3.5Q70 7 72 17V67Z" fill="url(#bdl)"/><ellipse cx="36" cy="32" rx="26" ry="22" transform="rotate(25 36 32)" fill="#6a6a6a" stroke="#4ade80" stroke-width="3.2"/><path d="M14 24L58 42" fill="none" stroke="#f0f0f0" stroke-width="0.7" stroke-linecap="round" stroke-linejoin="round" /><path d="M20 14L50 52" fill="none" stroke="#f0f0f0" stroke-width="0.7" stroke-linecap="round" stroke-linejoin="round" /><path d="M36 10L36 54" fill="none" stroke="#f0f0f0" stroke-width="0.7" stroke-linecap="round" stroke-linejoin="round" /><path d="M50 16L22 48" fill="none" stroke="#f0f0f0" stroke-width="0.7" stroke-linecap="round" stroke-linejoin="round" /><path d="M12 36L60 28" fill="none" stroke="#f0f0f0" stroke-width="0.7" stroke-linecap="round" stroke-linejoin="round" /><path d="M16 20L44 52L56 24Z" fill="none" stroke="#f0f0f0" stroke-width="0.7" stroke-linecap="round" stroke-linejoin="round" /><path d="M24 12L30 50L56 36Z" fill="none" stroke="#f0f0f0" stroke-width="0.7" stroke-linecap="round" stroke-linejoin="round" /></svg>
<div class="bt" style="left:480px;top:1387.5px">Density</div>
<svg class="abs" style="left:564.5px;top:1312px" width="72" height="67" viewBox="0 0 72 67"><path d="M0 67V17Q2 7 14 3.5Q36 -2 58 3.5Q70 7 72 17V67Z" fill="url(#bd)"/><g clip-path="url(#bdc)"><g filter="url(#bb1)"><path d="M8 40L24 22" fill="none" stroke="#cfcfcf" stroke-width="5" stroke-linecap="round" stroke-linejoin="round" /><path d="M14 54L34 30" fill="none" stroke="#cfcfcf" stroke-width="5" stroke-linecap="round" stroke-linejoin="round" /><path d="M28 58L46 36" fill="none" stroke="#cfcfcf" stroke-width="5" stroke-linecap="round" stroke-linejoin="round" /><path d="M44 52L60 34" fill="none" stroke="#cfcfcf" stroke-width="5" stroke-linecap="round" stroke-linejoin="round" /><path d="M34 16L46 6" fill="none" stroke="#cfcfcf" stroke-width="5" stroke-linecap="round" stroke-linejoin="round" /><path d="M46 26L58 14" fill="none" stroke="#cfcfcf" stroke-width="5" stroke-linecap="round" stroke-linejoin="round" /></g></g><path d="M12 16Q36 30 60 56" fill="none" stroke="#ee6a4a" stroke-width="2.4" stroke-linecap="round" stroke-linejoin="round" /><path d="M16 12Q40 26 64 52" fill="none" stroke="#2a2a2a" stroke-width="1.6" stroke-linecap="round" stroke-linejoin="round" /></svg>
<div class="bt" style="left:560px;top:1387.5px">Erase Mu...</div>
<svg class="abs" style="left:644.5px;top:1312px" width="72" height="67" viewBox="0 0 72 67"><path d="M0 67V17Q2 7 14 3.5Q36 -2 58 3.5Q70 7 72 17V67Z" fill="#3fb35f"/><g clip-path="url(#bdc)"><path d="M20 0Q36 4 50 0L72 14V50Q60 60 50 67H44Q30 40 6 30Q4 10 20 0Z" fill="#b84848" /><path d="M14 4Q30 8 44 6Q60 14 62 34Q56 56 40 62Q24 56 20 40Q4 32 6 14Z" fill="#e6d85a" /><path d="M2 0Q13.899999999999999 34 2 67" fill="none" stroke="#1e1e1e" stroke-width="0.8" stroke-linecap="round" stroke-linejoin="round" /><path d="M9 0Q18.45 34 9 67" fill="none" stroke="#1e1e1e" stroke-width="0.8" stroke-linecap="round" stroke-linejoin="round" /><path d="M16 0Q23.0 34 16 67" fill="none" stroke="#1e1e1e" stroke-width="0.8" stroke-linecap="round" stroke-linejoin="round" /><path d="M23 0Q27.55 34 23 67" fill="none" stroke="#1e1e1e" stroke-width="0.8" stroke-linecap="round" stroke-linejoin="round" /><path d="M30 0Q32.1 34 30 67" fill="none" stroke="#1e1e1e" stroke-width="0.8" stroke-linecap="round" stroke-linejoin="round" /><path d="M37 0Q36.65 34 37 67" fill="none" stroke="#1e1e1e" stroke-width="0.8" stroke-linecap="round" stroke-linejoin="round" /><path d="M44 0Q41.2 34 44 67" fill="none" stroke="#1e1e1e" stroke-width="0.8" stroke-linecap="round" stroke-linejoin="round" /><path d="M51 0Q45.75 34 51 67" fill="none" stroke="#1e1e1e" stroke-width="0.8" stroke-linecap="round" stroke-linejoin="round" /><path d="M58 0Q50.3 34 58 67" fill="none" stroke="#1e1e1e" stroke-width="0.8" stroke-linecap="round" stroke-linejoin="round" /><path d="M65 0Q54.85 34 65 67" fill="none" stroke="#1e1e1e" stroke-width="0.8" stroke-linecap="round" stroke-linejoin="round" /><path d="M72 0Q59.4 34 72 67" fill="none" stroke="#1e1e1e" stroke-width="0.8" stroke-linecap="round" stroke-linejoin="round" /><path d="M0 2Q36 10 72 2" fill="none" stroke="#1e1e1e" stroke-width="0.8" stroke-linecap="round" stroke-linejoin="round" /><path d="M0 9Q36 17 72 9" fill="none" stroke="#1e1e1e" stroke-width="0.8" stroke-linecap="round" stroke-linejoin="round" /><path d="M0 16Q36 24 72 16" fill="none" stroke="#1e1e1e" stroke-width="0.8" stroke-linecap="round" stroke-linejoin="round" /><path d="M0 23Q36 31 72 23" fill="none" stroke="#1e1e1e" stroke-width="0.8" stroke-linecap="round" stroke-linejoin="round" /><path d="M0 30Q36 38 72 30" fill="none" stroke="#1e1e1e" stroke-width="0.8" stroke-linecap="round" stroke-linejoin="round" /><path d="M0 37Q36 45 72 37" fill="none" stroke="#1e1e1e" stroke-width="0.8" stroke-linecap="round" stroke-linejoin="round" /><path d="M0 44Q36 52 72 44" fill="none" stroke="#1e1e1e" stroke-width="0.8" stroke-linecap="round" stroke-linejoin="round" /><path d="M0 51Q36 59 72 51" fill="none" stroke="#1e1e1e" stroke-width="0.8" stroke-linecap="round" stroke-linejoin="round" /><path d="M0 58Q36 66 72 58" fill="none" stroke="#1e1e1e" stroke-width="0.8" stroke-linecap="round" stroke-linejoin="round" /><path d="M0 65Q36 73 72 65" fill="none" stroke="#1e1e1e" stroke-width="0.8" stroke-linecap="round" stroke-linejoin="round" /></g></svg>
<div class="bt" style="left:640px;top:1387.5px">Face Set...</div>
<svg class="abs" style="left:724.5px;top:1312px" width="72" height="67" viewBox="0 0 72 67"><path d="M0 67V17Q2 7 14 3.5Q36 -2 58 3.5Q70 7 72 17V67Z" fill="url(#bdl)"/><g filter="url(#bb1)"><path d="M10 20Q14 10 28 14Q36 20 30 30Q40 40 50 32Q62 34 60 46Q52 62 34 60Q18 56 18 40Q22 32 14 28Q8 26 10 20Z" fill="#2c3236" /></g><path d="M10 20Q14 10 28 14Q36 20 30 30Q40 40 50 32Q62 34 60 46Q52 62 34 60Q18 56 18 40Q22 32 14 28Q8 26 10 20Z" fill="none" stroke="#f5a623" stroke-width="2.2" stroke-linecap="round" stroke-linejoin="round" stroke-dasharray="5 3"/></svg>
<div class="bt" style="left:720px;top:1387.5px">Mask</div>
<svg class="abs" style="left:804.5px;top:1312px" width="72" height="67" viewBox="0 0 72 67"><path d="M0 67V17Q2 7 14 3.5Q36 -2 58 3.5Q70 7 72 17V67Z" fill="#484848"/><g clip-path="url(#bdc)"><g filter="url(#bb1)"><path d="M0 67V56Q14 40 34 36Q48 30 50 16Q58 30 46 46Q60 44 66 36Q68 56 50 67Z" fill="#d8d8d8" /></g></g></svg>
<div class="bt" style="left:800px;top:1387.5px">Smear M...</div>
<div class="" style="left:2117.5px;top:63px;width:441.5px;height:431px;background:#282828;border-radius:8px;overflow:hidden"><div style="left:0;top:0;width:442px;height:32.5px;background:#282828"></div><div style="left:0;top:57.5px;width:442px;height:25px;background:#2b2b2b"></div><div style="left:0;top:107.5px;width:442px;height:25px;background:#2b2b2b"></div><div style="left:0;top:157.5px;width:442px;height:25px;background:#2b2b2b"></div><div style="left:0;top:207.5px;width:442px;height:25px;background:#2b2b2b"></div><div style="left:0;top:257.5px;width:442px;height:25px;background:#2b2b2b"></div><div style="left:0;top:307.5px;width:442px;height:25px;background:#2b2b2b"></div><div style="left:0;top:357.5px;width:442px;height:25px;background:#2b2b2b"></div><div style="left:0;top:407.5px;width:442px;height:25px;background:#2b2b2b"></div><div style="left:0;top:82.5px;width:442px;height:25px;background:#334d80"></div></div>
<div class="btn" style="left:2127.5px;top:67px;width:38.5px;height:23.5px;"></div>
<svg class="abs" style="left:2132px;top:69.7px;" width="18" height="18" viewBox="0 0 16 16"><rect x="1.5" y="1.5" width="5" height="3" rx="0.8" fill="#e6e6e6"/><rect x="8" y="6.5" width="6.5" height="3" rx="0.8" fill="#e6e6e6"/><rect x="8" y="11.5" width="6.5" height="3" rx="0.8" fill="#e6e6e6"/><path d="M3.5 5V13H7M3.5 8H7" fill="none" stroke="#e6e6e6" stroke-width="1.1" stroke-linecap="round" stroke-linejoin="round" /></svg>
<svg class="abs" style="left:2153px;top:76px" width="10" height="7" viewBox="0 0 10 7"><path d="M1.2 1.4L5 5.2L8.8 1.4" fill="none" stroke="#e0e0e0" stroke-width="1.5" stroke-linecap="round" stroke-linejoin="round"/></svg>
<div class="btn" style="left:2173px;top:67px;width:39.5px;height:23.5px;"></div>
<svg class="abs" style="left:2178px;top:69.7px;" width="18" height="18" viewBox="0 0 16 16"><path d="M3.5 4V12.5H12M1.5 6V14.5H10" fill="none" stroke="#e6e6e6" stroke-width="1.1" stroke-linecap="round" stroke-linejoin="round" /><rect x="5.5" y="1.5" width="9" height="9" rx="1" fill="none" stroke="#e6e6e6" stroke-width="1.2"/><path d="M6.5 9.5L9 5.5L11 8L12 7L13.5 9.5Z" fill="#e6e6e6" /><circle cx="12.3" cy="3.8" r="0.9" fill="#e6e6e6"/></svg>
<svg class="abs" style="left:2199px;top:76px" width="10" height="7" viewBox="0 0 10 7"><path d="M1.2 1.4L5 5.2L8.8 1.4" fill="none" stroke="#e0e0e0" stroke-width="1.5" stroke-linecap="round" stroke-linejoin="round"/></svg>
<div class="" style="left:2250.5px;top:67px;width:147px;height:23.5px;background:#1d1d1d;border:1px solid #3b3b3b;border-radius:5px"></div>
<svg class="abs" style="left:2256.5px;top:70.2px;" width="17" height="17" viewBox="0 0 16 16"><circle cx="9.8" cy="6.2" r="4.6" fill="none" stroke="#d0d0d0" stroke-width="1.3"/><path d="M6.5 9.5L1.5 14.5" fill="none" stroke="#d0d0d0" stroke-width="1.4" stroke-linecap="round" stroke-linejoin="round" /></svg>
<div class="t" style="left:2283px;top:68.5px;color:#7a7a7a">Search</div>
<div class="btn" style="left:2478.5px;top:67px;width:39px;height:23.5px;"></div>
<svg class="abs" style="left:2483px;top:69.7px;" width="18" height="18" viewBox="0 0 16 16"><path d="M1.5 2H14.5L9.5 8.5V12.5L6.5 14.5V8.5Z" fill="none" stroke="#e6e6e6" stroke-width="1.2" stroke-linecap="round" stroke-linejoin="round" /></svg>
<svg class="abs" style="left:2504px;top:76px" width="10" height="7" viewBox="0 0 10 7"><path d="M1.2 1.4L5 5.2L8.8 1.4" fill="none" stroke="#e0e0e0" stroke-width="1.5" stroke-linecap="round" stroke-linejoin="round"/></svg>
<div class="" style="left:2524px;top:67px;width:24px;height:23.5px;background:#545454;border-radius:5px"></div>
<svg class="abs" style="left:2527px;top:69.7px;" width="18" height="18" viewBox="0 0 16 16"><path d="M1.5 6.5H9M2.5 6.5V14.5H11.5V9.5M5.5 10.5H8.5" fill="none" stroke="#e0e0e0" stroke-width="1.2" stroke-linecap="round" stroke-linejoin="round" /><circle cx="12" cy="4.5" r="3.5" fill="#e0e0e0"/><path d="M12 2.7V6.3M10.2 4.5H13.8" fill="none" stroke="#545454" stroke-width="1.1" stroke-linecap="round" stroke-linejoin="round" /></svg>
<svg class="abs" style="left:2144px;top:98.5px;" width="19" height="19" viewBox="0 0 16 16"><rect x="1.5" y="1.5" width="13" height="3.6" rx="0.6" fill="#e0e0e0"/><path d="M2.3 6.3H13.7V13.5Q13.7 14.5 12.7 14.5H3.3Q2.3 14.5 2.3 13.5ZM5.8 8.2V9.8H10.2V8.2Z" fill="#e0e0e0" fill-rule="evenodd"/></svg>
<div class="t" style="left:2172px;top:98px;color:#d8d8d8">Scene Collection</div>
<svg class="abs" style="left:2149px;top:130px" width="10" height="7" viewBox="0 0 10 7"><path d="M1.2 1.4L5 5.2L8.8 1.4" fill="none" stroke="#c8c8c8" stroke-width="1.5" stroke-linecap="round" stroke-linejoin="round"/></svg>
<div class="" style="left:2167.5px;top:121.5px;width:24px;height:23px;background:#4a4a4a;border-radius:5px;border:1px solid #5c5c5c"></div>
<svg class="abs" style="left:2170px;top:123.5px;" width="19" height="19" viewBox="0 0 16 16"><rect x="1.5" y="1.5" width="13" height="3.6" rx="0.6" fill="#f0f0f0"/><path d="M2.3 6.3H13.7V13.5Q13.7 14.5 12.7 14.5H3.3Q2.3 14.5 2.3 13.5ZM5.8 8.2V9.8H10.2V8.2Z" fill="#f0f0f0" fill-rule="evenodd"/></svg>
<div class="t" style="left:2197px;top:123px;color:#fff">Collection</div>
<div class="" style="left:2153px;top:151px;width:1px;height:88px;background:#555"></div>
<svg class="abs" style="left:2120.5px;top:149px;" width="18" height="18" viewBox="0 0 16 16"><path d="M8.4 4.6L11.4 7.6L7 13.4H3Q1.9 13.3 2.4 12.3Z" fill="none" stroke="#e6e6e6" stroke-width="1.3" stroke-linecap="round" stroke-linejoin="round" /><path d="M8.9 3.3L11.3 0.9Q12.2 0.2 13.2 1L15 2.8Q15.8 3.8 15.1 4.8L12.7 7.2Z" fill="#e6e6e6" /></svg>
<div class="" style="left:2192.5px;top:146.5px;width:24px;height:23px;background:#5b6d96;border-radius:5px;border:1px solid #7585a8"></div>
<svg class="abs" style="left:2176px;top:152.5px" width="7" height="11" viewBox="0 0 7 11"><path d="M1.3 1.3L5.5 5.5L1.3 9.7" fill="none" stroke="#c8c8c8" stroke-width="1.4" stroke-linecap="round" stroke-linejoin="round"/></svg>
<svg class="abs" style="left:2195.5px;top:149px;" width="18" height="18" viewBox="0 0 16 16"><path d="M2.5 3H13.5L8 13.5Z" fill="none" stroke="#e19658" stroke-width="2.0" stroke-linecap="round" stroke-linejoin="round" /></svg>
<div class="t" style="left:2222px;top:148px;color:#e6e6e6">Cube</div>
<svg class="abs" style="left:2283.5px;top:147.5px;" width="19" height="19" viewBox="0 0 16 16"><path d="M3.5 3.5H12.5L8 13Z" fill="none" stroke="#00d6a3" stroke-width="1.1" stroke-linecap="round" stroke-linejoin="round" /><rect x="2" y="2" width="3" height="3" rx="0.6" fill="#282828" stroke="#00d6a3" stroke-width="1"/><rect x="11" y="2" width="3" height="3" rx="0.6" fill="#282828" stroke="#00d6a3" stroke-width="1"/><rect x="6.5" y="11.5" width="3" height="3" rx="0.6" fill="#282828" stroke="#00d6a3" stroke-width="1"/></svg>
<svg class="abs" style="left:2176px;top:177.5px" width="7" height="11" viewBox="0 0 7 11"><path d="M1.3 1.3L5.5 5.5L1.3 9.7" fill="none" stroke="#c8c8c8" stroke-width="1.4" stroke-linecap="round" stroke-linejoin="round"/></svg>
<svg class="abs" style="left:2195px;top:173.5px;" width="19" height="19" viewBox="0 0 16 16"><rect x="1" y="1" width="14" height="14" rx="1.8" fill="#e19658"/><path d="M3 13L7 6L10.5 13Z" fill="#282828" /><circle cx="11.2" cy="4.8" r="1.4" fill="#282828"/></svg>
<div class="t" style="left:2222px;top:173px;color:#e6e6e6">EMPTY</div>
<svg class="abs" style="left:2296.5px;top:172.5px;" width="19" height="19" viewBox="0 0 16 16"><path d="M13.5 2.5H3.5Q2.5 2.5 2.5 3.5V13.5H12.5Q13.5 13.5 13.5 12.5Z" fill="none" stroke="#e0607a" stroke-width="1.1" stroke-linecap="round" stroke-linejoin="round" /><path d="M2.5 13.5L7 6L11 13.5Z" fill="#e0607a" /><circle cx="10.5" cy="5.5" r="1.3" fill="#e0607a"/></svg>
<svg class="abs" style="left:2176px;top:202.5px" width="7" height="11" viewBox="0 0 7 11"><path d="M1.3 1.3L5.5 5.5L1.3 9.7" fill="none" stroke="#c8c8c8" stroke-width="1.4" stroke-linecap="round" stroke-linejoin="round"/></svg>
<svg class="abs" style="left:2195px;top:198.5px;" width="19" height="19" viewBox="0 0 16 16"><rect x="1" y="1" width="14" height="14" rx="1.8" fill="#e19658"/><path d="M3 13L7 6L10.5 13Z" fill="#282828" /><circle cx="11.2" cy="4.8" r="1.4" fill="#282828"/></svg>
<div class="t" style="left:2222px;top:198px;color:#e6e6e6">EMPTY.001</div>
<svg class="abs" style="left:2327.5px;top:197.5px;" width="19" height="19" viewBox="0 0 16 16"><path d="M13.5 2.5H3.5Q2.5 2.5 2.5 3.5V13.5H12.5Q13.5 13.5 13.5 12.5Z" fill="none" stroke="#e0607a" stroke-width="1.1" stroke-linecap="round" stroke-linejoin="round" /><path d="M2.5 13.5L7 6L11 13.5Z" fill="#e0607a" /><circle cx="10.5" cy="5.5" r="1.3" fill="#e0607a"/></svg>
<svg class="abs" style="left:2176px;top:227.5px" width="7" height="11" viewBox="0 0 7 11"><path d="M1.3 1.3L5.5 5.5L1.3 9.7" fill="none" stroke="#6a6a6a" stroke-width="1.4" stroke-linecap="round" stroke-linejoin="round"/></svg>
<svg class="abs" style="left:2195.5px;top:224px;" width="18" height="18" viewBox="0 0 16 16"><path d="M2.5 3H13.5L8 13.5Z" fill="none" stroke="#8a5a34" stroke-width="2.0" stroke-linecap="round" stroke-linejoin="round" /></svg>
<div class="t" style="left:2222px;top:223px;color:#8a8a8a">shark raw</div>
<svg class="abs" style="left:2313.5px;top:222.5px;" width="19" height="19" viewBox="0 0 16 16"><path d="M3.5 3.5H12.5L8 13Z" fill="none" stroke="#148a6a" stroke-width="1.1" stroke-linecap="round" stroke-linejoin="round" /><rect x="2" y="2" width="3" height="3" rx="0.6" fill="#282828" stroke="#148a6a" stroke-width="1"/><rect x="11" y="2" width="3" height="3" rx="0.6" fill="#282828" stroke="#148a6a" stroke-width="1"/><rect x="6.5" y="11.5" width="3" height="3" rx="0.6" fill="#282828" stroke="#148a6a" stroke-width="1"/></svg>
<div class="" style="left:2127.5px;top:231px;width:5px;height:5px;background:#e6e6e6;border-radius:3px"></div>
<svg class="abs" style="left:2428px;top:125.5px;" width="15" height="15" viewBox="0 0 16 16"><rect x="0.5" y="0.5" width="15" height="15" rx="2.5" fill="#fff"/><path d="M3.8 8.2L6.8 11.2L12.2 4.8" fill="none" stroke="#282828" stroke-width="1.9" stroke-linecap="round" stroke-linejoin="round" /></svg>
<svg class="abs" style="left:2451.5px;top:124.5px;" width="17" height="17" viewBox="0 0 16 16"><path d="M2 1.5L14.5 7.5L9.2 9.2L7.5 14.5Z" fill="#e6e6e6" /></svg>
<svg class="abs" style="left:2476px;top:124px;" width="18" height="18" viewBox="0 0 16 16"><path d="M1 8Q8 0.5 15 8Q8 15.5 1 8Z" fill="none" stroke="#e6e6e6" stroke-width="1.4" stroke-linecap="round" stroke-linejoin="round" /><circle cx="8" cy="8" r="2.6" fill="#e6e6e6"/></svg>
<svg class="abs" style="left:2501.5px;top:124.5px;" width="17" height="17" viewBox="0 0 16 16"><rect x="1.2" y="2" width="13.6" height="9" rx="1" fill="none" stroke="#e6e6e6" stroke-width="1.4"/><rect x="3" y="3.8" width="10" height="5.4" fill="#e6e6e6" opacity="0.75"/><path d="M4.5 14H11.5M8 11V14" fill="none" stroke="#e6e6e6" stroke-width="1.4" stroke-linecap="round" stroke-linejoin="round" /></svg>
<svg class="abs" style="left:2527px;top:124.5px;" width="17" height="17" viewBox="0 0 16 16"><path d="M1 5Q1 4 2 4H4.5L5.5 2.2H10.5L11.5 4H14Q15 4 15 5V12.5Q15 13.5 14 13.5H2Q1 13.5 1 12.5Z" fill="#e6e6e6" /><circle cx="8" cy="8.6" r="3.3" fill="#282828"/><circle cx="8" cy="8.6" r="1.9" fill="none" stroke="#e6e6e6" stroke-width="1.1"/></svg>
<svg class="abs" style="left:2451.5px;top:149.5px;" width="17" height="17" viewBox="0 0 16 16"><path d="M2 1.5L14.5 7.5L9.2 9.2L7.5 14.5Z" fill="#e6e6e6" /></svg>
<svg class="abs" style="left:2476px;top:149px;" width="18" height="18" viewBox="0 0 16 16"><path d="M1 8Q8 0.5 15 8Q8 15.5 1 8Z" fill="none" stroke="#e6e6e6" stroke-width="1.4" stroke-linecap="round" stroke-linejoin="round" /><circle cx="8" cy="8" r="2.6" fill="#e6e6e6"/></svg>
<svg class="abs" style="left:2501.5px;top:149.5px;" width="17" height="17" viewBox="0 0 16 16"><rect x="1.2" y="2" width="13.6" height="9" rx="1" fill="none" stroke="#e6e6e6" stroke-width="1.4"/><rect x="3" y="3.8" width="10" height="5.4" fill="#e6e6e6" opacity="0.75"/><path d="M4.5 14H11.5M8 11V14" fill="none" stroke="#e6e6e6" stroke-width="1.4" stroke-linecap="round" stroke-linejoin="round" /></svg>
<svg class="abs" style="left:2527px;top:149.5px;" width="17" height="17" viewBox="0 0 16 16"><path d="M1 5Q1 4 2 4H4.5L5.5 2.2H10.5L11.5 4H14Q15 4 15 5V12.5Q15 13.5 14 13.5H2Q1 13.5 1 12.5Z" fill="#e6e6e6" /><circle cx="8" cy="8.6" r="3.3" fill="#282828"/><circle cx="8" cy="8.6" r="1.9" fill="none" stroke="#e6e6e6" stroke-width="1.1"/></svg>
<svg class="abs" style="left:2451.5px;top:174.5px;" width="17" height="17" viewBox="0 0 16 16"><path d="M2 1.5L14.5 7.5L9.2 9.2L7.5 14.5Z" fill="#e6e6e6" /></svg>
<svg class="abs" style="left:2476px;top:174px;" width="18" height="18" viewBox="0 0 16 16"><path d="M1 8Q8 0.5 15 8Q8 15.5 1 8Z" fill="none" stroke="#e6e6e6" stroke-width="1.4" stroke-linecap="round" stroke-linejoin="round" /><circle cx="8" cy="8" r="2.6" fill="#e6e6e6"/></svg>
<svg class="abs" style="left:2501.5px;top:174.5px;" width="17" height="17" viewBox="0 0 16 16"><rect x="1.2" y="2" width="13.6" height="9" rx="1" fill="none" stroke="#e6e6e6" stroke-width="1.4"/><rect x="3" y="3.8" width="10" height="5.4" fill="#e6e6e6" opacity="0.75"/><path d="M4.5 14H11.5M8 11V14" fill="none" stroke="#e6e6e6" stroke-width="1.4" stroke-linecap="round" stroke-linejoin="round" /></svg>
<svg class="abs" style="left:2527px;top:174.5px;" width="17" height="17" viewBox="0 0 16 16"><path d="M1 5Q1 4 2 4H4.5L5.5 2.2H10.5L11.5 4H14Q15 4 15 5V12.5Q15 13.5 14 13.5H2Q1 13.5 1 12.5Z" fill="#e6e6e6" /><circle cx="8" cy="8.6" r="3.3" fill="#282828"/><circle cx="8" cy="8.6" r="1.9" fill="none" stroke="#e6e6e6" stroke-width="1.1"/></svg>
<svg class="abs" style="left:2451.5px;top:199.5px;" width="17" height="17" viewBox="0 0 16 16"><path d="M2 1.5L14.5 7.5L9.2 9.2L7.5 14.5Z" fill="#e6e6e6" /></svg>
<svg class="abs" style="left:2476px;top:199px;" width="18" height="18" viewBox="0 0 16 16"><path d="M1 8Q8 0.5 15 8Q8 15.5 1 8Z" fill="none" stroke="#e6e6e6" stroke-width="1.4" stroke-linecap="round" stroke-linejoin="round" /><circle cx="8" cy="8" r="2.6" fill="#e6e6e6"/></svg>
<svg class="abs" style="left:2501.5px;top:199.5px;" width="17" height="17" viewBox="0 0 16 16"><rect x="1.2" y="2" width="13.6" height="9" rx="1" fill="none" stroke="#e6e6e6" stroke-width="1.4"/><rect x="3" y="3.8" width="10" height="5.4" fill="#e6e6e6" opacity="0.75"/><path d="M4.5 14H11.5M8 11V14" fill="none" stroke="#e6e6e6" stroke-width="1.4" stroke-linecap="round" stroke-linejoin="round" /></svg>
<svg class="abs" style="left:2527px;top:199.5px;" width="17" height="17" viewBox="0 0 16 16"><path d="M1 5Q1 4 2 4H4.5L5.5 2.2H10.5L11.5 4H14Q15 4 15 5V12.5Q15 13.5 14 13.5H2Q1 13.5 1 12.5Z" fill="#e6e6e6" /><circle cx="8" cy="8.6" r="3.3" fill="#282828"/><circle cx="8" cy="8.6" r="1.9" fill="none" stroke="#e6e6e6" stroke-width="1.1"/></svg>
<svg class="abs" style="left:2451.5px;top:224.5px;" width="17" height="17" viewBox="0 0 16 16"><path d="M2 1.5L14.5 7.5L9.2 9.2L7.5 14.5Z" fill="#e6e6e6" /></svg>
<svg class="abs" style="left:2476px;top:224px;" width="18" height="18" viewBox="0 0 16 16"><path d="M1.5 8Q8 14 14.5 8" fill="none" stroke="#e6e6e6" stroke-width="1.2" stroke-linecap="round" stroke-linejoin="round" /></svg>
<svg class="abs" style="left:2501.5px;top:224.5px;" width="17" height="17" viewBox="0 0 16 16"><rect x="1.2" y="2" width="13.6" height="9" rx="1" fill="none" stroke="#e6e6e6" stroke-width="1.4"/><rect x="3" y="3.8" width="10" height="5.4" fill="#e6e6e6" opacity="0.75"/><path d="M4.5 14H11.5M8 11V14" fill="none" stroke="#e6e6e6" stroke-width="1.4" stroke-linecap="round" stroke-linejoin="round" /></svg>
<svg class="abs" style="left:2527px;top:224.5px;" width="17" height="17" viewBox="0 0 16 16"><path d="M1 5Q1 4 2 4H4.5L5.5 2.2H10.5L11.5 4H14Q15 4 15 5V12.5Q15 13.5 14 13.5H2Q1 13.5 1 12.5Z" fill="#e6e6e6" /><circle cx="8" cy="8.6" r="3.3" fill="#282828"/><circle cx="8" cy="8.6" r="1.9" fill="none" stroke="#e6e6e6" stroke-width="1.1"/></svg>
<div class="" style="left:2117.5px;top:498.5px;width:441.5px;height:435px;background:#303030;border-radius:8px;overflow:hidden"><div style="left:0;top:30.5px;width:34.5px;height:405px;background:#1d1d1d"></div><div style="left:2px;top:348.5px;width:32.5px;height:33px;background:#303030;border-radius:5px 0 0 5px"></div><div style="left:4px;top:72px;width:27px;height:1px;background:#2c2c2c"></div><div style="left:4px;top:263px;width:27px;height:1px;background:#2c2c2c"></div><div style="left:4px;top:307px;width:27px;height:1px;background:#2c2c2c"></div></div>
<div class="btn" style="left:2127.8px;top:502px;width:38.4px;height:23.5px;"></div>
<svg class="abs" style="left:2132px;top:504.2px;" width="19" height="19" viewBox="0 0 16 16"><rect x="1.5" y="2" width="13" height="5" rx="2.5" fill="#e6e6e6"/><circle cx="4.3" cy="4.5" r="1.5" fill="#282828"/><rect x="1.5" y="9" width="13" height="5" rx="2.5" fill="#e6e6e6"/><circle cx="11.7" cy="11.5" r="1.5" fill="#282828"/></svg>
<svg class="abs" style="left:2153.5px;top:511px" width="10" height="7" viewBox="0 0 10 7"><path d="M1.2 1.4L5 5.2L8.8 1.4" fill="none" stroke="#e0e0e0" stroke-width="1.5" stroke-linecap="round" stroke-linejoin="round"/></svg>
<div class="" style="left:2265px;top:502px;width:147.5px;height:23.5px;background:#1d1d1d;border:1px solid #3b3b3b;border-radius:5px"></div>
<svg class="abs" style="left:2271.5px;top:505.2px;" width="17" height="17" viewBox="0 0 16 16"><circle cx="9.8" cy="6.2" r="4.6" fill="none" stroke="#d0d0d0" stroke-width="1.3"/><path d="M6.5 9.5L1.5 14.5" fill="none" stroke="#d0d0d0" stroke-width="1.4" stroke-linecap="round" stroke-linejoin="round" /></svg>
<div class="t" style="left:2298px;top:503.5px;color:#7a7a7a">Search</div>
<div class="btn" style="left:2524.7px;top:502px;width:23.5px;height:23.5px;"></div>
<svg class="abs" style="left:2531.5px;top:511px" width="10" height="7" viewBox="0 0 10 7"><path d="M1.2 1.4L5 5.2L8.8 1.4" fill="none" stroke="#e0e0e0" stroke-width="1.5" stroke-linecap="round" stroke-linejoin="round"/></svg>
<svg class="abs" style="left:2125.5px;top:546.5px;" width="19" height="19" viewBox="0 0 16 16"><path d="M3.5 1.5V8" fill="none" stroke="#e0e0e0" stroke-width="1.3" stroke-linecap="round" stroke-linejoin="round" /><path d="M2 9H5V13.5Q3.5 15.5 2 13.5Z" fill="#e0e0e0" /><path d="M10 2.2Q8 3.5 8.5 6L10.5 7.8V14Q11.5 15 12.5 14V7.8L14.5 6Q15 3.5 13 2.2V5.2H10Z" fill="#e0e0e0" /></svg>
<svg class="abs" style="left:2125.5px;top:589.5px;" width="19" height="19" viewBox="0 0 16 16"><rect x="1.5" y="4.5" width="13" height="9.5" rx="1.2" fill="none" stroke="#e0e0e0" stroke-width="1.4"/><path d="M3.5 4.5V2.5H8V4.5Z" fill="#e0e0e0" /><rect x="3.5" y="7" width="5.5" height="4.5" fill="#e0e0e0"/><rect x="11" y="7" width="2" height="1.6" fill="#e0e0e0"/><rect x="11" y="10" width="2" height="1.6" fill="#e0e0e0"/></svg>
<svg class="abs" style="left:2125.5px;top:625.5px;" width="19" height="19" viewBox="0 0 16 16"><path d="M1.5 2H14.5V7H1.5Z" fill="#e0e0e0" /><path d="M3.5 8V14.5H12.5V8" fill="none" stroke="#e0e0e0" stroke-width="1.3" stroke-linecap="round" stroke-linejoin="round" /><path d="M5.5 13L8 9L10.5 13Z" fill="#e0e0e0" /></svg>
<svg class="abs" style="left:2125.5px;top:661.1px;" width="19" height="19" viewBox="0 0 16 16"><path d="M3.5 4V12.5H12M1.5 6V14.5H10" fill="none" stroke="#e0e0e0" stroke-width="1.1" stroke-linecap="round" stroke-linejoin="round" /><rect x="5.5" y="1.5" width="9" height="9" rx="1" fill="none" stroke="#e0e0e0" stroke-width="1.2"/><path d="M6.5 9.5L9 5.5L11 8L12 7L13.5 9.5Z" fill="#e0e0e0" /><circle cx="12.3" cy="3.8" r="0.9" fill="#e0e0e0"/></svg>
<svg class="abs" style="left:2125.5px;top:696.1px;" width="19" height="19" viewBox="0 0 16 16"><path d="M5 2.5L8.5 10Q8 12 5 12Q1.5 12 1.8 9.5Z" fill="#e0e0e0" /><circle cx="11.5" cy="4" r="1.8" fill="#e0e0e0"/><circle cx="11" cy="11" r="3.2" fill="none" stroke="#e0e0e0" stroke-width="1.2"/><circle cx="11" cy="10" r="0.9" fill="#e0e0e0"/></svg>
<svg class="abs" style="left:2125.5px;top:731.5px;" width="19" height="19" viewBox="0 0 16 16"><circle cx="8" cy="8.5" r="5.8" fill="none" stroke="#e0607a" stroke-width="1.3"/><path d="M4 5Q7 3.5 8 6Q10 7.5 8 9.5Q7 12 5.5 12.5Q3 10 3 8Q3 6 4 5Z" fill="#e0607a" /><path d="M11 8Q13 8.5 13 10.5Q12 12.5 10.5 12.5Q10 10 11 8Z" fill="#e0607a" /><path d="M12.5 2L14.5 1M2 15L3.5 13.5" fill="none" stroke="#e0607a" stroke-width="1.1" stroke-linecap="round" stroke-linejoin="round" /></svg>
<svg class="abs" style="left:2125.5px;top:774.2px;" width="19" height="19" viewBox="0 0 16 16"><rect x="1.5" y="1.5" width="13" height="3.6" rx="0.6" fill="#e0e0e0"/><path d="M2.3 6.3H13.7V13.5Q13.7 14.5 12.7 14.5H3.3Q2.3 14.5 2.3 13.5ZM5.8 8.2V9.8H10.2V8.2Z" fill="#e0e0e0" fill-rule="evenodd"/></svg>
<svg class="abs" style="left:2125.5px;top:819.5px;" width="19" height="19" viewBox="0 0 16 16"><rect x="4" y="4" width="8" height="8" fill="#e19658"/><path d="M1.5 4.5V1.5H4.5M11.5 1.5H14.5V4.5M14.5 11.5V14.5H11.5M4.5 14.5H1.5V11.5" fill="none" stroke="#e19658" stroke-width="1.2" stroke-linecap="round" stroke-linejoin="round" /></svg>
<svg class="abs" style="left:2125.5px;top:853.9px;" width="19" height="19" viewBox="0 0 16 16"><path d="M10.5 1.2Q7.5 1.5 7.2 4.5Q7.2 5.5 7.6 6.3L1.6 12.3Q0.8 13.6 1.9 14.5Q3 15.3 4 14.3L9.8 8.4Q11 8.9 12.2 8.6Q14.8 7.8 14.8 5Q14.8 4.3 14.5 3.8L12.2 6.1L10.2 5.6L9.8 3.6L12 1.4Q11.3 1.2 10.5 1.2Z" fill="#5a9cf0" /></svg>
<svg class="abs" style="left:2125.5px;top:889.5px;" width="19" height="19" viewBox="0 0 16 16"><circle cx="3.5" cy="3.5" r="2.3" fill="#5a9cf0"/><circle cx="12.5" cy="4.5" r="1.6" fill="#5a9cf0"/><circle cx="3.5" cy="13" r="1.6" fill="#5a9cf0"/><circle cx="12.5" cy="13" r="1.6" fill="#5a9cf0"/><path d="M3.5 3.5L12.5 4.5M3.5 3.5V13M3.5 3.5L12.5 13" fill="none" stroke="#5a9cf0" stroke-width="1.1" stroke-linecap="round" stroke-linejoin="round" /></svg>
<div style="left:2122px;top:915px;width:28px;height:18px;overflow:hidden"><svg class="abs" style="left:3.5px;top:4.5px;" width="19" height="19" viewBox="0 0 16 16"><path d="M2 12A6 6 0 0 1 11 4" fill="none" stroke="#5a9cf0" stroke-width="1.6" stroke-linecap="round" stroke-linejoin="round" /><circle cx="8" cy="10.5" r="2.8" fill="#5a9cf0"/><circle cx="13" cy="3" r="1.6" fill="#5a9cf0"/></svg></div>
<svg class="abs" style="left:2164.5px;top:542px;" width="19" height="19" viewBox="0 0 16 16"><rect x="4" y="4" width="8" height="8" fill="#e6e6e6"/><path d="M1.5 4.5V1.5H4.5M11.5 1.5H14.5V4.5M14.5 11.5V14.5H11.5M4.5 14.5H1.5V11.5" fill="none" stroke="#e6e6e6" stroke-width="1.2" stroke-linecap="round" stroke-linejoin="round" /></svg>
<div class="t" style="left:2194px;top:541px;">Cube</div>
<svg class="abs" style="left:2528px;top:542.5px;" width="18" height="18" viewBox="0 0 16 16"><path d="M9.5 2L14 6.5L12.5 7L10.5 9L10 12L4 6L7 5.5L9 3.5ZM7 9L2 14" fill="none" stroke="#9a9a9a" stroke-width="1.1" stroke-linecap="round" stroke-linejoin="round" /></svg>
<div class="" style="left:2162.5px;top:584.7px;width:387.2px;height:24px;background:#545454;border-radius:5px"></div>
<svg class="abs" style="left:2169.5px;top:590px" width="13" height="13" viewBox="0 0 13 13"><path d="M6.5 1V12M1 6.5H12" stroke="#e6e6e6" stroke-width="1.3"/></svg>
<div class="t" style="left:2326px;top:586px;">Add Modifier</div>
<div class="" style="left:2117px;top:937px;width:442px;height:473.5px;background:#303030;border-radius:8px;overflow:hidden"><div style="left:0;top:30px;width:442px;height:361px;background:#e0e0e0;overflow:hidden"><svg class="abs" style="left:0;top:0" width="442" height="361" viewBox="0 0 1763 1440"><defs><filter id="ib" x="-5%" y="-5%" width="110%" height="110%"><feGaussianBlur stdDeviation="2.2"/></filter></defs><g filter="url(#ib)"><path d="M1225 115C1229.2 129.2 1241.7 182.5 1250 200C1258.3 217.5 1270 232.5 1275 220C1280 207.5 1279.2 140.8 1280 125" fill="#9c9c9c" stroke="#444" stroke-width="5"/><path d="M830 -20C841.7 -10 871.7 25 900 40C928.3 55 970 62.5 1000 70C1030 77.5 1063.3 71.7 1080 85C1096.7 98.3 1091.7 120 1100 150C1108.3 180 1116.7 251.7 1130 265C1143.3 278.3 1165.8 245.8 1180 230C1194.2 214.2 1209.2 190 1215 170C1220.8 150 1200.8 118.3 1215 110C1229.2 101.7 1269.2 120 1300 120C1330.8 120 1366.7 116.7 1400 110C1433.3 103.3 1466.7 91.7 1500 80C1533.3 68.3 1568.3 56.7 1600 40C1631.7 23.3 1675 -10 1690 -20" fill="#a9a9a9"/><path d="M830 -20C841.7 -10 871.7 25 900 40C928.3 55 970 62.5 1000 70C1030 77.5 1063.3 71.7 1080 85C1096.7 98.3 1091.7 120 1100 150C1108.3 180 1116.7 251.7 1130 265C1143.3 278.3 1165.8 245.8 1180 230C1194.2 214.2 1209.2 190 1215 170C1220.8 150 1200.8 118.3 1215 110C1229.2 101.7 1269.2 120 1300 120C1330.8 120 1366.7 116.7 1400 110C1433.3 103.3 1466.7 91.7 1500 80C1533.3 68.3 1568.3 56.7 1600 40C1631.7 23.3 1675 -10 1690 -20" fill="none" stroke="#0c0c0c" stroke-width="11" stroke-linecap="round" stroke-linejoin="round"/><path d="M1070 55C1080 55.8 1105.8 52.5 1130 60C1154.2 67.5 1200.8 93.3 1215 100" fill="none" stroke="#222" stroke-width="6" stroke-linecap="round" stroke-linejoin="round"/><path d="M1330 10C1332.5 16.7 1335 46.7 1345 50C1355 53.3 1385 29.2 1390 30C1395 30.8 1377.5 50.8 1375 55" fill="none" stroke="#0c0c0c" stroke-width="7" stroke-linecap="round" stroke-linejoin="round"/><path d="M830 320L870 260L920 200L985 165L990 220L985 290L995 320L1100 370L1200 440L1290 520L1370 610L1440 680L1520 730L1600 760L1660 690L1720 630L1790 590L1790 690L1720 730L1700 800L1730 880L1735 900L1680 890L1620 830L1590 800L1500 820L1400 850L1300 900L1200 960L1100 1020L1000 1070L950 1095L940 1100L945 1200L965 1305L900 1270L830 1210L780 1160L700 1190L600 1195L500 1180L400 1140L300 1070L220 990L160 900L120 850L95 820L100 795L130 790L180 850L250 900L350 915L430 910L500 890L560 860L600 820L620 780L620 760L440 700L480 640L530 560L600 470L680 400L760 350L830 320Z" fill="#a9a9a9"/><path d="M600 740L560 700L500 690L440 710L380 720L330 700L280 665L230 660L200 700L200 780L300 860L450 880L600 800Z" fill="#a9a9a9"/><path d="M190 800L210 760L240 730L260 890L350 912L430 908L500 888L560 858L570 830L540 840L500 830L470 850L430 810L400 800L380 850L340 780L290 860L250 760L215 790Z" fill="#f4f4f4"/><path d="M190 850L215 770L245 730L265 895L300 840L335 785L360 912L385 850L405 812L440 905L470 852L490 838L515 880L545 840L560 835L575 855" fill="none" stroke="#0c0c0c" stroke-width="6"/><path d="M150 800L148 700L165 640L182 700L205 790Z" fill="#f4f4f4" stroke="#0c0c0c" stroke-width="6"/><path d="M830 320C836.7 310 855 280 870 260C885 240 900.8 215.8 920 200C939.2 184.2 973.3 161.7 985 165C996.7 168.3 990 199.2 990 220C990 240.8 984.2 273.3 985 290C985.8 306.7 993.3 315 995 320" fill="none" stroke="#0c0c0c" stroke-width="11" stroke-linecap="round" stroke-linejoin="round"/><path d="M995 320C1012.5 328.3 1065.8 350 1100 370C1134.2 390 1168.3 415 1200 440C1231.7 465 1261.7 491.7 1290 520C1318.3 548.3 1345 583.3 1370 610C1395 636.7 1415 660 1440 680C1465 700 1493.3 716.7 1520 730C1546.7 743.3 1586.7 755 1600 760" fill="none" stroke="#0c0c0c" stroke-width="11" stroke-linecap="round" stroke-linejoin="round"/><path d="M1600 760C1610 748.3 1640 711.7 1660 690C1680 668.3 1698.3 646.7 1720 630C1741.7 613.3 1778.3 580 1790 590C1801.7 600 1801.7 666.7 1790 690C1778.3 713.3 1735 711.7 1720 730C1705 748.3 1698.3 775 1700 800C1701.7 825 1724.2 863.3 1730 880C1735.8 896.7 1743.3 898.3 1735 900C1726.7 901.7 1699.2 901.7 1680 890C1660.8 878.3 1635 845 1620 830C1605 815 1595 805 1590 800" fill="none" stroke="#0c0c0c" stroke-width="10" stroke-linecap="round" stroke-linejoin="round"/><path d="M1590 800C1575 803.3 1531.7 811.7 1500 820C1468.3 828.3 1433.3 836.7 1400 850C1366.7 863.3 1333.3 881.7 1300 900C1266.7 918.3 1233.3 940 1200 960C1166.7 980 1133.3 1001.7 1100 1020C1066.7 1038.3 1025 1057.5 1000 1070C975 1082.5 958.3 1090.8 950 1095" fill="none" stroke="#0c0c0c" stroke-width="13" stroke-linecap="round" stroke-linejoin="round"/><path d="M940 1100C967.5 1106.7 940.8 1165.8 945 1200C949.2 1234.2 972.5 1293.3 965 1305C957.5 1316.7 922.5 1285.8 900 1270C877.5 1254.2 850 1228.3 830 1210C810 1191.7 761.7 1178.3 780 1160C798.3 1141.7 912.5 1093.3 940 1100Z" fill="none" stroke="#0c0c0c" stroke-width="11" stroke-linecap="round" stroke-linejoin="round"/><path d="M780 1160C766.7 1165 730 1184.2 700 1190C670 1195.8 633.3 1196.7 600 1195C566.7 1193.3 533.3 1189.2 500 1180C466.7 1170.8 433.3 1158.3 400 1140C366.7 1121.7 330 1095 300 1070C270 1045 243.3 1018.3 220 990C196.7 961.7 176.7 923.3 160 900C143.3 876.7 130.8 863.3 120 850C109.2 836.7 98.3 829.2 95 820C91.7 810.8 94.2 800 100 795C105.8 790 125 790.8 130 790" fill="none" stroke="#0c0c0c" stroke-width="14" stroke-linecap="round" stroke-linejoin="round"/><path d="M130 790C138.3 800 160 831.7 180 850C200 868.3 221.7 889.2 250 900C278.3 910.8 320 913.3 350 915C380 916.7 405 914.2 430 910C455 905.8 478.3 898.3 500 890C521.7 881.7 543.3 871.7 560 860C576.7 848.3 590 833.3 600 820C610 806.7 616.7 786.7 620 780" fill="none" stroke="#0c0c0c" stroke-width="9" stroke-linecap="round" stroke-linejoin="round"/><path d="M440 700C446.7 690 465 663.3 480 640C495 616.7 510 588.3 530 560C550 531.7 575 496.7 600 470C625 443.3 653.3 420 680 400C706.7 380 735 363.3 760 350C785 336.7 818.3 325 830 320" fill="none" stroke="#0c0c0c" stroke-width="11" stroke-linecap="round" stroke-linejoin="round"/><path d="M200 780C200 766.7 195 720 200 700C205 680 216.7 665.8 230 660C243.3 654.2 263.3 658.3 280 665C296.7 671.7 313.3 690.8 330 700C346.7 709.2 361.7 718.3 380 720C398.3 721.7 430 711.7 440 710" fill="none" stroke="#0c0c0c" stroke-width="9" stroke-linecap="round" stroke-linejoin="round"/><path d="M940 1100L945 1200L965 1305L900 1270L830 1210L780 1160Z" fill="#a2a2a2"/><path d="M940 1100C967.5 1106.7 940.8 1165.8 945 1200C949.2 1234.2 972.5 1293.3 965 1305C957.5 1316.7 922.5 1285.8 900 1270C877.5 1254.2 850 1228.3 830 1210C810 1191.7 761.7 1178.3 780 1160C798.3 1141.7 912.5 1093.3 940 1100Z" fill="none" stroke="#0c0c0c" stroke-width="10" stroke-linecap="round" stroke-linejoin="round"/><ellipse cx="293" cy="735" rx="30" ry="24" fill="#0c0c0c" transform="rotate(20 293 735)"/><path d="M245 700C252.5 698.3 274.2 687.5 290 690C305.8 692.5 330 705 340 715C350 725 353.3 740 350 750C346.7 760 325 770.8 320 775" fill="none" stroke="#0c0c0c" stroke-width="6" stroke-linecap="round" stroke-linejoin="round"/><path d="M520 690C511.7 691.7 482.5 691.7 470 700C457.5 708.3 446.7 726.7 445 740C443.3 753.3 447.5 775 460 780C472.5 785 500 776.7 520 770C540 763.3 565 750 580 740C595 730 605 715 610 710" fill="none" stroke="#0c0c0c" stroke-width="9" stroke-linecap="round" stroke-linejoin="round"/><path d="M470 785C475.8 779.2 505 772.5 520 770C535 767.5 554.2 765 560 770C565.8 775 561.7 792.5 555 800C548.3 807.5 531.7 814.2 520 815C508.3 815.8 493.3 810 485 805C476.7 800 464.2 790.8 470 785Z" fill="#f0f0f0" stroke="#0c0c0c" stroke-width="7"/><ellipse cx="535" cy="785" rx="16" ry="12" fill="#0c0c0c"/><path d="M600 740C606.7 738.3 626.7 726.7 640 730C653.3 733.3 680 748.3 680 760C680 771.7 653.3 791.7 640 800C626.7 808.3 606.7 808.3 600 810" fill="none" stroke="#0c0c0c" stroke-width="8" stroke-linecap="round" stroke-linejoin="round"/><path d="M620 600C643.3 588.3 713.3 546.7 760 530C806.7 513.3 863.3 500 900 500C936.7 500 960 513.3 980 530C1000 546.7 1010.8 575 1020 600C1029.2 625 1036.7 650 1035 680C1033.3 710 1022.5 746.7 1010 780C997.5 813.3 968.3 863.3 960 880" fill="none" stroke="#333" stroke-width="5" stroke-linecap="round" stroke-linejoin="round"/><path d="M890 570C900 576.7 935 591.7 950 610C965 628.3 978.3 655 980 680C981.7 705 963.3 746.7 960 760" fill="none" stroke="#444" stroke-width="5" stroke-linecap="round" stroke-linejoin="round"/><path d="M860 620C868.3 626.7 898.3 643.3 910 660C921.7 676.7 929.2 700 930 720C930.8 740 917.5 770 915 780" fill="none" stroke="#444" stroke-width="5" stroke-linecap="round" stroke-linejoin="round"/><path d="M830 680C836.7 686.7 861.7 705 870 720C878.3 735 878.3 761.7 880 770" fill="none" stroke="#555" stroke-width="5" stroke-linecap="round" stroke-linejoin="round"/><path d="M650 710C668.3 708.3 725 691.7 760 700C795 708.3 823.3 736.7 860 760C896.7 783.3 931.7 823.3 980 840C1028.3 856.7 1080 866.7 1150 860C1220 853.3 1325 815 1400 800C1475 785 1566.7 775 1600 770" fill="none" stroke="#666" stroke-width="3" stroke-linecap="round" stroke-linejoin="round"/><path d="M1370 850C1378.3 855 1406.7 874.2 1420 880C1433.3 885.8 1446.7 890 1450 885C1453.3 880 1440.8 859.2 1440 850C1439.2 840.8 1444.2 833.3 1445 830" fill="#9c9c9c" stroke="#333" stroke-width="5"/><path d="M1430 690C1435.8 689.2 1460 680.8 1465 685C1470 689.2 1460.8 710 1460 715" fill="#9c9c9c" stroke="#333" stroke-width="5"/><path d="M690 1205C691.7 1212.5 695.8 1236.7 700 1250C704.2 1263.3 707.5 1286.7 715 1285C722.5 1283.3 735.8 1255 745 1240C754.2 1225 765.8 1202.5 770 1195" fill="#555" stroke="#222" stroke-width="5"/><path d="M1740 450C1731.7 465 1706.7 508.3 1690 540C1673.3 571.7 1655 610 1640 640C1625 670 1606.7 706.7 1600 720" fill="none" stroke="#cdcdcd" stroke-width="3" stroke-linecap="round" stroke-linejoin="round"/><path d="M1610 880C1616.7 893.3 1631.7 946.7 1650 960C1668.3 973.3 1708.3 960 1720 960" fill="none" stroke="#cdcdcd" stroke-width="3" stroke-linecap="round" stroke-linejoin="round"/><path d="M790 1220C796.7 1235 811.7 1286.7 830 1310C848.3 1333.3 888.3 1351.7 900 1360" fill="none" stroke="#cdcdcd" stroke-width="3" stroke-linecap="round" stroke-linejoin="round"/></g></svg></div></div>
<div class="btn" style="left:2127.7px;top:941.7px;width:37.5px;height:23px;"></div>
<svg class="abs" style="left:2131.5px;top:944.2px;" width="18" height="18" viewBox="0 0 16 16"><rect x="1.5" y="1.5" width="13" height="13" rx="1.5" fill="none" stroke="#e6e6e6" stroke-width="1.3"/><path d="M3.5 3.5H12.5V6.5H10.5V10.5H8.5V6.5H7V12H5V6.5H3.5Z" fill="#e6e6e6" /></svg>
<svg class="abs" style="left:2152px;top:950.5px" width="10" height="7" viewBox="0 0 10 7"><path d="M1.2 1.4L5 5.2L8.8 1.4" fill="none" stroke="#e0e0e0" stroke-width="1.5" stroke-linecap="round" stroke-linejoin="round"/></svg>
<div class="btn" style="left:2173px;top:941.7px;width:83px;height:23px;"></div>
<svg class="abs" style="left:2178px;top:944.2px;" width="18" height="18" viewBox="0 0 16 16"><rect x="1.5" y="1.5" width="13" height="13" rx="1.5" fill="none" stroke="#e6e6e6" stroke-width="1.3"/><path d="M2.5 14L7 6L11.5 14Z" fill="#e6e6e6" /><circle cx="11" cy="5" r="1.4" fill="#e6e6e6"/></svg>
<div class="t" style="left:2205.6px;top:943px;">View</div>
<svg class="abs" style="left:2242.5px;top:950.5px" width="10" height="7" viewBox="0 0 10 7"><path d="M1.2 1.4L5 5.2L8.8 1.4" fill="none" stroke="#e0e0e0" stroke-width="1.5" stroke-linecap="round" stroke-linejoin="round"/></svg>
<div class="t" style="left:2273px;top:943px;color:#dedede">View</div>
<div class="t" style="left:2321.7px;top:943px;color:#dedede">Image</div>
<div class="t" style="left:2383px;top:943px;color:#dedede">Sprite</div>
<div class="" style="left:2451px;top:941.7px;width:108px;height:23px;background:#1d1d1d;border:1px solid #3b3b3b;border-radius:5px 0 0 5px;border-right:none;overflow:hidden"><div style="left:-1px;top:-1px;width:39.5px;height:23px;background:#282828;border-right:1px solid #3b3b3b"></div></div>
<svg class="abs" style="left:2456px;top:944.2px;" width="18" height="18" viewBox="0 0 16 16"><rect x="1.5" y="1.5" width="13" height="13" rx="1.5" fill="none" stroke="#e6e6e6" stroke-width="1.3"/><path d="M2.5 14L7 6L11.5 14Z" fill="#e6e6e6" /><circle cx="11" cy="5" r="1.4" fill="#e6e6e6"/></svg>
<svg class="abs" style="left:2476px;top:950.5px" width="10" height="7" viewBox="0 0 10 7"><path d="M1.2 1.4L5 5.2L8.8 1.4" fill="none" stroke="#e0e0e0" stroke-width="1.5" stroke-linecap="round" stroke-linejoin="round"/></svg>
<div class="t" style="left:2499.5px;top:943px;letter-spacing:-0.2px">ijijjiiji.png</div>
<div class="" style="left:2514px;top:980px;width:34px;height:34px;background:rgba(150,150,150,.75);border-radius:17px"></div>
<svg class="abs" style="left:2520px;top:986px;" width="22" height="22" viewBox="0 0 16 16"><circle cx="9.5" cy="6.5" r="4.6" fill="none" stroke="#e8e8e8" stroke-width="1.3"/><path d="M6.2 9.8L1.5 14.5" fill="none" stroke="#e8e8e8" stroke-width="1.8" stroke-linecap="round" stroke-linejoin="round" /><path d="M9.5 4.5V8.5M7.5 6.5H11.5" fill="none" stroke="#e8e8e8" stroke-width="1" stroke-linecap="round" stroke-linejoin="round" /></svg>
<div class="" style="left:2514px;top:1018px;width:34px;height:34px;background:rgba(150,150,150,.75);border-radius:17px"></div>
<svg class="abs" style="left:2520px;top:1024px;" width="22" height="22" viewBox="0 0 16 16"><path d="M4.5 9V4.2Q5.2 3.4 5.9 4.2V7.5H6.5V2.6Q7.2 1.8 7.9 2.6V7.5H8.5V3Q9.2 2.2 9.9 3V7.8H10.5V4.6Q11.2 3.8 11.9 4.6V10.5Q11.9 14.5 8.4 14.5Q5.6 14.5 4.2 12L1.8 8.6Q1.9 7.4 3.2 7.8Z" fill="#e8e8e8" /></svg>
<div class="" style="left:2117px;top:989px;width:9px;height:17px;background:rgba(150,150,150,.5);border-radius:0 4px 4px 0"></div>
<div class="" style="left:2550px;top:989px;width:9px;height:17px;background:rgba(150,150,150,.5);border-radius:4px 0 0 4px"></div>
<div class="" style="left:0px;top:1411px;width:2560px;height:29px;background:#181818"></div>
<div class="t" style="left:2238px;top:1415.5px;color:#a0a0a0">Cube</div>
<div class="" style="left:2277.5px;top:1417.5px;width:1px;height:16px;background:#a0a0a0"></div>
<div class="t" style="left:2285px;top:1415.5px;color:#a0a0a0">Verts:6,874</div>
<div class="" style="left:2369px;top:1417.5px;width:1px;height:16px;background:#a0a0a0"></div>
<div class="t" style="left:2376px;top:1415.5px;color:#a0a0a0">Faces:6,872</div>
<div class="" style="left:2465px;top:1417.5px;width:1px;height:16px;background:#a0a0a0"></div>
<svg class="abs" style="left:2472.5px;top:1416.5px;" width="19" height="19" viewBox="0 0 16 16"><circle cx="8" cy="8" r="6.3" fill="none" stroke="#a0a0a0" stroke-width="1.2"/><ellipse cx="8" cy="8" rx="2.8" ry="6.3" fill="none" stroke="#a0a0a0" stroke-width="1"/><path d="M1.7 8H14.3M3 4.5Q8 6 13 4.5M3 11.5Q8 10 13 11.5" fill="none" stroke="#a0a0a0" stroke-width="1" stroke-linecap="round" stroke-linejoin="round" /></svg>
<div class="t" style="left:2491.5px;top:1421.5px;font-size:10px;color:#a0a0a0">5</div>
<div class="" style="left:2503px;top:1417.5px;width:1px;height:16px;background:#a0a0a0"></div>
<div class="t" style="left:2510.5px;top:1415.5px;color:#a0a0a0">4.4.1</div>
<div class="" style="left:60px;top:1437px;width:360px;height:3px;background:#262626;border-top:1px solid #3c3c3c"></div>
<div class="" style="left:980px;top:1437px;width:62px;height:3px;background:#2c2c2c;border-top:1px solid #3c3c3c"></div>
</body></html>
